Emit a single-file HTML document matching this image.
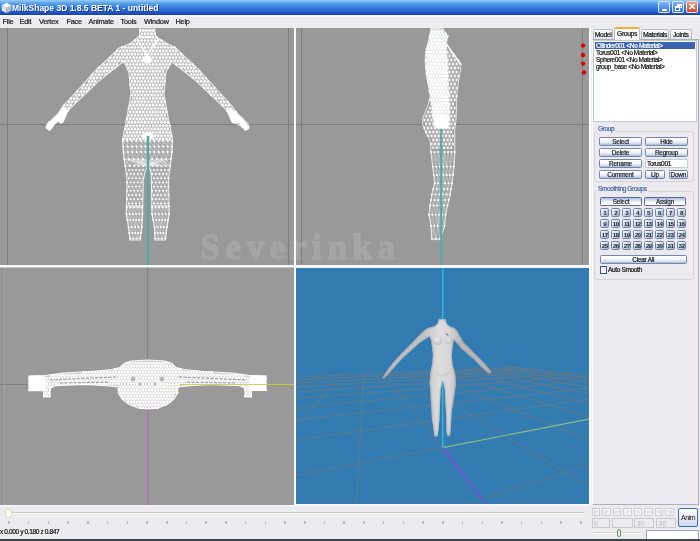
<!DOCTYPE html>
<html><head><meta charset="utf-8">
<style>
*{margin:0;padding:0;box-sizing:border-box}
html,body{width:700px;height:541px;overflow:hidden;background:#ecebf0;font-family:"Liberation Sans",sans-serif;}
.a{position:absolute}
#title{left:0;top:0;width:700px;height:16px;background:linear-gradient(#9ccdf8 0px,#7ab8f2 1.5px,#509ae8 4px,#3a82de 7px,#2c6cd4 10px,#2258c4 12.5px,#1a44a8 14.5px,#1a44a8 15px,#f4f6fa 15.01px);}
#title .t{left:12px;top:2.5px;color:#fff;font-weight:bold;font-size:8.5px;white-space:nowrap;text-shadow:1px 1px 0 #1a3c9c}
#menu{left:0;top:16px;width:700px;height:12px;background:#ecebf0;border-top:1px solid #f8f8fa;}
#menu span{position:absolute;top:0px;font-size:7.3px;letter-spacing:-0.2px;color:#1a1a1a;line-height:10px}
svg{position:absolute;left:0;top:0}
.btn{position:absolute;border:1px solid #7288ae;border-radius:1.5px;background:linear-gradient(#ffffff,#f4f6fa 45%,#d8e0ee 75%,#a9bbd6);font-size:6.4px;color:#151a28;text-align:center;line-height:7px}
.tx{position:absolute;font-size:6.6px;letter-spacing:-0.4px;white-space:nowrap;color:#111;line-height:8px}
.lbl{color:#4a64a0;background:#eceaf0;padding:0 1px}
.gb{border:1px solid #d6d4d0;border-radius:3px}
.tab{border:1px solid #b4bcc6;border-bottom:none;border-radius:2.5px 2.5px 0 0;background:linear-gradient(#ffffff,#f2f4f8 50%,#d8dee8);font-size:6.8px;letter-spacing:-0.4px;text-align:center;line-height:9px;color:#111;white-space:nowrap}
.tab.act{background:#fbfbfc;border-top:2px solid #f0b030;line-height:10px}
.btn{letter-spacing:-0.2px;white-space:nowrap;line-height:7px}
.dflt{border-color:#5a6e98;border-width:1.2px;background:linear-gradient(#aabcd8,#dfe6f2 40%,#ffffff 60%,#fff)}
.nb{position:absolute;width:9px;height:8.6px;border:1px solid #6f84aa;border-radius:1.5px;background:linear-gradient(135deg,#ffffff,#dde4ee 35%,#9aabc6);font-size:6.2px;font-weight:bold;letter-spacing:-0.5px;color:#1a2234;text-align:center;line-height:7px}
.ab{position:absolute;width:8.5px;height:7.5px;border:1px solid #d0d0d8;background:#f4f4f6;font-size:6px;letter-spacing:-0.6px;color:#b8b8c0;text-align:center;line-height:6px}
.fld{border:1px solid #c8c8d0;background:#ecebf0;font-size:7px;color:#b8b8c0;line-height:9px;padding-left:1.5px}
.btn,.tx,.tab,#menu span{-webkit-text-stroke:0.2px currentColor}
</style></head><body><div style="position:absolute;left:0;top:0;width:700px;height:541px;overflow:hidden;will-change:transform">
<div id="title" class="a">
  <div class="a" style="left:1px;top:2px;width:11px;height:12px"><svg width="11" height="12" viewBox="0 0 11 12"><path d="M5.5,0.8 L10.3,3.4 L5.5,6 L0.7,3.4Z" fill="#fbfbfb"/><path d="M0.7,3.4 L5.5,6 L5.5,11.2 L0.7,8.6Z" fill="#dfe3ea"/><path d="M10.3,3.4 L5.5,6 L5.5,11.2 L10.3,8.6Z" fill="#b9c1cc"/></svg></div>
  <div class="a t">MilkShape 3D 1.8.5 BETA 1 - untitled</div>
  <div class="a" style="left:658px;top:1px;width:12px;height:12px;border:1px solid rgba(255,255,255,0.8);border-radius:2px;background:linear-gradient(#7ab2f8,#3a76e4)"><div class="a" style="left:3px;top:7px;width:5px;height:2px;background:#fff"></div></div>
  <div class="a" style="left:672px;top:1px;width:12px;height:12px;border:1px solid rgba(255,255,255,0.8);border-radius:2px;background:linear-gradient(#7ab2f8,#3a76e4)"><div class="a" style="left:4px;top:2px;width:5px;height:4px;border:1px solid #fff;border-top-width:2px"></div><div class="a" style="left:2px;top:4px;width:5px;height:5px;border:1px solid #fff;border-top-width:2px;background:#3a74e0"></div></div>
  <div class="a" style="left:686px;top:1px;width:12px;height:12px;border:1px solid rgba(255,255,255,0.8);border-radius:2px;background:linear-gradient(#ec9878,#d04828);color:#fff;font-size:10px;font-weight:bold;line-height:10px;text-align:center">&#x2715;</div>
</div>
<div id="menu" class="a">
  <span style="left:2.5px">File</span><span style="left:19.5px">Edit</span><span style="left:39px">Vertex</span><span style="left:66.5px">Face</span><span style="left:88.5px">Animate</span><span style="left:120.5px">Tools</span><span style="left:144px">Window</span><span style="left:175.5px">Help</span>
</div>

<svg width="700" height="541" viewBox="0 0 700 541">
<defs>
  <pattern id="dots" width="3" height="3" patternUnits="userSpaceOnUse"><rect width="3" height="3" fill="#bdbdbd"/><circle cx="1.5" cy="1.5" r="1.25" fill="#fff"/></pattern>
  <pattern id="sparse" width="4" height="5" patternUnits="userSpaceOnUse"><rect width="4" height="5" fill="#fff" opacity="0.22"/><path d="M0,0 L4,5 M4,0 L0,5 M0,0 V5" stroke="#fff" stroke-width="0.6" opacity="0.75"/><circle cx="0" cy="0" r="1" fill="#fff"/><circle cx="4" cy="0" r="1" fill="#fff"/></pattern>
  <clipPath id="cfup"><rect x="0" y="0" width="300" height="141"/></clipPath>
  <clipPath id="cflo"><rect x="0" y="141" width="300" height="200"/></clipPath>
  <clipPath id="csup"><rect x="300" y="0" width="300" height="130"/></clipPath>
  <clipPath id="cslo"><rect x="300" y="130" width="300" height="200"/></clipPath>
  <clipPath id="cfront"><path d="M140,27 L154.5,27 L155.5,36 L158,38 L166,43 L176,48 L185,57 L198,69 L220,93 L232,106 L238,114 L248,124 L249,128 L246,130 L238,124 L234,123 L231,112 L226.5,110 L212,96 L196.8,81.6 L185,72 L171.4,61.6 L166,72 L164,94 L167.7,115 L172.5,139 L172,152 L168.5,180 L169.2,214 L167,227 L165.5,240 L155,240 L154.4,227 L152,214 L151.4,180 L150.8,171 L148,165.5 L145.2,171 L143.3,180 L142.5,214 L141.8,227 L140.3,240 L130,240 L128.5,227 L126.3,214 L127,180 L123.3,152 L122.6,139 L127.3,115 L131,94 L128.8,72 L123.6,61.6 L110,72 L98.2,81.6 L83,96 L68.5,110 L64,112 L61,123 L57,121 L49,130 L46,128 L47,124 L57,115 L63,106 L75,93 L97,69 L110,57 L119,48 L129.5,44 L137,38 L139.5,36 Z"/></clipPath>
  <clipPath id="cside"><path d="M431,28 L442.5,28 L447.7,36 L446.4,44 L458,62 L461,68 L458.7,80 L456.7,96 L456.7,103 L456,120 L454.8,129 L454.9,152 L454,166.6 L452.1,183.3 L450.3,194.4 L447.5,205.5 L445.7,214.7 L444.7,225.8 L440.1,239.6 L431.8,239.6 L430.9,225.8 L429,214.7 L430,205.5 L431.8,194.4 L434.6,183.3 L432.7,166.6 L430.9,152 L430.2,140.5 L425.7,132.7 L422.5,123.6 L423.1,117.2 L428.3,104.2 L430.2,96 L426.3,75 L425,59.6 L426.3,49.3 L429.6,36.3 Z"/></clipPath>
  <clipPath id="ctl"><rect x="0" y="28" width="294" height="237"/></clipPath>
  <clipPath id="ctr"><rect x="296" y="28" width="293" height="237"/></clipPath>
  <clipPath id="cbl"><rect x="0" y="267" width="294" height="238"/></clipPath>
  <clipPath id="cbr"><rect x="296" y="268" width="293" height="236"/></clipPath>
  <linearGradient id="skin" gradientUnits="userSpaceOnUse" x1="425" y1="0" x2="460" y2="0"><stop offset="0" stop-color="#c4c4c8"/><stop offset="0.4" stop-color="#dededf"/><stop offset="0.7" stop-color="#d6d6d8"/><stop offset="1" stop-color="#b8b8bc"/></linearGradient>
  <radialGradient id="breast" cx="0.45" cy="0.35" r="0.65"><stop offset="0" stop-color="#e6e6e8"/><stop offset="0.6" stop-color="#d4d4d8"/><stop offset="1" stop-color="#a8a8b0" stop-opacity="0.6"/></radialGradient>
  <filter id="ish" x="-10%" y="-10%" width="120%" height="120%"><feGaussianBlur in="SourceAlpha" stdDeviation="1.0" result="blur"/><feComposite in="SourceAlpha" in2="blur" operator="arithmetic" k2="1" k3="-1" result="edge"/><feFlood flood-color="#6a6a72" result="col"/><feComposite in="col" in2="edge" operator="in" result="sh"/><feMerge><feMergeNode in="SourceGraphic"/><feMergeNode in="sh"/></feMerge></filter>
</defs>
<rect x="0" y="28" width="589" height="477" fill="#f6f6f6"/>
<!-- TL -->
<g clip-path="url(#ctl)">
  <rect x="0" y="28" width="294" height="237" fill="#999"/>
  <g stroke="#7e7e7e" stroke-width="1"><line x1="7.5" y1="28" x2="7.5" y2="265"/><line x1="288.5" y1="28" x2="288.5" y2="265"/><line x1="0" y1="124.5" x2="294" y2="124.5"/></g>
  <path d="M140,27 L154.5,27 L155.5,36 L158,38 L166,43 L176,48 L185,57 L198,69 L220,93 L232,106 L238,114 L248,124 L249,128 L246,130 L238,124 L234,123 L231,112 L226.5,110 L212,96 L196.8,81.6 L185,72 L171.4,61.6 L166,72 L164,94 L167.7,115 L172.5,139 L172,152 L168.5,180 L169.2,214 L167,227 L165.5,240 L155,240 L154.4,227 L152,214 L151.4,180 L150.8,171 L148,165.5 L145.2,171 L143.3,180 L142.5,214 L141.8,227 L140.3,240 L130,240 L128.5,227 L126.3,214 L127,180 L123.3,152 L122.6,139 L127.3,115 L131,94 L128.8,72 L123.6,61.6 L110,72 L98.2,81.6 L83,96 L68.5,110 L64,112 L61,123 L57,121 L49,130 L46,128 L47,124 L57,115 L63,106 L75,93 L97,69 L110,57 L119,48 L129.5,44 L137,38 L139.5,36 Z" fill="#fff" fill-opacity="0.12" stroke="#fff" stroke-width="1.1" stroke-opacity="0.8"/>
  <path d="M140,27 L154.5,27 L155.5,36 L158,38 L166,43 L176,48 L185,57 L198,69 L220,93 L232,106 L238,114 L248,124 L249,128 L246,130 L238,124 L234,123 L231,112 L226.5,110 L212,96 L196.8,81.6 L185,72 L171.4,61.6 L166,72 L164,94 L167.7,115 L172.5,139 L172,152 L168.5,180 L169.2,214 L167,227 L165.5,240 L155,240 L154.4,227 L152,214 L151.4,180 L150.8,171 L148,165.5 L145.2,171 L143.3,180 L142.5,214 L141.8,227 L140.3,240 L130,240 L128.5,227 L126.3,214 L127,180 L123.3,152 L122.6,139 L127.3,115 L131,94 L128.8,72 L123.6,61.6 L110,72 L98.2,81.6 L83,96 L68.5,110 L64,112 L61,123 L57,121 L49,130 L46,128 L47,124 L57,115 L63,106 L75,93 L97,69 L110,57 L119,48 L129.5,44 L137,38 L139.5,36 Z" fill="#fff" fill-opacity="0.12" clip-path="url(#cfup)"/>
  <path d="M140.0 30.4L143.3 30.4M140.0 30.4L141.7 33.8M143.3 30.4L146.7 30.4M143.3 30.4L141.7 33.8M143.3 30.4L145.0 33.8M146.7 30.4L150.0 30.4M146.7 30.4L145.0 33.8M146.7 30.4L148.3 33.8M150.0 30.4L153.2 30.4M150.0 30.4L148.3 33.8M150.0 30.4L151.6 33.8M153.2 30.4L151.6 33.8M153.2 30.4L154.9 33.8M141.7 33.8L145.0 33.8M141.7 33.8L140.0 37.2M141.7 33.8L143.3 37.2M145.0 33.8L148.3 33.8M145.0 33.8L143.3 37.2M145.0 33.8L146.7 37.2M148.3 33.8L151.6 33.8M148.3 33.8L146.7 37.2M148.3 33.8L150.0 37.2M151.6 33.8L154.9 33.8M151.6 33.8L150.0 37.2M151.6 33.8L153.2 37.2M154.9 33.8L153.2 37.2M154.9 33.8L156.5 37.2M140.0 37.2L143.3 37.2M140.0 37.2L138.4 40.6M140.0 37.2L141.7 40.6M143.3 37.2L146.7 37.2M143.3 37.2L141.7 40.6M143.3 37.2L145.0 40.6M146.7 37.2L150.0 37.2M146.7 37.2L145.0 40.6M146.7 37.2L148.3 40.6M150.0 37.2L153.2 37.2M150.0 37.2L148.3 40.6M150.0 37.2L151.6 40.6M153.2 37.2L156.5 37.2M153.2 37.2L151.6 40.6M153.2 37.2L154.9 40.6M156.5 37.2L154.9 40.6M156.5 37.2L158.2 40.6M135.1 40.6L138.4 40.6M135.1 40.6L133.5 44.0M135.1 40.6L136.8 44.0M138.4 40.6L141.7 40.6M138.4 40.6L136.8 44.0M138.4 40.6L140.0 44.0M141.7 40.6L145.0 40.6M141.7 40.6L140.0 44.0M141.7 40.6L143.3 44.0M145.0 40.6L148.3 40.6M145.0 40.6L143.3 44.0M145.0 40.6L146.7 44.0M148.3 40.6L151.6 40.6M148.3 40.6L146.7 44.0M148.3 40.6L150.0 44.0M151.6 40.6L154.9 40.6M151.6 40.6L150.0 44.0M151.6 40.6L153.2 44.0M154.9 40.6L158.2 40.6M154.9 40.6L153.2 44.0M154.9 40.6L156.5 44.0M158.2 40.6L161.5 40.6M158.2 40.6L156.5 44.0M158.2 40.6L159.8 44.0M161.5 40.6L159.8 44.0M161.5 40.6L163.2 44.0M130.2 44.0L133.5 44.0M130.2 44.0L128.5 47.4M130.2 44.0L131.8 47.4M133.5 44.0L136.8 44.0M133.5 44.0L131.8 47.4M133.5 44.0L135.1 47.4M136.8 44.0L140.0 44.0M136.8 44.0L135.1 47.4M136.8 44.0L138.4 47.4M140.0 44.0L143.3 44.0M140.0 44.0L138.4 47.4M140.0 44.0L141.7 47.4M143.3 44.0L146.7 44.0M143.3 44.0L141.7 47.4M143.3 44.0L145.0 47.4M146.7 44.0L150.0 44.0M146.7 44.0L145.0 47.4M146.7 44.0L148.3 47.4M150.0 44.0L153.2 44.0M150.0 44.0L148.3 47.4M150.0 44.0L151.6 47.4M153.2 44.0L156.5 44.0M153.2 44.0L151.6 47.4M153.2 44.0L154.9 47.4M156.5 44.0L159.8 44.0M156.5 44.0L154.9 47.4M156.5 44.0L158.2 47.4M159.8 44.0L163.2 44.0M159.8 44.0L158.2 47.4M159.8 44.0L161.5 47.4M163.2 44.0L166.5 44.0M163.2 44.0L161.5 47.4M163.2 44.0L164.8 47.4M166.5 44.0L164.8 47.4M166.5 44.0L168.1 47.4M121.9 47.4L125.2 47.4M121.9 47.4L120.2 50.8M121.9 47.4L123.5 50.8M125.2 47.4L128.5 47.4M125.2 47.4L123.5 50.8M125.2 47.4L126.8 50.8M128.5 47.4L131.8 47.4M128.5 47.4L126.8 50.8M128.5 47.4L130.2 50.8M131.8 47.4L135.1 47.4M131.8 47.4L130.2 50.8M131.8 47.4L133.5 50.8M135.1 47.4L138.4 47.4M135.1 47.4L133.5 50.8M135.1 47.4L136.8 50.8M138.4 47.4L141.7 47.4M138.4 47.4L136.8 50.8M138.4 47.4L140.0 50.8M141.7 47.4L145.0 47.4M141.7 47.4L140.0 50.8M141.7 47.4L143.3 50.8M145.0 47.4L148.3 47.4M145.0 47.4L143.3 50.8M145.0 47.4L146.7 50.8M148.3 47.4L151.6 47.4M148.3 47.4L146.7 50.8M148.3 47.4L150.0 50.8M151.6 47.4L154.9 47.4M151.6 47.4L150.0 50.8M151.6 47.4L153.2 50.8M154.9 47.4L158.2 47.4M154.9 47.4L153.2 50.8M154.9 47.4L156.5 50.8M158.2 47.4L161.5 47.4M158.2 47.4L156.5 50.8M158.2 47.4L159.8 50.8M161.5 47.4L164.8 47.4M161.5 47.4L159.8 50.8M161.5 47.4L163.2 50.8M164.8 47.4L168.1 47.4M164.8 47.4L163.2 50.8M164.8 47.4L166.5 50.8M168.1 47.4L171.4 47.4M168.1 47.4L166.5 50.8M168.1 47.4L169.8 50.8M171.4 47.4L174.7 47.4M171.4 47.4L169.8 50.8M171.4 47.4L173.0 50.8M174.7 47.4L173.0 50.8M174.7 47.4L176.3 50.8M117.0 50.8L120.2 50.8M117.0 50.8L115.3 54.2M117.0 50.8L118.6 54.2M120.2 50.8L123.5 50.8M120.2 50.8L118.6 54.2M120.2 50.8L121.9 54.2M123.5 50.8L126.8 50.8M123.5 50.8L121.9 54.2M123.5 50.8L125.2 54.2M126.8 50.8L130.2 50.8M126.8 50.8L125.2 54.2M126.8 50.8L128.5 54.2M130.2 50.8L133.5 50.8M130.2 50.8L128.5 54.2M130.2 50.8L131.8 54.2M133.5 50.8L136.8 50.8M133.5 50.8L131.8 54.2M133.5 50.8L135.1 54.2M136.8 50.8L140.0 50.8M136.8 50.8L135.1 54.2M136.8 50.8L138.4 54.2M140.0 50.8L143.3 50.8M140.0 50.8L138.4 54.2M140.0 50.8L141.7 54.2M143.3 50.8L146.7 50.8M143.3 50.8L141.7 54.2M143.3 50.8L145.0 54.2M146.7 50.8L150.0 50.8M146.7 50.8L145.0 54.2M146.7 50.8L148.3 54.2M150.0 50.8L153.2 50.8M150.0 50.8L148.3 54.2M150.0 50.8L151.6 54.2M153.2 50.8L156.5 50.8M153.2 50.8L151.6 54.2M153.2 50.8L154.9 54.2M156.5 50.8L159.8 50.8M156.5 50.8L154.9 54.2M156.5 50.8L158.2 54.2M159.8 50.8L163.2 50.8M159.8 50.8L158.2 54.2M159.8 50.8L161.5 54.2M163.2 50.8L166.5 50.8M163.2 50.8L161.5 54.2M163.2 50.8L164.8 54.2M166.5 50.8L169.8 50.8M166.5 50.8L164.8 54.2M166.5 50.8L168.1 54.2M169.8 50.8L173.0 50.8M169.8 50.8L168.1 54.2M169.8 50.8L171.4 54.2M173.0 50.8L176.3 50.8M173.0 50.8L171.4 54.2M173.0 50.8L174.7 54.2M176.3 50.8L174.7 54.2M176.3 50.8L178.0 54.2M115.3 54.2L118.6 54.2M115.3 54.2L113.7 57.6M115.3 54.2L117.0 57.6M118.6 54.2L121.9 54.2M118.6 54.2L117.0 57.6M118.6 54.2L120.2 57.6M121.9 54.2L125.2 54.2M121.9 54.2L120.2 57.6M121.9 54.2L123.5 57.6M125.2 54.2L128.5 54.2M125.2 54.2L123.5 57.6M125.2 54.2L126.8 57.6M128.5 54.2L131.8 54.2M128.5 54.2L126.8 57.6M128.5 54.2L130.2 57.6M131.8 54.2L135.1 54.2M131.8 54.2L130.2 57.6M131.8 54.2L133.5 57.6M135.1 54.2L138.4 54.2M135.1 54.2L133.5 57.6M135.1 54.2L136.8 57.6M138.4 54.2L141.7 54.2M138.4 54.2L136.8 57.6M138.4 54.2L140.0 57.6M141.7 54.2L145.0 54.2M141.7 54.2L140.0 57.6M141.7 54.2L143.3 57.6M145.0 54.2L148.3 54.2M145.0 54.2L143.3 57.6M145.0 54.2L146.7 57.6M148.3 54.2L151.6 54.2M148.3 54.2L146.7 57.6M148.3 54.2L150.0 57.6M151.6 54.2L154.9 54.2M151.6 54.2L150.0 57.6M151.6 54.2L153.2 57.6M154.9 54.2L158.2 54.2M154.9 54.2L153.2 57.6M154.9 54.2L156.5 57.6M158.2 54.2L161.5 54.2M158.2 54.2L156.5 57.6M158.2 54.2L159.8 57.6M161.5 54.2L164.8 54.2M161.5 54.2L159.8 57.6M161.5 54.2L163.2 57.6M164.8 54.2L168.1 54.2M164.8 54.2L163.2 57.6M164.8 54.2L166.5 57.6M168.1 54.2L171.4 54.2M168.1 54.2L166.5 57.6M168.1 54.2L169.8 57.6M171.4 54.2L174.7 54.2M171.4 54.2L169.8 57.6M171.4 54.2L173.0 57.6M174.7 54.2L178.0 54.2M174.7 54.2L173.0 57.6M174.7 54.2L176.3 57.6M178.0 54.2L181.3 54.2M178.0 54.2L176.3 57.6M178.0 54.2L179.7 57.6M181.3 54.2L179.7 57.6M181.3 54.2L182.9 57.6M110.3 57.6L113.7 57.6M110.3 57.6L108.7 61.0M110.3 57.6L112.0 61.0M113.7 57.6L117.0 57.6M113.7 57.6L112.0 61.0M113.7 57.6L115.3 61.0M117.0 57.6L120.2 57.6M117.0 57.6L115.3 61.0M117.0 57.6L118.6 61.0M120.2 57.6L123.5 57.6M120.2 57.6L118.6 61.0M120.2 57.6L121.9 61.0M123.5 57.6L126.8 57.6M123.5 57.6L121.9 61.0M123.5 57.6L125.2 61.0M126.8 57.6L130.2 57.6M126.8 57.6L125.2 61.0M126.8 57.6L128.5 61.0M130.2 57.6L133.5 57.6M130.2 57.6L128.5 61.0M130.2 57.6L131.8 61.0M133.5 57.6L136.8 57.6M133.5 57.6L131.8 61.0M133.5 57.6L135.1 61.0M136.8 57.6L140.0 57.6M136.8 57.6L135.1 61.0M136.8 57.6L138.4 61.0M140.0 57.6L143.3 57.6M140.0 57.6L138.4 61.0M140.0 57.6L141.7 61.0M143.3 57.6L146.7 57.6M143.3 57.6L141.7 61.0M143.3 57.6L145.0 61.0M146.7 57.6L150.0 57.6M146.7 57.6L145.0 61.0M146.7 57.6L148.3 61.0M150.0 57.6L153.2 57.6M150.0 57.6L148.3 61.0M150.0 57.6L151.6 61.0M153.2 57.6L156.5 57.6M153.2 57.6L151.6 61.0M153.2 57.6L154.9 61.0M156.5 57.6L159.8 57.6M156.5 57.6L154.9 61.0M156.5 57.6L158.2 61.0M159.8 57.6L163.2 57.6M159.8 57.6L158.2 61.0M159.8 57.6L161.5 61.0M163.2 57.6L166.5 57.6M163.2 57.6L161.5 61.0M163.2 57.6L164.8 61.0M166.5 57.6L169.8 57.6M166.5 57.6L164.8 61.0M166.5 57.6L168.1 61.0M169.8 57.6L173.0 57.6M169.8 57.6L168.1 61.0M169.8 57.6L171.4 61.0M173.0 57.6L176.3 57.6M173.0 57.6L171.4 61.0M173.0 57.6L174.7 61.0M176.3 57.6L179.7 57.6M176.3 57.6L174.7 61.0M176.3 57.6L178.0 61.0M179.7 57.6L182.9 57.6M179.7 57.6L178.0 61.0M179.7 57.6L181.3 61.0M182.9 57.6L181.3 61.0M182.9 57.6L184.6 61.0M108.7 61.0L112.0 61.0M108.7 61.0L107.1 64.4M108.7 61.0L110.3 64.4M112.0 61.0L115.3 61.0M112.0 61.0L110.3 64.4M112.0 61.0L113.7 64.4M115.3 61.0L118.6 61.0M115.3 61.0L113.7 64.4M115.3 61.0L117.0 64.4M118.6 61.0L121.9 61.0M118.6 61.0L117.0 64.4M121.9 61.0L125.2 61.0M125.2 61.0L128.5 61.0M125.2 61.0L126.8 64.4M128.5 61.0L131.8 61.0M128.5 61.0L126.8 64.4M128.5 61.0L130.2 64.4M131.8 61.0L135.1 61.0M131.8 61.0L130.2 64.4M131.8 61.0L133.5 64.4M135.1 61.0L138.4 61.0M135.1 61.0L133.5 64.4M135.1 61.0L136.8 64.4M138.4 61.0L141.7 61.0M138.4 61.0L136.8 64.4M138.4 61.0L140.0 64.4M141.7 61.0L145.0 61.0M141.7 61.0L140.0 64.4M141.7 61.0L143.3 64.4M145.0 61.0L148.3 61.0M145.0 61.0L143.3 64.4M145.0 61.0L146.7 64.4M148.3 61.0L151.6 61.0M148.3 61.0L146.7 64.4M148.3 61.0L150.0 64.4M151.6 61.0L154.9 61.0M151.6 61.0L150.0 64.4M151.6 61.0L153.2 64.4M154.9 61.0L158.2 61.0M154.9 61.0L153.2 64.4M154.9 61.0L156.5 64.4M158.2 61.0L161.5 61.0M158.2 61.0L156.5 64.4M158.2 61.0L159.8 64.4M161.5 61.0L164.8 61.0M161.5 61.0L159.8 64.4M161.5 61.0L163.2 64.4M164.8 61.0L168.1 61.0M164.8 61.0L163.2 64.4M164.8 61.0L166.5 64.4M168.1 61.0L171.4 61.0M168.1 61.0L166.5 64.4M168.1 61.0L169.8 64.4M171.4 61.0L174.7 61.0M171.4 61.0L169.8 64.4M174.7 61.0L178.0 61.0M174.7 61.0L176.3 64.4M178.0 61.0L181.3 61.0M178.0 61.0L176.3 64.4M178.0 61.0L179.7 64.4M181.3 61.0L184.6 61.0M181.3 61.0L179.7 64.4M181.3 61.0L182.9 64.4M184.6 61.0L187.9 61.0M184.6 61.0L182.9 64.4M184.6 61.0L186.2 64.4M187.9 61.0L186.2 64.4M187.9 61.0L189.6 64.4M103.8 64.4L107.1 64.4M103.8 64.4L102.1 67.8M103.8 64.4L105.4 67.8M107.1 64.4L110.3 64.4M107.1 64.4L105.4 67.8M107.1 64.4L108.7 67.8M110.3 64.4L113.7 64.4M110.3 64.4L108.7 67.8M110.3 64.4L112.0 67.8M113.7 64.4L117.0 64.4M113.7 64.4L112.0 67.8M113.7 64.4L115.3 67.8M117.0 64.4L115.3 67.8M126.8 64.4L130.2 64.4M126.8 64.4L128.5 67.8M130.2 64.4L133.5 64.4M130.2 64.4L128.5 67.8M130.2 64.4L131.8 67.8M133.5 64.4L136.8 64.4M133.5 64.4L131.8 67.8M133.5 64.4L135.1 67.8M136.8 64.4L140.0 64.4M136.8 64.4L135.1 67.8M136.8 64.4L138.4 67.8M140.0 64.4L143.3 64.4M140.0 64.4L138.4 67.8M140.0 64.4L141.7 67.8M143.3 64.4L146.7 64.4M143.3 64.4L141.7 67.8M143.3 64.4L145.0 67.8M146.7 64.4L150.0 64.4M146.7 64.4L145.0 67.8M146.7 64.4L148.3 67.8M150.0 64.4L153.2 64.4M150.0 64.4L148.3 67.8M150.0 64.4L151.6 67.8M153.2 64.4L156.5 64.4M153.2 64.4L151.6 67.8M153.2 64.4L154.9 67.8M156.5 64.4L159.8 64.4M156.5 64.4L154.9 67.8M156.5 64.4L158.2 67.8M159.8 64.4L163.2 64.4M159.8 64.4L158.2 67.8M159.8 64.4L161.5 67.8M163.2 64.4L166.5 64.4M163.2 64.4L161.5 67.8M163.2 64.4L164.8 67.8M166.5 64.4L169.8 64.4M166.5 64.4L164.8 67.8M166.5 64.4L168.1 67.8M169.8 64.4L168.1 67.8M176.3 64.4L179.7 64.4M179.7 64.4L182.9 64.4M179.7 64.4L181.3 67.8M182.9 64.4L186.2 64.4M182.9 64.4L181.3 67.8M182.9 64.4L184.6 67.8M186.2 64.4L189.6 64.4M186.2 64.4L184.6 67.8M186.2 64.4L187.9 67.8M189.6 64.4L192.8 64.4M189.6 64.4L187.9 67.8M189.6 64.4L191.2 67.8M192.8 64.4L191.2 67.8M192.8 64.4L194.5 67.8M98.8 67.8L102.1 67.8M98.8 67.8L97.2 71.2M98.8 67.8L100.5 71.2M102.1 67.8L105.4 67.8M102.1 67.8L100.5 71.2M102.1 67.8L103.8 71.2M105.4 67.8L108.7 67.8M105.4 67.8L103.8 71.2M105.4 67.8L107.1 71.2M108.7 67.8L112.0 67.8M108.7 67.8L107.1 71.2M108.7 67.8L110.3 71.2M112.0 67.8L115.3 67.8M112.0 67.8L110.3 71.2M128.5 67.8L131.8 67.8M128.5 67.8L130.2 71.2M131.8 67.8L135.1 67.8M131.8 67.8L130.2 71.2M131.8 67.8L133.5 71.2M135.1 67.8L138.4 67.8M135.1 67.8L133.5 71.2M135.1 67.8L136.8 71.2M138.4 67.8L141.7 67.8M138.4 67.8L136.8 71.2M138.4 67.8L140.0 71.2M141.7 67.8L145.0 67.8M141.7 67.8L140.0 71.2M141.7 67.8L143.3 71.2M145.0 67.8L148.3 67.8M145.0 67.8L143.3 71.2M145.0 67.8L146.7 71.2M148.3 67.8L151.6 67.8M148.3 67.8L146.7 71.2M148.3 67.8L150.0 71.2M151.6 67.8L154.9 67.8M151.6 67.8L150.0 71.2M151.6 67.8L153.2 71.2M154.9 67.8L158.2 67.8M154.9 67.8L153.2 71.2M154.9 67.8L156.5 71.2M158.2 67.8L161.5 67.8M158.2 67.8L156.5 71.2M158.2 67.8L159.8 71.2M161.5 67.8L164.8 67.8M161.5 67.8L159.8 71.2M161.5 67.8L163.2 71.2M164.8 67.8L168.1 67.8M164.8 67.8L163.2 71.2M181.3 67.8L184.6 67.8M184.6 67.8L187.9 67.8M184.6 67.8L186.2 71.2M187.9 67.8L191.2 67.8M187.9 67.8L186.2 71.2M187.9 67.8L189.6 71.2M191.2 67.8L194.5 67.8M191.2 67.8L189.6 71.2M191.2 67.8L192.8 71.2M194.5 67.8L192.8 71.2M194.5 67.8L196.2 71.2M97.2 71.2L100.5 71.2M97.2 71.2L95.5 74.6M97.2 71.2L98.8 74.6M100.5 71.2L103.8 71.2M100.5 71.2L98.8 74.6M100.5 71.2L102.1 74.6M103.8 71.2L107.1 71.2M103.8 71.2L102.1 74.6M103.8 71.2L105.4 74.6M107.1 71.2L110.3 71.2M107.1 71.2L105.4 74.6M130.2 71.2L133.5 71.2M130.2 71.2L131.8 74.6M133.5 71.2L136.8 71.2M133.5 71.2L131.8 74.6M133.5 71.2L135.1 74.6M136.8 71.2L140.0 71.2M136.8 71.2L135.1 74.6M136.8 71.2L138.4 74.6M140.0 71.2L143.3 71.2M140.0 71.2L138.4 74.6M140.0 71.2L141.7 74.6M143.3 71.2L146.7 71.2M143.3 71.2L141.7 74.6M143.3 71.2L145.0 74.6M146.7 71.2L150.0 71.2M146.7 71.2L145.0 74.6M146.7 71.2L148.3 74.6M150.0 71.2L153.2 71.2M150.0 71.2L148.3 74.6M150.0 71.2L151.6 74.6M153.2 71.2L156.5 71.2M153.2 71.2L151.6 74.6M153.2 71.2L154.9 74.6M156.5 71.2L159.8 71.2M156.5 71.2L154.9 74.6M156.5 71.2L158.2 74.6M159.8 71.2L163.2 71.2M159.8 71.2L158.2 74.6M159.8 71.2L161.5 74.6M163.2 71.2L161.5 74.6M163.2 71.2L164.8 74.6M186.2 71.2L189.6 71.2M189.6 71.2L192.8 71.2M189.6 71.2L191.2 74.6M192.8 71.2L196.2 71.2M192.8 71.2L191.2 74.6M192.8 71.2L194.5 74.6M196.2 71.2L199.4 71.2M196.2 71.2L194.5 74.6M196.2 71.2L197.8 74.6M199.4 71.2L197.8 74.6M199.4 71.2L201.1 74.6M92.2 74.6L95.5 74.6M92.2 74.6L90.6 78.0M92.2 74.6L93.8 78.0M95.5 74.6L98.8 74.6M95.5 74.6L93.8 78.0M95.5 74.6L97.2 78.0M98.8 74.6L102.1 74.6M98.8 74.6L97.2 78.0M98.8 74.6L100.5 78.0M102.1 74.6L105.4 74.6M102.1 74.6L100.5 78.0M131.8 74.6L135.1 74.6M131.8 74.6L130.2 78.0M131.8 74.6L133.5 78.0M135.1 74.6L138.4 74.6M135.1 74.6L133.5 78.0M135.1 74.6L136.8 78.0M138.4 74.6L141.7 74.6M138.4 74.6L136.8 78.0M138.4 74.6L140.0 78.0M141.7 74.6L145.0 74.6M141.7 74.6L140.0 78.0M141.7 74.6L143.3 78.0M145.0 74.6L148.3 74.6M145.0 74.6L143.3 78.0M145.0 74.6L146.7 78.0M148.3 74.6L151.6 74.6M148.3 74.6L146.7 78.0M148.3 74.6L150.0 78.0M151.6 74.6L154.9 74.6M151.6 74.6L150.0 78.0M151.6 74.6L153.2 78.0M154.9 74.6L158.2 74.6M154.9 74.6L153.2 78.0M154.9 74.6L156.5 78.0M158.2 74.6L161.5 74.6M158.2 74.6L156.5 78.0M158.2 74.6L159.8 78.0M161.5 74.6L164.8 74.6M161.5 74.6L159.8 78.0M161.5 74.6L163.2 78.0M164.8 74.6L163.2 78.0M191.2 74.6L194.5 74.6M191.2 74.6L192.8 78.0M194.5 74.6L197.8 74.6M194.5 74.6L192.8 78.0M194.5 74.6L196.2 78.0M197.8 74.6L201.1 74.6M197.8 74.6L196.2 78.0M197.8 74.6L199.4 78.0M201.1 74.6L199.4 78.0M201.1 74.6L202.8 78.0M90.6 78.0L93.8 78.0M90.6 78.0L88.9 81.4M90.6 78.0L92.2 81.4M93.8 78.0L97.2 78.0M93.8 78.0L92.2 81.4M93.8 78.0L95.5 81.4M97.2 78.0L100.5 78.0M97.2 78.0L95.5 81.4M130.2 78.0L133.5 78.0M130.2 78.0L131.8 81.4M133.5 78.0L136.8 78.0M133.5 78.0L131.8 81.4M133.5 78.0L135.1 81.4M136.8 78.0L140.0 78.0M136.8 78.0L135.1 81.4M136.8 78.0L138.4 81.4M140.0 78.0L143.3 78.0M140.0 78.0L138.4 81.4M140.0 78.0L141.7 81.4M143.3 78.0L146.7 78.0M143.3 78.0L141.7 81.4M143.3 78.0L145.0 81.4M146.7 78.0L150.0 78.0M146.7 78.0L145.0 81.4M146.7 78.0L148.3 81.4M150.0 78.0L153.2 78.0M150.0 78.0L148.3 81.4M150.0 78.0L151.6 81.4M153.2 78.0L156.5 78.0M153.2 78.0L151.6 81.4M153.2 78.0L154.9 81.4M156.5 78.0L159.8 78.0M156.5 78.0L154.9 81.4M156.5 78.0L158.2 81.4M159.8 78.0L163.2 78.0M159.8 78.0L158.2 81.4M159.8 78.0L161.5 81.4M163.2 78.0L161.5 81.4M163.2 78.0L164.8 81.4M192.8 78.0L196.2 78.0M196.2 78.0L199.4 78.0M196.2 78.0L197.8 81.4M199.4 78.0L202.8 78.0M199.4 78.0L197.8 81.4M199.4 78.0L201.1 81.4M202.8 78.0L206.0 78.0M202.8 78.0L201.1 81.4M202.8 78.0L204.4 81.4M206.0 78.0L204.4 81.4M206.0 78.0L207.7 81.4M88.9 81.4L92.2 81.4M88.9 81.4L87.2 84.8M88.9 81.4L90.6 84.8M92.2 81.4L95.5 81.4M92.2 81.4L90.6 84.8M92.2 81.4L93.8 84.8M95.5 81.4L93.8 84.8M131.8 81.4L135.1 81.4M131.8 81.4L130.2 84.8M131.8 81.4L133.5 84.8M135.1 81.4L138.4 81.4M135.1 81.4L133.5 84.8M135.1 81.4L136.8 84.8M138.4 81.4L141.7 81.4M138.4 81.4L136.8 84.8M138.4 81.4L140.0 84.8M141.7 81.4L145.0 81.4M141.7 81.4L140.0 84.8M141.7 81.4L143.3 84.8M145.0 81.4L148.3 81.4M145.0 81.4L143.3 84.8M145.0 81.4L146.7 84.8M148.3 81.4L151.6 81.4M148.3 81.4L146.7 84.8M148.3 81.4L150.0 84.8M151.6 81.4L154.9 81.4M151.6 81.4L150.0 84.8M151.6 81.4L153.2 84.8M154.9 81.4L158.2 81.4M154.9 81.4L153.2 84.8M154.9 81.4L156.5 84.8M158.2 81.4L161.5 81.4M158.2 81.4L156.5 84.8M158.2 81.4L159.8 84.8M161.5 81.4L164.8 81.4M161.5 81.4L159.8 84.8M161.5 81.4L163.2 84.8M164.8 81.4L163.2 84.8M197.8 81.4L201.1 81.4M201.1 81.4L204.4 81.4M201.1 81.4L202.8 84.8M204.4 81.4L207.7 81.4M204.4 81.4L202.8 84.8M204.4 81.4L206.0 84.8M207.7 81.4L206.0 84.8M207.7 81.4L209.3 84.8M84.0 84.8L87.2 84.8M84.0 84.8L82.3 88.2M84.0 84.8L85.6 88.2M87.2 84.8L90.6 84.8M87.2 84.8L85.6 88.2M87.2 84.8L88.9 88.2M90.6 84.8L93.8 84.8M90.6 84.8L88.9 88.2M130.2 84.8L133.5 84.8M130.2 84.8L131.8 88.2M133.5 84.8L136.8 84.8M133.5 84.8L131.8 88.2M133.5 84.8L135.1 88.2M136.8 84.8L140.0 84.8M136.8 84.8L135.1 88.2M136.8 84.8L138.4 88.2M140.0 84.8L143.3 84.8M140.0 84.8L138.4 88.2M140.0 84.8L141.7 88.2M143.3 84.8L146.7 84.8M143.3 84.8L141.7 88.2M143.3 84.8L145.0 88.2M146.7 84.8L150.0 84.8M146.7 84.8L145.0 88.2M146.7 84.8L148.3 88.2M150.0 84.8L153.2 84.8M150.0 84.8L148.3 88.2M150.0 84.8L151.6 88.2M153.2 84.8L156.5 84.8M153.2 84.8L151.6 88.2M153.2 84.8L154.9 88.2M156.5 84.8L159.8 84.8M156.5 84.8L154.9 88.2M156.5 84.8L158.2 88.2M159.8 84.8L163.2 84.8M159.8 84.8L158.2 88.2M159.8 84.8L161.5 88.2M163.2 84.8L161.5 88.2M202.8 84.8L206.0 84.8M202.8 84.8L204.4 88.2M206.0 84.8L209.3 84.8M206.0 84.8L204.4 88.2M206.0 84.8L207.7 88.2M209.3 84.8L207.7 88.2M209.3 84.8L211.0 88.2M82.3 88.2L85.6 88.2M82.3 88.2L80.7 91.6M82.3 88.2L84.0 91.6M85.6 88.2L88.9 88.2M85.6 88.2L84.0 91.6M85.6 88.2L87.2 91.6M88.9 88.2L87.2 91.6M131.8 88.2L135.1 88.2M131.8 88.2L133.5 91.6M135.1 88.2L138.4 88.2M135.1 88.2L133.5 91.6M135.1 88.2L136.8 91.6M138.4 88.2L141.7 88.2M138.4 88.2L136.8 91.6M138.4 88.2L140.0 91.6M141.7 88.2L145.0 88.2M141.7 88.2L140.0 91.6M141.7 88.2L143.3 91.6M145.0 88.2L148.3 88.2M145.0 88.2L143.3 91.6M145.0 88.2L146.7 91.6M148.3 88.2L151.6 88.2M148.3 88.2L146.7 91.6M148.3 88.2L150.0 91.6M151.6 88.2L154.9 88.2M151.6 88.2L150.0 91.6M151.6 88.2L153.2 91.6M154.9 88.2L158.2 88.2M154.9 88.2L153.2 91.6M154.9 88.2L156.5 91.6M158.2 88.2L161.5 88.2M158.2 88.2L156.5 91.6M158.2 88.2L159.8 91.6M161.5 88.2L159.8 91.6M161.5 88.2L163.2 91.6M204.4 88.2L207.7 88.2M207.7 88.2L211.0 88.2M207.7 88.2L209.3 91.6M211.0 88.2L214.3 88.2M211.0 88.2L209.3 91.6M211.0 88.2L212.7 91.6M214.3 88.2L212.7 91.6M214.3 88.2L215.9 91.6M77.4 91.6L80.7 91.6M77.4 91.6L75.7 95.0M77.4 91.6L79.0 95.0M80.7 91.6L84.0 91.6M80.7 91.6L79.0 95.0M80.7 91.6L82.3 95.0M84.0 91.6L87.2 91.6M84.0 91.6L82.3 95.0M133.5 91.6L136.8 91.6M133.5 91.6L131.8 95.0M133.5 91.6L135.1 95.0M136.8 91.6L140.0 91.6M136.8 91.6L135.1 95.0M136.8 91.6L138.4 95.0M140.0 91.6L143.3 91.6M140.0 91.6L138.4 95.0M140.0 91.6L141.7 95.0M143.3 91.6L146.7 91.6M143.3 91.6L141.7 95.0M143.3 91.6L145.0 95.0M146.7 91.6L150.0 91.6M146.7 91.6L145.0 95.0M146.7 91.6L148.3 95.0M150.0 91.6L153.2 91.6M150.0 91.6L148.3 95.0M150.0 91.6L151.6 95.0M153.2 91.6L156.5 91.6M153.2 91.6L151.6 95.0M153.2 91.6L154.9 95.0M156.5 91.6L159.8 91.6M156.5 91.6L154.9 95.0M156.5 91.6L158.2 95.0M159.8 91.6L163.2 91.6M159.8 91.6L158.2 95.0M159.8 91.6L161.5 95.0M163.2 91.6L161.5 95.0M209.3 91.6L212.7 91.6M209.3 91.6L211.0 95.0M212.7 91.6L215.9 91.6M212.7 91.6L211.0 95.0M212.7 91.6L214.3 95.0M215.9 91.6L214.3 95.0M215.9 91.6L217.6 95.0M75.7 95.0L79.0 95.0M75.7 95.0L74.1 98.4M75.7 95.0L77.4 98.4M79.0 95.0L82.3 95.0M79.0 95.0L77.4 98.4M131.8 95.0L135.1 95.0M131.8 95.0L133.5 98.4M135.1 95.0L138.4 95.0M135.1 95.0L133.5 98.4M135.1 95.0L136.8 98.4M138.4 95.0L141.7 95.0M138.4 95.0L136.8 98.4M138.4 95.0L140.0 98.4M141.7 95.0L145.0 95.0M141.7 95.0L140.0 98.4M141.7 95.0L143.3 98.4M145.0 95.0L148.3 95.0M145.0 95.0L143.3 98.4M145.0 95.0L146.7 98.4M148.3 95.0L151.6 95.0M148.3 95.0L146.7 98.4M148.3 95.0L150.0 98.4M151.6 95.0L154.9 95.0M151.6 95.0L150.0 98.4M151.6 95.0L153.2 98.4M154.9 95.0L158.2 95.0M154.9 95.0L153.2 98.4M154.9 95.0L156.5 98.4M158.2 95.0L161.5 95.0M158.2 95.0L156.5 98.4M158.2 95.0L159.8 98.4M161.5 95.0L159.8 98.4M161.5 95.0L163.2 98.4M211.0 95.0L214.3 95.0M214.3 95.0L217.6 95.0M214.3 95.0L215.9 98.4M217.6 95.0L220.9 95.0M217.6 95.0L215.9 98.4M217.6 95.0L219.2 98.4M220.9 95.0L219.2 98.4M220.9 95.0L222.5 98.4M70.8 98.4L74.1 98.4M70.8 98.4L69.1 101.8M70.8 98.4L72.4 101.8M74.1 98.4L77.4 98.4M74.1 98.4L72.4 101.8M74.1 98.4L75.7 101.8M77.4 98.4L75.7 101.8M133.5 98.4L136.8 98.4M133.5 98.4L131.8 101.8M133.5 98.4L135.1 101.8M136.8 98.4L140.0 98.4M136.8 98.4L135.1 101.8M136.8 98.4L138.4 101.8M140.0 98.4L143.3 98.4M140.0 98.4L138.4 101.8M140.0 98.4L141.7 101.8M143.3 98.4L146.7 98.4M143.3 98.4L141.7 101.8M143.3 98.4L145.0 101.8M146.7 98.4L150.0 98.4M146.7 98.4L145.0 101.8M146.7 98.4L148.3 101.8M150.0 98.4L153.2 98.4M150.0 98.4L148.3 101.8M150.0 98.4L151.6 101.8M153.2 98.4L156.5 98.4M153.2 98.4L151.6 101.8M153.2 98.4L154.9 101.8M156.5 98.4L159.8 98.4M156.5 98.4L154.9 101.8M156.5 98.4L158.2 101.8M159.8 98.4L163.2 98.4M159.8 98.4L158.2 101.8M159.8 98.4L161.5 101.8M163.2 98.4L161.5 101.8M163.2 98.4L164.8 101.8M215.9 98.4L219.2 98.4M219.2 98.4L222.5 98.4M219.2 98.4L220.9 101.8M222.5 98.4L220.9 101.8M222.5 98.4L224.2 101.8M69.1 101.8L72.4 101.8M69.1 101.8L67.5 105.2M69.1 101.8L70.8 105.2M72.4 101.8L75.7 101.8M72.4 101.8L70.8 105.2M131.8 101.8L135.1 101.8M131.8 101.8L130.2 105.2M131.8 101.8L133.5 105.2M135.1 101.8L138.4 101.8M135.1 101.8L133.5 105.2M135.1 101.8L136.8 105.2M138.4 101.8L141.7 101.8M138.4 101.8L136.8 105.2M138.4 101.8L140.0 105.2M141.7 101.8L145.0 101.8M141.7 101.8L140.0 105.2M141.7 101.8L143.3 105.2M145.0 101.8L148.3 101.8M145.0 101.8L143.3 105.2M145.0 101.8L146.7 105.2M148.3 101.8L151.6 101.8M148.3 101.8L146.7 105.2M148.3 101.8L150.0 105.2M151.6 101.8L154.9 101.8M151.6 101.8L150.0 105.2M151.6 101.8L153.2 105.2M154.9 101.8L158.2 101.8M154.9 101.8L153.2 105.2M154.9 101.8L156.5 105.2M158.2 101.8L161.5 101.8M158.2 101.8L156.5 105.2M158.2 101.8L159.8 105.2M161.5 101.8L164.8 101.8M161.5 101.8L159.8 105.2M161.5 101.8L163.2 105.2M164.8 101.8L163.2 105.2M220.9 101.8L224.2 101.8M220.9 101.8L222.5 105.2M224.2 101.8L227.5 101.8M224.2 101.8L222.5 105.2M224.2 101.8L225.8 105.2M227.5 101.8L225.8 105.2M227.5 101.8L229.2 105.2M64.2 105.2L67.5 105.2M64.2 105.2L62.5 108.6M64.2 105.2L65.8 108.6M67.5 105.2L70.8 105.2M67.5 105.2L65.8 108.6M67.5 105.2L69.1 108.6M70.8 105.2L69.1 108.6M130.2 105.2L133.5 105.2M130.2 105.2L128.5 108.6M130.2 105.2L131.8 108.6M133.5 105.2L136.8 105.2M133.5 105.2L131.8 108.6M133.5 105.2L135.1 108.6M136.8 105.2L140.0 105.2M136.8 105.2L135.1 108.6M136.8 105.2L138.4 108.6M140.0 105.2L143.3 105.2M140.0 105.2L138.4 108.6M140.0 105.2L141.7 108.6M143.3 105.2L146.7 105.2M143.3 105.2L141.7 108.6M143.3 105.2L145.0 108.6M146.7 105.2L150.0 105.2M146.7 105.2L145.0 108.6M146.7 105.2L148.3 108.6M150.0 105.2L153.2 105.2M150.0 105.2L148.3 108.6M150.0 105.2L151.6 108.6M153.2 105.2L156.5 105.2M153.2 105.2L151.6 108.6M153.2 105.2L154.9 108.6M156.5 105.2L159.8 105.2M156.5 105.2L154.9 108.6M156.5 105.2L158.2 108.6M159.8 105.2L163.2 105.2M159.8 105.2L158.2 108.6M159.8 105.2L161.5 108.6M163.2 105.2L161.5 108.6M163.2 105.2L164.8 108.6M222.5 105.2L225.8 105.2M225.8 105.2L229.2 105.2M225.8 105.2L227.5 108.6M229.2 105.2L227.5 108.6M229.2 105.2L230.8 108.6M62.5 108.6L65.8 108.6M62.5 108.6L60.9 112.0M65.8 108.6L69.1 108.6M128.5 108.6L131.8 108.6M128.5 108.6L130.2 112.0M131.8 108.6L135.1 108.6M131.8 108.6L130.2 112.0M131.8 108.6L133.5 112.0M135.1 108.6L138.4 108.6M135.1 108.6L133.5 112.0M135.1 108.6L136.8 112.0M138.4 108.6L141.7 108.6M138.4 108.6L136.8 112.0M138.4 108.6L140.0 112.0M141.7 108.6L145.0 108.6M141.7 108.6L140.0 112.0M141.7 108.6L143.3 112.0M145.0 108.6L148.3 108.6M145.0 108.6L143.3 112.0M145.0 108.6L146.7 112.0M148.3 108.6L151.6 108.6M148.3 108.6L146.7 112.0M148.3 108.6L150.0 112.0M151.6 108.6L154.9 108.6M151.6 108.6L150.0 112.0M151.6 108.6L153.2 112.0M154.9 108.6L158.2 108.6M154.9 108.6L153.2 112.0M154.9 108.6L156.5 112.0M158.2 108.6L161.5 108.6M158.2 108.6L156.5 112.0M158.2 108.6L159.8 112.0M161.5 108.6L164.8 108.6M161.5 108.6L159.8 112.0M161.5 108.6L163.2 112.0M164.8 108.6L163.2 112.0M164.8 108.6L166.5 112.0M227.5 108.6L230.8 108.6M230.8 108.6L232.4 112.0M60.9 112.0L59.2 115.4M60.9 112.0L62.5 115.4M130.2 112.0L133.5 112.0M130.2 112.0L128.5 115.4M130.2 112.0L131.8 115.4M133.5 112.0L136.8 112.0M133.5 112.0L131.8 115.4M133.5 112.0L135.1 115.4M136.8 112.0L140.0 112.0M136.8 112.0L135.1 115.4M136.8 112.0L138.4 115.4M140.0 112.0L143.3 112.0M140.0 112.0L138.4 115.4M140.0 112.0L141.7 115.4M143.3 112.0L146.7 112.0M143.3 112.0L141.7 115.4M143.3 112.0L145.0 115.4M146.7 112.0L150.0 112.0M146.7 112.0L145.0 115.4M146.7 112.0L148.3 115.4M150.0 112.0L153.2 112.0M150.0 112.0L148.3 115.4M150.0 112.0L151.6 115.4M153.2 112.0L156.5 112.0M153.2 112.0L151.6 115.4M153.2 112.0L154.9 115.4M156.5 112.0L159.8 112.0M156.5 112.0L154.9 115.4M156.5 112.0L158.2 115.4M159.8 112.0L163.2 112.0M159.8 112.0L158.2 115.4M159.8 112.0L161.5 115.4M163.2 112.0L166.5 112.0M163.2 112.0L161.5 115.4M163.2 112.0L164.8 115.4M166.5 112.0L164.8 115.4M232.4 112.0L235.8 112.0M232.4 112.0L234.1 115.4M235.8 112.0L234.1 115.4M235.8 112.0L237.4 115.4M59.2 115.4L62.5 115.4M59.2 115.4L57.5 118.8M59.2 115.4L60.9 118.8M62.5 115.4L60.9 118.8M128.5 115.4L131.8 115.4M128.5 115.4L126.8 118.8M128.5 115.4L130.2 118.8M131.8 115.4L135.1 115.4M131.8 115.4L130.2 118.8M131.8 115.4L133.5 118.8M135.1 115.4L138.4 115.4M135.1 115.4L133.5 118.8M135.1 115.4L136.8 118.8M138.4 115.4L141.7 115.4M138.4 115.4L136.8 118.8M138.4 115.4L140.0 118.8M141.7 115.4L145.0 115.4M141.7 115.4L140.0 118.8M141.7 115.4L143.3 118.8M145.0 115.4L148.3 115.4M145.0 115.4L143.3 118.8M145.0 115.4L146.7 118.8M148.3 115.4L151.6 115.4M148.3 115.4L146.7 118.8M148.3 115.4L150.0 118.8M151.6 115.4L154.9 115.4M151.6 115.4L150.0 118.8M151.6 115.4L153.2 118.8M154.9 115.4L158.2 115.4M154.9 115.4L153.2 118.8M154.9 115.4L156.5 118.8M158.2 115.4L161.5 115.4M158.2 115.4L156.5 118.8M158.2 115.4L159.8 118.8M161.5 115.4L164.8 115.4M161.5 115.4L159.8 118.8M161.5 115.4L163.2 118.8M164.8 115.4L163.2 118.8M164.8 115.4L166.5 118.8M234.1 115.4L237.4 115.4M234.1 115.4L235.8 118.8M237.4 115.4L235.8 118.8M237.4 115.4L239.0 118.8M54.2 118.8L57.5 118.8M54.2 118.8L52.6 122.2M54.2 118.8L55.9 122.2M57.5 118.8L60.9 118.8M57.5 118.8L55.9 122.2M126.8 118.8L130.2 118.8M126.8 118.8L128.5 122.2M130.2 118.8L133.5 118.8M130.2 118.8L128.5 122.2M130.2 118.8L131.8 122.2M133.5 118.8L136.8 118.8M133.5 118.8L131.8 122.2M133.5 118.8L135.1 122.2M136.8 118.8L140.0 118.8M136.8 118.8L135.1 122.2M136.8 118.8L138.4 122.2M140.0 118.8L143.3 118.8M140.0 118.8L138.4 122.2M140.0 118.8L141.7 122.2M143.3 118.8L146.7 118.8M143.3 118.8L141.7 122.2M143.3 118.8L145.0 122.2M146.7 118.8L150.0 118.8M146.7 118.8L145.0 122.2M146.7 118.8L148.3 122.2M150.0 118.8L153.2 118.8M150.0 118.8L148.3 122.2M150.0 118.8L151.6 122.2M153.2 118.8L156.5 118.8M153.2 118.8L151.6 122.2M153.2 118.8L154.9 122.2M156.5 118.8L159.8 118.8M156.5 118.8L154.9 122.2M156.5 118.8L158.2 122.2M159.8 118.8L163.2 118.8M159.8 118.8L158.2 122.2M159.8 118.8L161.5 122.2M163.2 118.8L166.5 118.8M163.2 118.8L161.5 122.2M163.2 118.8L164.8 122.2M166.5 118.8L164.8 122.2M166.5 118.8L168.1 122.2M235.8 118.8L239.0 118.8M235.8 118.8L234.1 122.2M235.8 118.8L237.4 122.2M239.0 118.8L242.3 118.8M239.0 118.8L237.4 122.2M239.0 118.8L240.7 122.2M242.3 118.8L240.7 122.2M242.3 118.8L244.0 122.2M49.3 122.2L52.6 122.2M49.3 122.2L47.6 125.6M49.3 122.2L50.9 125.6M52.6 122.2L55.9 122.2M52.6 122.2L50.9 125.6M128.5 122.2L131.8 122.2M128.5 122.2L126.8 125.6M128.5 122.2L130.2 125.6M131.8 122.2L135.1 122.2M131.8 122.2L130.2 125.6M131.8 122.2L133.5 125.6M135.1 122.2L138.4 122.2M135.1 122.2L133.5 125.6M135.1 122.2L136.8 125.6M138.4 122.2L141.7 122.2M138.4 122.2L136.8 125.6M138.4 122.2L140.0 125.6M141.7 122.2L145.0 122.2M141.7 122.2L140.0 125.6M141.7 122.2L143.3 125.6M145.0 122.2L148.3 122.2M145.0 122.2L143.3 125.6M145.0 122.2L146.7 125.6M148.3 122.2L151.6 122.2M148.3 122.2L146.7 125.6M148.3 122.2L150.0 125.6M151.6 122.2L154.9 122.2M151.6 122.2L150.0 125.6M151.6 122.2L153.2 125.6M154.9 122.2L158.2 122.2M154.9 122.2L153.2 125.6M154.9 122.2L156.5 125.6M158.2 122.2L161.5 122.2M158.2 122.2L156.5 125.6M158.2 122.2L159.8 125.6M161.5 122.2L164.8 122.2M161.5 122.2L159.8 125.6M161.5 122.2L163.2 125.6M164.8 122.2L168.1 122.2M164.8 122.2L163.2 125.6M164.8 122.2L166.5 125.6M168.1 122.2L166.5 125.6M168.1 122.2L169.8 125.6M234.1 122.2L237.4 122.2M237.4 122.2L240.7 122.2M240.7 122.2L244.0 122.2M240.7 122.2L242.3 125.6M244.0 122.2L242.3 125.6M244.0 122.2L245.7 125.6M47.6 125.6L50.9 125.6M47.6 125.6L49.3 129.0M50.9 125.6L49.3 129.0M126.8 125.6L130.2 125.6M126.8 125.6L125.2 129.0M126.8 125.6L128.5 129.0M130.2 125.6L133.5 125.6M130.2 125.6L128.5 129.0M130.2 125.6L131.8 129.0M133.5 125.6L136.8 125.6M133.5 125.6L131.8 129.0M133.5 125.6L135.1 129.0M136.8 125.6L140.0 125.6M136.8 125.6L135.1 129.0M136.8 125.6L138.4 129.0M140.0 125.6L143.3 125.6M140.0 125.6L138.4 129.0M140.0 125.6L141.7 129.0M143.3 125.6L146.7 125.6M143.3 125.6L141.7 129.0M143.3 125.6L145.0 129.0M146.7 125.6L150.0 125.6M146.7 125.6L145.0 129.0M146.7 125.6L148.3 129.0M150.0 125.6L153.2 125.6M150.0 125.6L148.3 129.0M150.0 125.6L151.6 129.0M153.2 125.6L156.5 125.6M153.2 125.6L151.6 129.0M153.2 125.6L154.9 129.0M156.5 125.6L159.8 125.6M156.5 125.6L154.9 129.0M156.5 125.6L158.2 129.0M159.8 125.6L163.2 125.6M159.8 125.6L158.2 129.0M159.8 125.6L161.5 129.0M163.2 125.6L166.5 125.6M163.2 125.6L161.5 129.0M163.2 125.6L164.8 129.0M166.5 125.6L169.8 125.6M166.5 125.6L164.8 129.0M166.5 125.6L168.1 129.0M169.8 125.6L168.1 129.0M242.3 125.6L245.7 125.6M245.7 125.6L247.3 129.0M125.2 129.0L128.5 129.0M125.2 129.0L126.8 132.4M128.5 129.0L131.8 129.0M128.5 129.0L126.8 132.4M128.5 129.0L130.2 132.4M131.8 129.0L135.1 129.0M131.8 129.0L130.2 132.4M131.8 129.0L133.5 132.4M135.1 129.0L138.4 129.0M135.1 129.0L133.5 132.4M135.1 129.0L136.8 132.4M138.4 129.0L141.7 129.0M138.4 129.0L136.8 132.4M138.4 129.0L140.0 132.4M141.7 129.0L145.0 129.0M141.7 129.0L140.0 132.4M141.7 129.0L143.3 132.4M145.0 129.0L148.3 129.0M145.0 129.0L143.3 132.4M145.0 129.0L146.7 132.4M148.3 129.0L151.6 129.0M148.3 129.0L146.7 132.4M148.3 129.0L150.0 132.4M151.6 129.0L154.9 129.0M151.6 129.0L150.0 132.4M151.6 129.0L153.2 132.4M154.9 129.0L158.2 129.0M154.9 129.0L153.2 132.4M154.9 129.0L156.5 132.4M158.2 129.0L161.5 129.0M158.2 129.0L156.5 132.4M158.2 129.0L159.8 132.4M161.5 129.0L164.8 129.0M161.5 129.0L159.8 132.4M161.5 129.0L163.2 132.4M164.8 129.0L168.1 129.0M164.8 129.0L163.2 132.4M164.8 129.0L166.5 132.4M168.1 129.0L166.5 132.4M168.1 129.0L169.8 132.4M126.8 132.4L130.2 132.4M126.8 132.4L125.2 135.8M126.8 132.4L128.5 135.8M130.2 132.4L133.5 132.4M130.2 132.4L128.5 135.8M130.2 132.4L131.8 135.8M133.5 132.4L136.8 132.4M133.5 132.4L131.8 135.8M133.5 132.4L135.1 135.8M136.8 132.4L140.0 132.4M136.8 132.4L135.1 135.8M136.8 132.4L138.4 135.8M140.0 132.4L143.3 132.4M140.0 132.4L138.4 135.8M140.0 132.4L141.7 135.8M143.3 132.4L146.7 132.4M143.3 132.4L141.7 135.8M143.3 132.4L145.0 135.8M146.7 132.4L150.0 132.4M146.7 132.4L145.0 135.8M146.7 132.4L148.3 135.8M150.0 132.4L153.2 132.4M150.0 132.4L148.3 135.8M150.0 132.4L151.6 135.8M153.2 132.4L156.5 132.4M153.2 132.4L151.6 135.8M153.2 132.4L154.9 135.8M156.5 132.4L159.8 132.4M156.5 132.4L154.9 135.8M156.5 132.4L158.2 135.8M159.8 132.4L163.2 132.4M159.8 132.4L158.2 135.8M159.8 132.4L161.5 135.8M163.2 132.4L166.5 132.4M163.2 132.4L161.5 135.8M163.2 132.4L164.8 135.8M166.5 132.4L169.8 132.4M166.5 132.4L164.8 135.8M166.5 132.4L168.1 135.8M169.8 132.4L168.1 135.8M169.8 132.4L171.4 135.8M125.2 135.8L128.5 135.8M125.2 135.8L123.5 139.2M125.2 135.8L126.8 139.2M128.5 135.8L131.8 135.8M128.5 135.8L126.8 139.2M128.5 135.8L130.2 139.2M131.8 135.8L135.1 135.8M131.8 135.8L130.2 139.2M131.8 135.8L133.5 139.2M135.1 135.8L138.4 135.8M135.1 135.8L133.5 139.2M135.1 135.8L136.8 139.2M138.4 135.8L141.7 135.8M138.4 135.8L136.8 139.2M138.4 135.8L140.0 139.2M141.7 135.8L145.0 135.8M141.7 135.8L140.0 139.2M141.7 135.8L143.3 139.2M145.0 135.8L148.3 135.8M145.0 135.8L143.3 139.2M145.0 135.8L146.7 139.2M148.3 135.8L151.6 135.8M148.3 135.8L146.7 139.2M148.3 135.8L150.0 139.2M151.6 135.8L154.9 135.8M151.6 135.8L150.0 139.2M151.6 135.8L153.2 139.2M154.9 135.8L158.2 135.8M154.9 135.8L153.2 139.2M154.9 135.8L156.5 139.2M158.2 135.8L161.5 135.8M158.2 135.8L156.5 139.2M158.2 135.8L159.8 139.2M161.5 135.8L164.8 135.8M161.5 135.8L159.8 139.2M161.5 135.8L163.2 139.2M164.8 135.8L168.1 135.8M164.8 135.8L163.2 139.2M164.8 135.8L166.5 139.2M168.1 135.8L171.4 135.8M168.1 135.8L166.5 139.2M168.1 135.8L169.8 139.2M171.4 135.8L169.8 139.2M123.5 139.2L126.8 139.2M126.8 139.2L130.2 139.2M130.2 139.2L133.5 139.2M133.5 139.2L136.8 139.2M136.8 139.2L140.0 139.2M140.0 139.2L143.3 139.2M143.3 139.2L146.7 139.2M146.7 139.2L150.0 139.2M150.0 139.2L153.2 139.2M153.2 139.2L156.5 139.2M156.5 139.2L159.8 139.2M159.8 139.2L163.2 139.2M163.2 139.2L166.5 139.2M166.5 139.2L169.8 139.2" stroke="#fff" stroke-width="0.80" stroke-opacity="0.80" fill="none"/><path d="M140.0 30.4h0M143.3 30.4h0M146.7 30.4h0M150.0 30.4h0M153.2 30.4h0M141.7 33.8h0M145.0 33.8h0M148.3 33.8h0M151.6 33.8h0M154.9 33.8h0M140.0 37.2h0M143.3 37.2h0M146.7 37.2h0M150.0 37.2h0M153.2 37.2h0M156.5 37.2h0M135.1 40.6h0M138.4 40.6h0M141.7 40.6h0M145.0 40.6h0M148.3 40.6h0M151.6 40.6h0M154.9 40.6h0M158.2 40.6h0M161.5 40.6h0M130.2 44.0h0M133.5 44.0h0M136.8 44.0h0M140.0 44.0h0M143.3 44.0h0M146.7 44.0h0M150.0 44.0h0M153.2 44.0h0M156.5 44.0h0M159.8 44.0h0M163.2 44.0h0M166.5 44.0h0M121.9 47.4h0M125.2 47.4h0M128.5 47.4h0M131.8 47.4h0M135.1 47.4h0M138.4 47.4h0M141.7 47.4h0M145.0 47.4h0M148.3 47.4h0M151.6 47.4h0M154.9 47.4h0M158.2 47.4h0M161.5 47.4h0M164.8 47.4h0M168.1 47.4h0M171.4 47.4h0M174.7 47.4h0M117.0 50.8h0M120.2 50.8h0M123.5 50.8h0M126.8 50.8h0M130.2 50.8h0M133.5 50.8h0M136.8 50.8h0M140.0 50.8h0M143.3 50.8h0M146.7 50.8h0M150.0 50.8h0M153.2 50.8h0M156.5 50.8h0M159.8 50.8h0M163.2 50.8h0M166.5 50.8h0M169.8 50.8h0M173.0 50.8h0M176.3 50.8h0M115.3 54.2h0M118.6 54.2h0M121.9 54.2h0M125.2 54.2h0M128.5 54.2h0M131.8 54.2h0M135.1 54.2h0M138.4 54.2h0M141.7 54.2h0M145.0 54.2h0M148.3 54.2h0M151.6 54.2h0M154.9 54.2h0M158.2 54.2h0M161.5 54.2h0M164.8 54.2h0M168.1 54.2h0M171.4 54.2h0M174.7 54.2h0M178.0 54.2h0M181.3 54.2h0M110.3 57.6h0M113.7 57.6h0M117.0 57.6h0M120.2 57.6h0M123.5 57.6h0M126.8 57.6h0M130.2 57.6h0M133.5 57.6h0M136.8 57.6h0M140.0 57.6h0M143.3 57.6h0M146.7 57.6h0M150.0 57.6h0M153.2 57.6h0M156.5 57.6h0M159.8 57.6h0M163.2 57.6h0M166.5 57.6h0M169.8 57.6h0M173.0 57.6h0M176.3 57.6h0M179.7 57.6h0M182.9 57.6h0M108.7 61.0h0M112.0 61.0h0M115.3 61.0h0M118.6 61.0h0M121.9 61.0h0M125.2 61.0h0M128.5 61.0h0M131.8 61.0h0M135.1 61.0h0M138.4 61.0h0M141.7 61.0h0M145.0 61.0h0M148.3 61.0h0M151.6 61.0h0M154.9 61.0h0M158.2 61.0h0M161.5 61.0h0M164.8 61.0h0M168.1 61.0h0M171.4 61.0h0M174.7 61.0h0M178.0 61.0h0M181.3 61.0h0M184.6 61.0h0M187.9 61.0h0M103.8 64.4h0M107.1 64.4h0M110.3 64.4h0M113.7 64.4h0M117.0 64.4h0M126.8 64.4h0M130.2 64.4h0M133.5 64.4h0M136.8 64.4h0M140.0 64.4h0M143.3 64.4h0M146.7 64.4h0M150.0 64.4h0M153.2 64.4h0M156.5 64.4h0M159.8 64.4h0M163.2 64.4h0M166.5 64.4h0M169.8 64.4h0M176.3 64.4h0M179.7 64.4h0M182.9 64.4h0M186.2 64.4h0M189.6 64.4h0M192.8 64.4h0M98.8 67.8h0M102.1 67.8h0M105.4 67.8h0M108.7 67.8h0M112.0 67.8h0M115.3 67.8h0M128.5 67.8h0M131.8 67.8h0M135.1 67.8h0M138.4 67.8h0M141.7 67.8h0M145.0 67.8h0M148.3 67.8h0M151.6 67.8h0M154.9 67.8h0M158.2 67.8h0M161.5 67.8h0M164.8 67.8h0M168.1 67.8h0M181.3 67.8h0M184.6 67.8h0M187.9 67.8h0M191.2 67.8h0M194.5 67.8h0M97.2 71.2h0M100.5 71.2h0M103.8 71.2h0M107.1 71.2h0M110.3 71.2h0M130.2 71.2h0M133.5 71.2h0M136.8 71.2h0M140.0 71.2h0M143.3 71.2h0M146.7 71.2h0M150.0 71.2h0M153.2 71.2h0M156.5 71.2h0M159.8 71.2h0M163.2 71.2h0M186.2 71.2h0M189.6 71.2h0M192.8 71.2h0M196.2 71.2h0M199.4 71.2h0M92.2 74.6h0M95.5 74.6h0M98.8 74.6h0M102.1 74.6h0M105.4 74.6h0M131.8 74.6h0M135.1 74.6h0M138.4 74.6h0M141.7 74.6h0M145.0 74.6h0M148.3 74.6h0M151.6 74.6h0M154.9 74.6h0M158.2 74.6h0M161.5 74.6h0M164.8 74.6h0M191.2 74.6h0M194.5 74.6h0M197.8 74.6h0M201.1 74.6h0M90.6 78.0h0M93.8 78.0h0M97.2 78.0h0M100.5 78.0h0M130.2 78.0h0M133.5 78.0h0M136.8 78.0h0M140.0 78.0h0M143.3 78.0h0M146.7 78.0h0M150.0 78.0h0M153.2 78.0h0M156.5 78.0h0M159.8 78.0h0M163.2 78.0h0M192.8 78.0h0M196.2 78.0h0M199.4 78.0h0M202.8 78.0h0M206.0 78.0h0M88.9 81.4h0M92.2 81.4h0M95.5 81.4h0M131.8 81.4h0M135.1 81.4h0M138.4 81.4h0M141.7 81.4h0M145.0 81.4h0M148.3 81.4h0M151.6 81.4h0M154.9 81.4h0M158.2 81.4h0M161.5 81.4h0M164.8 81.4h0M197.8 81.4h0M201.1 81.4h0M204.4 81.4h0M207.7 81.4h0M84.0 84.8h0M87.2 84.8h0M90.6 84.8h0M93.8 84.8h0M130.2 84.8h0M133.5 84.8h0M136.8 84.8h0M140.0 84.8h0M143.3 84.8h0M146.7 84.8h0M150.0 84.8h0M153.2 84.8h0M156.5 84.8h0M159.8 84.8h0M163.2 84.8h0M202.8 84.8h0M206.0 84.8h0M209.3 84.8h0M82.3 88.2h0M85.6 88.2h0M88.9 88.2h0M131.8 88.2h0M135.1 88.2h0M138.4 88.2h0M141.7 88.2h0M145.0 88.2h0M148.3 88.2h0M151.6 88.2h0M154.9 88.2h0M158.2 88.2h0M161.5 88.2h0M204.4 88.2h0M207.7 88.2h0M211.0 88.2h0M214.3 88.2h0M77.4 91.6h0M80.7 91.6h0M84.0 91.6h0M87.2 91.6h0M133.5 91.6h0M136.8 91.6h0M140.0 91.6h0M143.3 91.6h0M146.7 91.6h0M150.0 91.6h0M153.2 91.6h0M156.5 91.6h0M159.8 91.6h0M163.2 91.6h0M209.3 91.6h0M212.7 91.6h0M215.9 91.6h0M75.7 95.0h0M79.0 95.0h0M82.3 95.0h0M131.8 95.0h0M135.1 95.0h0M138.4 95.0h0M141.7 95.0h0M145.0 95.0h0M148.3 95.0h0M151.6 95.0h0M154.9 95.0h0M158.2 95.0h0M161.5 95.0h0M211.0 95.0h0M214.3 95.0h0M217.6 95.0h0M220.9 95.0h0M70.8 98.4h0M74.1 98.4h0M77.4 98.4h0M133.5 98.4h0M136.8 98.4h0M140.0 98.4h0M143.3 98.4h0M146.7 98.4h0M150.0 98.4h0M153.2 98.4h0M156.5 98.4h0M159.8 98.4h0M163.2 98.4h0M215.9 98.4h0M219.2 98.4h0M222.5 98.4h0M69.1 101.8h0M72.4 101.8h0M75.7 101.8h0M131.8 101.8h0M135.1 101.8h0M138.4 101.8h0M141.7 101.8h0M145.0 101.8h0M148.3 101.8h0M151.6 101.8h0M154.9 101.8h0M158.2 101.8h0M161.5 101.8h0M164.8 101.8h0M220.9 101.8h0M224.2 101.8h0M227.5 101.8h0M64.2 105.2h0M67.5 105.2h0M70.8 105.2h0M130.2 105.2h0M133.5 105.2h0M136.8 105.2h0M140.0 105.2h0M143.3 105.2h0M146.7 105.2h0M150.0 105.2h0M153.2 105.2h0M156.5 105.2h0M159.8 105.2h0M163.2 105.2h0M222.5 105.2h0M225.8 105.2h0M229.2 105.2h0M62.5 108.6h0M65.8 108.6h0M69.1 108.6h0M128.5 108.6h0M131.8 108.6h0M135.1 108.6h0M138.4 108.6h0M141.7 108.6h0M145.0 108.6h0M148.3 108.6h0M151.6 108.6h0M154.9 108.6h0M158.2 108.6h0M161.5 108.6h0M164.8 108.6h0M227.5 108.6h0M230.8 108.6h0M60.9 112.0h0M130.2 112.0h0M133.5 112.0h0M136.8 112.0h0M140.0 112.0h0M143.3 112.0h0M146.7 112.0h0M150.0 112.0h0M153.2 112.0h0M156.5 112.0h0M159.8 112.0h0M163.2 112.0h0M166.5 112.0h0M232.4 112.0h0M235.8 112.0h0M59.2 115.4h0M62.5 115.4h0M128.5 115.4h0M131.8 115.4h0M135.1 115.4h0M138.4 115.4h0M141.7 115.4h0M145.0 115.4h0M148.3 115.4h0M151.6 115.4h0M154.9 115.4h0M158.2 115.4h0M161.5 115.4h0M164.8 115.4h0M234.1 115.4h0M237.4 115.4h0M54.2 118.8h0M57.5 118.8h0M60.9 118.8h0M126.8 118.8h0M130.2 118.8h0M133.5 118.8h0M136.8 118.8h0M140.0 118.8h0M143.3 118.8h0M146.7 118.8h0M150.0 118.8h0M153.2 118.8h0M156.5 118.8h0M159.8 118.8h0M163.2 118.8h0M166.5 118.8h0M235.8 118.8h0M239.0 118.8h0M242.3 118.8h0M49.3 122.2h0M52.6 122.2h0M55.9 122.2h0M128.5 122.2h0M131.8 122.2h0M135.1 122.2h0M138.4 122.2h0M141.7 122.2h0M145.0 122.2h0M148.3 122.2h0M151.6 122.2h0M154.9 122.2h0M158.2 122.2h0M161.5 122.2h0M164.8 122.2h0M168.1 122.2h0M234.1 122.2h0M237.4 122.2h0M240.7 122.2h0M244.0 122.2h0M47.6 125.6h0M50.9 125.6h0M126.8 125.6h0M130.2 125.6h0M133.5 125.6h0M136.8 125.6h0M140.0 125.6h0M143.3 125.6h0M146.7 125.6h0M150.0 125.6h0M153.2 125.6h0M156.5 125.6h0M159.8 125.6h0M163.2 125.6h0M166.5 125.6h0M169.8 125.6h0M242.3 125.6h0M245.7 125.6h0M49.3 129.0h0M125.2 129.0h0M128.5 129.0h0M131.8 129.0h0M135.1 129.0h0M138.4 129.0h0M141.7 129.0h0M145.0 129.0h0M148.3 129.0h0M151.6 129.0h0M154.9 129.0h0M158.2 129.0h0M161.5 129.0h0M164.8 129.0h0M168.1 129.0h0M247.3 129.0h0M126.8 132.4h0M130.2 132.4h0M133.5 132.4h0M136.8 132.4h0M140.0 132.4h0M143.3 132.4h0M146.7 132.4h0M150.0 132.4h0M153.2 132.4h0M156.5 132.4h0M159.8 132.4h0M163.2 132.4h0M166.5 132.4h0M169.8 132.4h0M125.2 135.8h0M128.5 135.8h0M131.8 135.8h0M135.1 135.8h0M138.4 135.8h0M141.7 135.8h0M145.0 135.8h0M148.3 135.8h0M151.6 135.8h0M154.9 135.8h0M158.2 135.8h0M161.5 135.8h0M164.8 135.8h0M168.1 135.8h0M171.4 135.8h0M123.5 139.2h0M126.8 139.2h0M130.2 139.2h0M133.5 139.2h0M136.8 139.2h0M140.0 139.2h0M143.3 139.2h0M146.7 139.2h0M150.0 139.2h0M153.2 139.2h0M156.5 139.2h0M159.8 139.2h0M163.2 139.2h0M166.5 139.2h0M169.8 139.2h0" stroke="#fff" stroke-width="2.20" stroke-linecap="round" fill="none"/><path d="M122.8 141.0L127.2 141.0M127.2 141.0L131.8 141.0M131.8 141.0L136.2 141.0M136.2 141.0L140.8 141.0M140.8 141.0L145.2 141.0M145.2 141.0L149.8 141.0M149.8 141.0L154.2 141.0M154.2 141.0L158.8 141.0M158.8 141.0L163.2 141.0M163.2 141.0L167.8 141.0M167.8 141.0L172.2 141.0M122.8 141.0L123.2 146.5M122.8 141.0L127.7 146.5M127.2 141.0L127.7 146.5M127.2 141.0L132.1 146.5M131.8 141.0L132.1 146.5M131.8 141.0L136.5 146.5M136.2 141.0L136.5 146.5M136.2 141.0L141.0 146.5M140.8 141.0L141.0 146.5M140.8 141.0L145.4 146.5M145.2 141.0L145.4 146.5M145.2 141.0L149.8 146.5M149.8 141.0L149.8 146.5M149.8 141.0L154.3 146.5M154.2 141.0L154.3 146.5M154.2 141.0L158.7 146.5M158.8 141.0L158.7 146.5M158.8 141.0L163.1 146.5M163.2 141.0L163.1 146.5M163.2 141.0L167.6 146.5M167.8 141.0L167.6 146.5M167.8 141.0L172.0 146.5M172.2 141.0L172.0 146.5M123.2 146.5L127.7 146.5M127.7 146.5L132.1 146.5M132.1 146.5L136.5 146.5M136.5 146.5L141.0 146.5M141.0 146.5L145.4 146.5M145.4 146.5L149.8 146.5M149.8 146.5L154.3 146.5M154.3 146.5L158.7 146.5M158.7 146.5L163.1 146.5M163.1 146.5L167.6 146.5M167.6 146.5L172.0 146.5M123.2 146.5L123.5 152.0M123.2 146.5L127.9 152.0M127.7 146.5L127.9 152.0M127.7 146.5L132.3 152.0M132.1 146.5L132.3 152.0M132.1 146.5L136.7 152.0M136.5 146.5L136.7 152.0M136.5 146.5L141.1 152.0M141.0 146.5L141.1 152.0M141.0 146.5L145.5 152.0M145.4 146.5L145.5 152.0M145.4 146.5L150.0 152.0M149.8 146.5L150.0 152.0M149.8 146.5L154.4 152.0M154.3 146.5L154.4 152.0M154.3 146.5L158.8 152.0M158.7 146.5L158.8 152.0M158.7 146.5L163.2 152.0M163.1 146.5L163.2 152.0M163.1 146.5L167.6 152.0M167.6 146.5L167.6 152.0M167.6 146.5L172.0 152.0M172.0 146.5L172.0 152.0M123.5 152.0L127.9 152.0M127.9 152.0L132.3 152.0M132.3 152.0L136.7 152.0M136.7 152.0L141.1 152.0M141.1 152.0L145.5 152.0M145.5 152.0L150.0 152.0M150.0 152.0L154.4 152.0M154.4 152.0L158.8 152.0M158.8 152.0L163.2 152.0M163.2 152.0L167.6 152.0M167.6 152.0L172.0 152.0M123.5 152.0L124.2 159.0M123.5 152.0L128.9 159.0M127.9 152.0L128.9 159.0M127.9 152.0L133.6 159.0M132.3 152.0L133.6 159.0M132.3 152.0L138.3 159.0M136.7 152.0L138.3 159.0M136.7 152.0L142.9 159.0M141.1 152.0L142.9 159.0M141.1 152.0L147.6 159.0M145.5 152.0L147.6 159.0M145.5 152.0L152.3 159.0M150.0 152.0L147.6 159.0M150.0 152.0L152.3 159.0M154.4 152.0L152.3 159.0M154.4 152.0L157.0 159.0M158.8 152.0L157.0 159.0M158.8 152.0L161.7 159.0M163.2 152.0L161.7 159.0M163.2 152.0L166.3 159.0M167.6 152.0L166.3 159.0M167.6 152.0L171.0 159.0M172.0 152.0L171.0 159.0M124.2 159.0L128.9 159.0M128.9 159.0L133.6 159.0M133.6 159.0L138.3 159.0M138.3 159.0L142.9 159.0M142.9 159.0L147.6 159.0M147.6 159.0L152.3 159.0M152.3 159.0L157.0 159.0M157.0 159.0L161.7 159.0M161.7 159.0L166.3 159.0M166.3 159.0L171.0 159.0M124.2 159.0L125.2 166.0M124.2 159.0L129.7 166.0M128.9 159.0L125.2 166.0M128.9 159.0L129.7 166.0M133.6 159.0L129.7 166.0M133.6 159.0L134.2 166.0M138.3 159.0L134.2 166.0M138.3 159.0L138.6 166.0M142.9 159.0L134.2 166.0M142.9 159.0L138.6 166.0M147.6 159.0L134.2 166.0M147.6 159.0L138.6 166.0M152.3 159.0L138.6 166.0M152.3 159.0L143.1 166.0M157.0 159.0L143.1 166.0M157.0 159.0L147.5 166.0M161.7 159.0L143.1 166.0M161.7 159.0L147.5 166.0M166.3 159.0L143.1 166.0M166.3 159.0L147.5 166.0M171.0 159.0L147.5 166.0M124.2 159.0L148.5 166.0M124.2 159.0L152.8 166.0M128.9 159.0L148.5 166.0M128.9 159.0L152.8 166.0M133.6 159.0L152.8 166.0M133.6 159.0L157.2 166.0M138.3 159.0L157.2 166.0M138.3 159.0L161.6 166.0M142.9 159.0L157.2 166.0M142.9 159.0L161.6 166.0M147.6 159.0L157.2 166.0M147.6 159.0L161.6 166.0M152.3 159.0L161.6 166.0M152.3 159.0L165.9 166.0M157.0 159.0L165.9 166.0M157.0 159.0L170.2 166.0M161.7 159.0L165.9 166.0M161.7 159.0L170.2 166.0M166.3 159.0L165.9 166.0M166.3 159.0L170.2 166.0M171.0 159.0L170.2 166.0M125.2 166.0L129.7 166.0M129.7 166.0L134.2 166.0M134.2 166.0L138.6 166.0M138.6 166.0L143.1 166.0M143.1 166.0L147.5 166.0M148.5 166.0L152.8 166.0M152.8 166.0L157.2 166.0M157.2 166.0L161.6 166.0M161.6 166.0L165.9 166.0M165.9 166.0L170.2 166.0" stroke="#fff" stroke-width="0.55" stroke-opacity="0.65" fill="none"/><path d="M122.8 141.0h0M127.2 141.0h0M131.8 141.0h0M136.2 141.0h0M140.8 141.0h0M145.2 141.0h0M149.8 141.0h0M154.2 141.0h0M158.8 141.0h0M163.2 141.0h0M167.8 141.0h0M172.2 141.0h0M123.2 146.5h0M127.7 146.5h0M132.1 146.5h0M136.5 146.5h0M141.0 146.5h0M145.4 146.5h0M149.8 146.5h0M154.3 146.5h0M158.7 146.5h0M163.1 146.5h0M167.6 146.5h0M172.0 146.5h0M123.5 152.0h0M127.9 152.0h0M132.3 152.0h0M136.7 152.0h0M141.1 152.0h0M145.5 152.0h0M150.0 152.0h0M154.4 152.0h0M158.8 152.0h0M163.2 152.0h0M167.6 152.0h0M172.0 152.0h0M124.2 159.0h0M128.9 159.0h0M133.6 159.0h0M138.3 159.0h0M142.9 159.0h0M147.6 159.0h0M152.3 159.0h0M157.0 159.0h0M161.7 159.0h0M166.3 159.0h0M171.0 159.0h0M125.2 166.0h0M129.7 166.0h0M134.2 166.0h0M138.6 166.0h0M143.1 166.0h0M147.5 166.0h0M148.5 166.0h0M152.8 166.0h0M157.2 166.0h0M161.6 166.0h0M165.9 166.0h0M170.2 166.0h0" stroke="#fff" stroke-width="1.90" stroke-linecap="round" fill="none"/><path d="M128.8 169.8L132.4 169.8M128.8 169.8L127.0 174.0M128.8 169.8L130.6 174.0M132.4 169.8L136.0 169.8M132.4 169.8L130.6 174.0M132.4 169.8L134.2 174.0M136.0 169.8L139.6 169.8M136.0 169.8L134.2 174.0M136.0 169.8L137.8 174.0M139.6 169.8L143.2 169.8M139.6 169.8L137.8 174.0M139.6 169.8L141.4 174.0M143.2 169.8L141.4 174.0M150.4 169.8L154.0 169.8M150.4 169.8L152.2 174.0M154.0 169.8L157.6 169.8M154.0 169.8L152.2 174.0M154.0 169.8L155.8 174.0M157.6 169.8L161.2 169.8M157.6 169.8L155.8 174.0M157.6 169.8L159.4 174.0M161.2 169.8L164.8 169.8M161.2 169.8L159.4 174.0M161.2 169.8L163.0 174.0M164.8 169.8L168.4 169.8M164.8 169.8L163.0 174.0M164.8 169.8L166.6 174.0M168.4 169.8L166.6 174.0M127.0 174.0L130.6 174.0M127.0 174.0L128.8 178.2M130.6 174.0L134.2 174.0M130.6 174.0L128.8 178.2M130.6 174.0L132.4 178.2M134.2 174.0L137.8 174.0M134.2 174.0L132.4 178.2M134.2 174.0L136.0 178.2M137.8 174.0L141.4 174.0M137.8 174.0L136.0 178.2M137.8 174.0L139.6 178.2M141.4 174.0L139.6 178.2M141.4 174.0L143.2 178.2M152.2 174.0L155.8 174.0M152.2 174.0L154.0 178.2M155.8 174.0L159.4 174.0M155.8 174.0L154.0 178.2M155.8 174.0L157.6 178.2M159.4 174.0L163.0 174.0M159.4 174.0L157.6 178.2M159.4 174.0L161.2 178.2M163.0 174.0L166.6 174.0M163.0 174.0L161.2 178.2M163.0 174.0L164.8 178.2M166.6 174.0L164.8 178.2M166.6 174.0L168.4 178.2M128.8 178.2L132.4 178.2M128.8 178.2L127.0 182.4M128.8 178.2L130.6 182.4M132.4 178.2L136.0 178.2M132.4 178.2L130.6 182.4M132.4 178.2L134.2 182.4M136.0 178.2L139.6 178.2M136.0 178.2L134.2 182.4M136.0 178.2L137.8 182.4M139.6 178.2L143.2 178.2M139.6 178.2L137.8 182.4M139.6 178.2L141.4 182.4M143.2 178.2L141.4 182.4M154.0 178.2L157.6 178.2M154.0 178.2L152.2 182.4M154.0 178.2L155.8 182.4M157.6 178.2L161.2 178.2M157.6 178.2L155.8 182.4M157.6 178.2L159.4 182.4M161.2 178.2L164.8 178.2M161.2 178.2L159.4 182.4M161.2 178.2L163.0 182.4M164.8 178.2L168.4 178.2M164.8 178.2L163.0 182.4M164.8 178.2L166.6 182.4M168.4 178.2L166.6 182.4M127.0 182.4L130.6 182.4M127.0 182.4L128.8 186.6M130.6 182.4L134.2 182.4M130.6 182.4L128.8 186.6M130.6 182.4L132.4 186.6M134.2 182.4L137.8 182.4M134.2 182.4L132.4 186.6M134.2 182.4L136.0 186.6M137.8 182.4L141.4 182.4M137.8 182.4L136.0 186.6M137.8 182.4L139.6 186.6M141.4 182.4L139.6 186.6M152.2 182.4L155.8 182.4M152.2 182.4L154.0 186.6M155.8 182.4L159.4 182.4M155.8 182.4L154.0 186.6M155.8 182.4L157.6 186.6M159.4 182.4L163.0 182.4M159.4 182.4L157.6 186.6M159.4 182.4L161.2 186.6M163.0 182.4L166.6 182.4M163.0 182.4L161.2 186.6M163.0 182.4L164.8 186.6M166.6 182.4L164.8 186.6M166.6 182.4L168.4 186.6M128.8 186.6L132.4 186.6M128.8 186.6L127.0 190.8M128.8 186.6L130.6 190.8M132.4 186.6L136.0 186.6M132.4 186.6L130.6 190.8M132.4 186.6L134.2 190.8M136.0 186.6L139.6 186.6M136.0 186.6L134.2 190.8M136.0 186.6L137.8 190.8M139.6 186.6L137.8 190.8M139.6 186.6L141.4 190.8M154.0 186.6L157.6 186.6M154.0 186.6L152.2 190.8M154.0 186.6L155.8 190.8M157.6 186.6L161.2 186.6M157.6 186.6L155.8 190.8M157.6 186.6L159.4 190.8M161.2 186.6L164.8 186.6M161.2 186.6L159.4 190.8M161.2 186.6L163.0 190.8M164.8 186.6L168.4 186.6M164.8 186.6L163.0 190.8M164.8 186.6L166.6 190.8M168.4 186.6L166.6 190.8M127.0 190.8L130.6 190.8M127.0 190.8L128.8 195.0M130.6 190.8L134.2 190.8M130.6 190.8L128.8 195.0M130.6 190.8L132.4 195.0M134.2 190.8L137.8 190.8M134.2 190.8L132.4 195.0M134.2 190.8L136.0 195.0M137.8 190.8L141.4 190.8M137.8 190.8L136.0 195.0M137.8 190.8L139.6 195.0M141.4 190.8L139.6 195.0M152.2 190.8L155.8 190.8M152.2 190.8L154.0 195.0M155.8 190.8L159.4 190.8M155.8 190.8L154.0 195.0M155.8 190.8L157.6 195.0M159.4 190.8L163.0 190.8M159.4 190.8L157.6 195.0M159.4 190.8L161.2 195.0M163.0 190.8L166.6 190.8M163.0 190.8L161.2 195.0M163.0 190.8L164.8 195.0M166.6 190.8L164.8 195.0M166.6 190.8L168.4 195.0M128.8 195.0L132.4 195.0M128.8 195.0L127.0 199.2M128.8 195.0L130.6 199.2M132.4 195.0L136.0 195.0M132.4 195.0L130.6 199.2M132.4 195.0L134.2 199.2M136.0 195.0L139.6 195.0M136.0 195.0L134.2 199.2M136.0 195.0L137.8 199.2M139.6 195.0L137.8 199.2M139.6 195.0L141.4 199.2M154.0 195.0L157.6 195.0M154.0 195.0L152.2 199.2M154.0 195.0L155.8 199.2M157.6 195.0L161.2 195.0M157.6 195.0L155.8 199.2M157.6 195.0L159.4 199.2M161.2 195.0L164.8 195.0M161.2 195.0L159.4 199.2M161.2 195.0L163.0 199.2M164.8 195.0L168.4 195.0M164.8 195.0L163.0 199.2M164.8 195.0L166.6 199.2M168.4 195.0L166.6 199.2M127.0 199.2L130.6 199.2M127.0 199.2L128.8 203.4M130.6 199.2L134.2 199.2M130.6 199.2L128.8 203.4M130.6 199.2L132.4 203.4M134.2 199.2L137.8 199.2M134.2 199.2L132.4 203.4M134.2 199.2L136.0 203.4M137.8 199.2L141.4 199.2M137.8 199.2L136.0 203.4M137.8 199.2L139.6 203.4M141.4 199.2L139.6 203.4M152.2 199.2L155.8 199.2M152.2 199.2L154.0 203.4M155.8 199.2L159.4 199.2M155.8 199.2L154.0 203.4M155.8 199.2L157.6 203.4M159.4 199.2L163.0 199.2M159.4 199.2L157.6 203.4M159.4 199.2L161.2 203.4M163.0 199.2L166.6 199.2M163.0 199.2L161.2 203.4M163.0 199.2L164.8 203.4M166.6 199.2L164.8 203.4M166.6 199.2L168.4 203.4M128.8 203.4L132.4 203.4M128.8 203.4L127.0 207.6M128.8 203.4L130.6 207.6M132.4 203.4L136.0 203.4M132.4 203.4L130.6 207.6M132.4 203.4L134.2 207.6M136.0 203.4L139.6 203.4M136.0 203.4L134.2 207.6M136.0 203.4L137.8 207.6M139.6 203.4L137.8 207.6M139.6 203.4L141.4 207.6M154.0 203.4L157.6 203.4M154.0 203.4L152.2 207.6M154.0 203.4L155.8 207.6M157.6 203.4L161.2 203.4M157.6 203.4L155.8 207.6M157.6 203.4L159.4 207.6M161.2 203.4L164.8 203.4M161.2 203.4L159.4 207.6M161.2 203.4L163.0 207.6M164.8 203.4L168.4 203.4M164.8 203.4L163.0 207.6M164.8 203.4L166.6 207.6M168.4 203.4L166.6 207.6M127.0 207.6L130.6 207.6M130.6 207.6L134.2 207.6M134.2 207.6L137.8 207.6M137.8 207.6L141.4 207.6M152.2 207.6L155.8 207.6M155.8 207.6L159.4 207.6M159.4 207.6L163.0 207.6M163.0 207.6L166.6 207.6" stroke="#fff" stroke-width="0.50" stroke-opacity="0.60" fill="none"/><path d="M128.8 169.8h0M132.4 169.8h0M136.0 169.8h0M139.6 169.8h0M143.2 169.8h0M150.4 169.8h0M154.0 169.8h0M157.6 169.8h0M161.2 169.8h0M164.8 169.8h0M168.4 169.8h0M127.0 174.0h0M130.6 174.0h0M134.2 174.0h0M137.8 174.0h0M141.4 174.0h0M152.2 174.0h0M155.8 174.0h0M159.4 174.0h0M163.0 174.0h0M166.6 174.0h0M128.8 178.2h0M132.4 178.2h0M136.0 178.2h0M139.6 178.2h0M143.2 178.2h0M154.0 178.2h0M157.6 178.2h0M161.2 178.2h0M164.8 178.2h0M168.4 178.2h0M127.0 182.4h0M130.6 182.4h0M134.2 182.4h0M137.8 182.4h0M141.4 182.4h0M152.2 182.4h0M155.8 182.4h0M159.4 182.4h0M163.0 182.4h0M166.6 182.4h0M128.8 186.6h0M132.4 186.6h0M136.0 186.6h0M139.6 186.6h0M154.0 186.6h0M157.6 186.6h0M161.2 186.6h0M164.8 186.6h0M168.4 186.6h0M127.0 190.8h0M130.6 190.8h0M134.2 190.8h0M137.8 190.8h0M141.4 190.8h0M152.2 190.8h0M155.8 190.8h0M159.4 190.8h0M163.0 190.8h0M166.6 190.8h0M128.8 195.0h0M132.4 195.0h0M136.0 195.0h0M139.6 195.0h0M154.0 195.0h0M157.6 195.0h0M161.2 195.0h0M164.8 195.0h0M168.4 195.0h0M127.0 199.2h0M130.6 199.2h0M134.2 199.2h0M137.8 199.2h0M141.4 199.2h0M152.2 199.2h0M155.8 199.2h0M159.4 199.2h0M163.0 199.2h0M166.6 199.2h0M128.8 203.4h0M132.4 203.4h0M136.0 203.4h0M139.6 203.4h0M154.0 203.4h0M157.6 203.4h0M161.2 203.4h0M164.8 203.4h0M168.4 203.4h0M127.0 207.6h0M130.6 207.6h0M134.2 207.6h0M137.8 207.6h0M141.4 207.6h0M152.2 207.6h0M155.8 207.6h0M159.4 207.6h0M163.0 207.6h0M166.6 207.6h0" stroke="#fff" stroke-width="1.80" stroke-linecap="round" fill="none"/><path d="M126.5 206.0L129.7 206.0M129.7 206.0L132.9 206.0M132.9 206.0L136.1 206.0M136.1 206.0L139.3 206.0M139.3 206.0L142.5 206.0M126.5 206.0L126.5 214.0M126.5 206.0L129.7 214.0M129.7 206.0L129.7 214.0M129.7 206.0L132.9 214.0M132.9 206.0L132.9 214.0M132.9 206.0L136.1 214.0M136.1 206.0L136.1 214.0M136.1 206.0L139.3 214.0M139.3 206.0L139.3 214.0M139.3 206.0L142.5 214.0M142.5 206.0L142.5 214.0M152.0 206.0L155.4 206.0M155.4 206.0L158.8 206.0M158.8 206.0L162.2 206.0M162.2 206.0L165.6 206.0M165.6 206.0L169.0 206.0M152.0 206.0L152.0 214.0M152.0 206.0L155.4 214.0M155.4 206.0L155.4 214.0M155.4 206.0L158.8 214.0M158.8 206.0L158.8 214.0M158.8 206.0L162.2 214.0M162.2 206.0L162.2 214.0M162.2 206.0L165.6 214.0M165.6 206.0L165.6 214.0M165.6 206.0L169.0 214.0M169.0 206.0L169.0 214.0M126.5 214.0L129.7 214.0M129.7 214.0L132.9 214.0M132.9 214.0L136.1 214.0M136.1 214.0L139.3 214.0M139.3 214.0L142.5 214.0M126.5 214.0L127.5 220.0M126.5 214.0L130.4 220.0M129.7 214.0L130.4 220.0M129.7 214.0L133.3 220.0M132.9 214.0L133.3 220.0M132.9 214.0L136.2 220.0M136.1 214.0L136.2 220.0M136.1 214.0L139.1 220.0M139.3 214.0L139.1 220.0M139.3 214.0L142.0 220.0M142.5 214.0L142.0 220.0M152.0 214.0L155.4 214.0M155.4 214.0L158.8 214.0M158.8 214.0L162.2 214.0M162.2 214.0L165.6 214.0M165.6 214.0L169.0 214.0M152.0 214.0L153.2 220.0M152.0 214.0L156.2 220.0M155.4 214.0L156.2 220.0M155.4 214.0L159.2 220.0M158.8 214.0L159.2 220.0M158.8 214.0L162.1 220.0M162.2 214.0L162.1 220.0M162.2 214.0L165.1 220.0M165.6 214.0L165.1 220.0M165.6 214.0L168.0 220.0M169.0 214.0L168.0 220.0M127.5 220.0L130.4 220.0M130.4 220.0L133.3 220.0M133.3 220.0L136.2 220.0M136.2 220.0L139.1 220.0M139.1 220.0L142.0 220.0M127.5 220.0L128.5 227.0M127.5 220.0L131.8 227.0M130.4 220.0L131.8 227.0M130.4 220.0L135.1 227.0M133.3 220.0L135.1 227.0M133.3 220.0L138.4 227.0M136.2 220.0L135.1 227.0M136.2 220.0L138.4 227.0M139.1 220.0L138.4 227.0M139.1 220.0L141.8 227.0M142.0 220.0L141.8 227.0M153.2 220.0L156.2 220.0M156.2 220.0L159.2 220.0M159.2 220.0L162.1 220.0M162.1 220.0L165.1 220.0M165.1 220.0L168.0 220.0M153.2 220.0L154.5 227.0M153.2 220.0L157.6 227.0M156.2 220.0L157.6 227.0M156.2 220.0L160.8 227.0M159.2 220.0L160.8 227.0M159.2 220.0L163.9 227.0M162.1 220.0L160.8 227.0M162.1 220.0L163.9 227.0M165.1 220.0L163.9 227.0M165.1 220.0L167.0 227.0M168.0 220.0L167.0 227.0M128.5 227.0L131.8 227.0M131.8 227.0L135.1 227.0M135.1 227.0L138.4 227.0M138.4 227.0L141.8 227.0M128.5 227.0L129.2 233.0M128.5 227.0L132.2 233.0M131.8 227.0L132.2 233.0M131.8 227.0L135.1 233.0M135.1 227.0L135.1 233.0M135.1 227.0L138.1 233.0M138.4 227.0L138.1 233.0M138.4 227.0L141.0 233.0M141.8 227.0L141.0 233.0M154.5 227.0L157.6 227.0M157.6 227.0L160.8 227.0M160.8 227.0L163.9 227.0M163.9 227.0L167.0 227.0M154.5 227.0L154.8 233.0M154.5 227.0L157.6 233.0M157.6 227.0L157.6 233.0M157.6 227.0L160.5 233.0M160.8 227.0L160.5 233.0M160.8 227.0L163.4 233.0M163.9 227.0L163.4 233.0M163.9 227.0L166.2 233.0M167.0 227.0L166.2 233.0M129.2 233.0L132.2 233.0M132.2 233.0L135.1 233.0M135.1 233.0L138.1 233.0M138.1 233.0L141.0 233.0M129.2 233.0L130.0 238.5M129.2 233.0L133.4 238.5M132.2 233.0L133.4 238.5M132.2 233.0L136.8 238.5M135.1 233.0L136.8 238.5M135.1 233.0L140.2 238.5M138.1 233.0L136.8 238.5M138.1 233.0L140.2 238.5M141.0 233.0L140.2 238.5M154.8 233.0L157.6 233.0M157.6 233.0L160.5 233.0M160.5 233.0L163.4 233.0M163.4 233.0L166.2 233.0M154.8 233.0L155.0 238.5M154.8 233.0L158.5 238.5M157.6 233.0L158.5 238.5M157.6 233.0L162.0 238.5M160.5 233.0L162.0 238.5M160.5 233.0L165.5 238.5M163.4 233.0L162.0 238.5M163.4 233.0L165.5 238.5M166.2 233.0L165.5 238.5M130.0 238.5L133.4 238.5M133.4 238.5L136.8 238.5M136.8 238.5L140.2 238.5M155.0 238.5L158.5 238.5M158.5 238.5L162.0 238.5M162.0 238.5L165.5 238.5" stroke="#fff" stroke-width="0.50" stroke-opacity="0.60" fill="none"/><path d="M126.5 206.0h0M129.7 206.0h0M132.9 206.0h0M136.1 206.0h0M139.3 206.0h0M142.5 206.0h0M152.0 206.0h0M155.4 206.0h0M158.8 206.0h0M162.2 206.0h0M165.6 206.0h0M169.0 206.0h0M126.5 214.0h0M129.7 214.0h0M132.9 214.0h0M136.1 214.0h0M139.3 214.0h0M142.5 214.0h0M152.0 214.0h0M155.4 214.0h0M158.8 214.0h0M162.2 214.0h0M165.6 214.0h0M169.0 214.0h0M127.5 220.0h0M130.4 220.0h0M133.3 220.0h0M136.2 220.0h0M139.1 220.0h0M142.0 220.0h0M153.2 220.0h0M156.2 220.0h0M159.2 220.0h0M162.1 220.0h0M165.1 220.0h0M168.0 220.0h0M128.5 227.0h0M131.8 227.0h0M135.1 227.0h0M138.4 227.0h0M141.8 227.0h0M154.5 227.0h0M157.6 227.0h0M160.8 227.0h0M163.9 227.0h0M167.0 227.0h0M129.2 233.0h0M132.2 233.0h0M135.1 233.0h0M138.1 233.0h0M141.0 233.0h0M154.8 233.0h0M157.6 233.0h0M160.5 233.0h0M163.4 233.0h0M166.2 233.0h0M130.0 238.5h0M133.4 238.5h0M136.8 238.5h0M140.2 238.5h0M155.0 238.5h0M158.5 238.5h0M162.0 238.5h0M165.5 238.5h0" stroke="#fff" stroke-width="1.90" stroke-linecap="round" fill="none"/>
  <path d="M46,127 L57,115 L64,107.5 L69,111 L67.5,112 L63,122.5 L60.5,123 L58,120 L50,130.5 Z M249,127 L238,115 L231,107.5 L226,111 L227.5,112 L232,122.5 L234.5,123 L237,120 L245,130.5 Z" fill="#fff" stroke="#fff" stroke-width="0.8"/>
  <ellipse cx="148" cy="136" rx="6" ry="3.5" fill="#fff"/>
  <ellipse cx="147.3" cy="59.5" rx="4.5" ry="4" fill="#fff"/>
  <path d="M137,38.6 L147.2,55.6 L158.3,38.6 M141,37 L154,37 M139.5,30.5 L154.5,30.5" stroke="#fff" stroke-width="1.3" fill="none"/>
  <line x1="148" y1="136" x2="148" y2="265" stroke="#5aa6a6" stroke-width="2.5"/>
  <g opacity="0.12"><text x="200.5" y="258.5" font-family="Liberation Serif" font-weight="bold" font-size="35" letter-spacing="5.6" fill="#fff" stroke="#fff" stroke-width="1.3">Severinka</text></g>
</g>
<!-- TR -->
<g clip-path="url(#ctr)">
  <rect x="296" y="28" width="293" height="237" fill="#999"/>
  <g stroke="#7e7e7e" stroke-width="1"><line x1="301.5" y1="28" x2="301.5" y2="265"/><line x1="582.5" y1="28" x2="582.5" y2="265"/><line x1="296" y1="124.5" x2="589" y2="124.5"/></g>
  <path d="M431,28 L442.5,28 L447.7,36 L446.4,44 L458,62 L461,68 L458.7,80 L456.7,96 L456.7,103 L456,120 L454.8,129 L454.9,152 L454,166.6 L452.1,183.3 L450.3,194.4 L447.5,205.5 L445.7,214.7 L444.7,225.8 L440.1,239.6 L431.8,239.6 L430.9,225.8 L429,214.7 L430,205.5 L431.8,194.4 L434.6,183.3 L432.7,166.6 L430.9,152 L430.2,140.5 L425.7,132.7 L422.5,123.6 L423.1,117.2 L428.3,104.2 L430.2,96 L426.3,75 L425,59.6 L426.3,49.3 L429.6,36.3 Z" fill="#fff" fill-opacity="0.1" stroke="#fff" stroke-width="1" stroke-opacity="0.7"/>
  <path d="M431.5 32.0L435.1 32.0M431.5 32.0L429.7 36.0M431.5 32.0L433.3 36.0M435.1 32.0L438.7 32.0M435.1 32.0L433.3 36.0M435.1 32.0L436.9 36.0M438.7 32.0L442.3 32.0M438.7 32.0L436.9 36.0M438.7 32.0L440.5 36.0M442.3 32.0L440.5 36.0M442.3 32.0L444.1 36.0M429.7 36.0L433.3 36.0M429.7 36.0L431.5 40.0M433.3 36.0L436.9 36.0M433.3 36.0L431.5 40.0M433.3 36.0L435.1 40.0M436.9 36.0L440.5 36.0M436.9 36.0L435.1 40.0M436.9 36.0L438.7 40.0M440.5 36.0L444.1 36.0M440.5 36.0L438.7 40.0M440.5 36.0L442.3 40.0M444.1 36.0L447.7 36.0M444.1 36.0L442.3 40.0M444.1 36.0L445.9 40.0M447.7 36.0L445.9 40.0M431.5 40.0L435.1 40.0M431.5 40.0L429.7 44.0M431.5 40.0L433.3 44.0M435.1 40.0L438.7 40.0M435.1 40.0L433.3 44.0M435.1 40.0L436.9 44.0M438.7 40.0L442.3 40.0M438.7 40.0L436.9 44.0M438.7 40.0L440.5 44.0M442.3 40.0L445.9 40.0M442.3 40.0L440.5 44.0M442.3 40.0L444.1 44.0M445.9 40.0L444.1 44.0M429.7 44.0L433.3 44.0M429.7 44.0L427.9 48.0M429.7 44.0L431.5 48.0M433.3 44.0L436.9 44.0M433.3 44.0L431.5 48.0M433.3 44.0L435.1 48.0M436.9 44.0L440.5 44.0M436.9 44.0L435.1 48.0M436.9 44.0L438.7 48.0M440.5 44.0L444.1 44.0M440.5 44.0L438.7 48.0M440.5 44.0L442.3 48.0M444.1 44.0L442.3 48.0M444.1 44.0L445.9 48.0M427.9 48.0L431.5 48.0M427.9 48.0L426.1 52.0M427.9 48.0L429.7 52.0M431.5 48.0L435.1 48.0M431.5 48.0L429.7 52.0M431.5 48.0L433.3 52.0M435.1 48.0L438.7 48.0M435.1 48.0L433.3 52.0M435.1 48.0L436.9 52.0M438.7 48.0L442.3 48.0M438.7 48.0L436.9 52.0M438.7 48.0L440.5 52.0M442.3 48.0L445.9 48.0M442.3 48.0L440.5 52.0M442.3 48.0L444.1 52.0M445.9 48.0L444.1 52.0M445.9 48.0L447.7 52.0M426.1 52.0L429.7 52.0M426.1 52.0L427.9 56.0M429.7 52.0L433.3 52.0M429.7 52.0L427.9 56.0M429.7 52.0L431.5 56.0M433.3 52.0L436.9 52.0M433.3 52.0L431.5 56.0M433.3 52.0L435.1 56.0M436.9 52.0L440.5 52.0M436.9 52.0L435.1 56.0M436.9 52.0L438.7 56.0M440.5 52.0L444.1 52.0M440.5 52.0L438.7 56.0M440.5 52.0L442.3 56.0M444.1 52.0L447.7 52.0M444.1 52.0L442.3 56.0M444.1 52.0L445.9 56.0M447.7 52.0L451.3 52.0M447.7 52.0L445.9 56.0M447.7 52.0L449.5 56.0M451.3 52.0L449.5 56.0M451.3 52.0L453.1 56.0M427.9 56.0L431.5 56.0M427.9 56.0L426.1 60.0M427.9 56.0L429.7 60.0M431.5 56.0L435.1 56.0M431.5 56.0L429.7 60.0M431.5 56.0L433.3 60.0M435.1 56.0L438.7 56.0M435.1 56.0L433.3 60.0M435.1 56.0L436.9 60.0M438.7 56.0L442.3 56.0M438.7 56.0L436.9 60.0M438.7 56.0L440.5 60.0M442.3 56.0L445.9 56.0M442.3 56.0L440.5 60.0M442.3 56.0L444.1 60.0M445.9 56.0L449.5 56.0M445.9 56.0L444.1 60.0M445.9 56.0L447.7 60.0M449.5 56.0L453.1 56.0M449.5 56.0L447.7 60.0M449.5 56.0L451.3 60.0M453.1 56.0L451.3 60.0M453.1 56.0L454.9 60.0M426.1 60.0L429.7 60.0M426.1 60.0L427.9 64.0M429.7 60.0L433.3 60.0M429.7 60.0L427.9 64.0M429.7 60.0L431.5 64.0M433.3 60.0L436.9 60.0M433.3 60.0L431.5 64.0M433.3 60.0L435.1 64.0M436.9 60.0L440.5 60.0M436.9 60.0L435.1 64.0M436.9 60.0L438.7 64.0M440.5 60.0L444.1 60.0M440.5 60.0L438.7 64.0M440.5 60.0L442.3 64.0M444.1 60.0L447.7 60.0M444.1 60.0L442.3 64.0M444.1 60.0L445.9 64.0M447.7 60.0L451.3 60.0M447.7 60.0L445.9 64.0M447.7 60.0L449.5 64.0M451.3 60.0L454.9 60.0M451.3 60.0L449.5 64.0M451.3 60.0L453.1 64.0M454.9 60.0L453.1 64.0M454.9 60.0L456.7 64.0M427.9 64.0L431.5 64.0M427.9 64.0L426.1 68.0M427.9 64.0L429.7 68.0M431.5 64.0L435.1 64.0M431.5 64.0L429.7 68.0M431.5 64.0L433.3 68.0M435.1 64.0L438.7 64.0M435.1 64.0L433.3 68.0M435.1 64.0L436.9 68.0M438.7 64.0L442.3 64.0M438.7 64.0L436.9 68.0M438.7 64.0L440.5 68.0M442.3 64.0L445.9 64.0M442.3 64.0L440.5 68.0M442.3 64.0L444.1 68.0M445.9 64.0L449.5 64.0M445.9 64.0L444.1 68.0M445.9 64.0L447.7 68.0M449.5 64.0L453.1 64.0M449.5 64.0L447.7 68.0M449.5 64.0L451.3 68.0M453.1 64.0L456.7 64.0M453.1 64.0L451.3 68.0M453.1 64.0L454.9 68.0M456.7 64.0L454.9 68.0M456.7 64.0L458.5 68.0M426.1 68.0L429.7 68.0M426.1 68.0L427.9 72.0M429.7 68.0L433.3 68.0M429.7 68.0L427.9 72.0M429.7 68.0L431.5 72.0M433.3 68.0L436.9 68.0M433.3 68.0L431.5 72.0M433.3 68.0L435.1 72.0M436.9 68.0L440.5 68.0M436.9 68.0L435.1 72.0M436.9 68.0L438.7 72.0M440.5 68.0L444.1 68.0M440.5 68.0L438.7 72.0M440.5 68.0L442.3 72.0M444.1 68.0L447.7 68.0M444.1 68.0L442.3 72.0M444.1 68.0L445.9 72.0M447.7 68.0L451.3 68.0M447.7 68.0L445.9 72.0M447.7 68.0L449.5 72.0M451.3 68.0L454.9 68.0M451.3 68.0L449.5 72.0M451.3 68.0L453.1 72.0M454.9 68.0L458.5 68.0M454.9 68.0L453.1 72.0M454.9 68.0L456.7 72.0M458.5 68.0L456.7 72.0M427.9 72.0L431.5 72.0M427.9 72.0L429.7 76.0M431.5 72.0L435.1 72.0M431.5 72.0L429.7 76.0M431.5 72.0L433.3 76.0M435.1 72.0L438.7 72.0M435.1 72.0L433.3 76.0M435.1 72.0L436.9 76.0M438.7 72.0L442.3 72.0M438.7 72.0L436.9 76.0M438.7 72.0L440.5 76.0M442.3 72.0L445.9 72.0M442.3 72.0L440.5 76.0M442.3 72.0L444.1 76.0M445.9 72.0L449.5 72.0M445.9 72.0L444.1 76.0M445.9 72.0L447.7 76.0M449.5 72.0L453.1 72.0M449.5 72.0L447.7 76.0M449.5 72.0L451.3 76.0M453.1 72.0L456.7 72.0M453.1 72.0L451.3 76.0M453.1 72.0L454.9 76.0M456.7 72.0L454.9 76.0M456.7 72.0L458.5 76.0M429.7 76.0L433.3 76.0M429.7 76.0L427.9 80.0M429.7 76.0L431.5 80.0M433.3 76.0L436.9 76.0M433.3 76.0L431.5 80.0M433.3 76.0L435.1 80.0M436.9 76.0L440.5 76.0M436.9 76.0L435.1 80.0M436.9 76.0L438.7 80.0M440.5 76.0L444.1 76.0M440.5 76.0L438.7 80.0M440.5 76.0L442.3 80.0M444.1 76.0L447.7 76.0M444.1 76.0L442.3 80.0M444.1 76.0L445.9 80.0M447.7 76.0L451.3 76.0M447.7 76.0L445.9 80.0M447.7 76.0L449.5 80.0M451.3 76.0L454.9 76.0M451.3 76.0L449.5 80.0M451.3 76.0L453.1 80.0M454.9 76.0L458.5 76.0M454.9 76.0L453.1 80.0M454.9 76.0L456.7 80.0M458.5 76.0L456.7 80.0M427.9 80.0L431.5 80.0M427.9 80.0L429.7 84.0M431.5 80.0L435.1 80.0M431.5 80.0L429.7 84.0M431.5 80.0L433.3 84.0M435.1 80.0L438.7 80.0M435.1 80.0L433.3 84.0M435.1 80.0L436.9 84.0M438.7 80.0L442.3 80.0M438.7 80.0L436.9 84.0M438.7 80.0L440.5 84.0M442.3 80.0L445.9 80.0M442.3 80.0L440.5 84.0M442.3 80.0L444.1 84.0M445.9 80.0L449.5 80.0M445.9 80.0L444.1 84.0M445.9 80.0L447.7 84.0M449.5 80.0L453.1 80.0M449.5 80.0L447.7 84.0M449.5 80.0L451.3 84.0M453.1 80.0L456.7 80.0M453.1 80.0L451.3 84.0M453.1 80.0L454.9 84.0M456.7 80.0L454.9 84.0M429.7 84.0L433.3 84.0M429.7 84.0L431.5 88.0M433.3 84.0L436.9 84.0M433.3 84.0L431.5 88.0M433.3 84.0L435.1 88.0M436.9 84.0L440.5 84.0M436.9 84.0L435.1 88.0M436.9 84.0L438.7 88.0M440.5 84.0L444.1 84.0M440.5 84.0L438.7 88.0M440.5 84.0L442.3 88.0M444.1 84.0L447.7 84.0M444.1 84.0L442.3 88.0M444.1 84.0L445.9 88.0M447.7 84.0L451.3 84.0M447.7 84.0L445.9 88.0M447.7 84.0L449.5 88.0M451.3 84.0L454.9 84.0M451.3 84.0L449.5 88.0M451.3 84.0L453.1 88.0M454.9 84.0L453.1 88.0M454.9 84.0L456.7 88.0M431.5 88.0L435.1 88.0M431.5 88.0L429.7 92.0M431.5 88.0L433.3 92.0M435.1 88.0L438.7 88.0M435.1 88.0L433.3 92.0M435.1 88.0L436.9 92.0M438.7 88.0L442.3 88.0M438.7 88.0L436.9 92.0M438.7 88.0L440.5 92.0M442.3 88.0L445.9 88.0M442.3 88.0L440.5 92.0M442.3 88.0L444.1 92.0M445.9 88.0L449.5 88.0M445.9 88.0L444.1 92.0M445.9 88.0L447.7 92.0M449.5 88.0L453.1 88.0M449.5 88.0L447.7 92.0M449.5 88.0L451.3 92.0M453.1 88.0L456.7 88.0M453.1 88.0L451.3 92.0M453.1 88.0L454.9 92.0M456.7 88.0L454.9 92.0M429.7 92.0L433.3 92.0M429.7 92.0L431.5 96.0M433.3 92.0L436.9 92.0M433.3 92.0L431.5 96.0M433.3 92.0L435.1 96.0M436.9 92.0L440.5 92.0M436.9 92.0L435.1 96.0M436.9 92.0L438.7 96.0M440.5 92.0L444.1 92.0M440.5 92.0L438.7 96.0M440.5 92.0L442.3 96.0M444.1 92.0L447.7 92.0M444.1 92.0L442.3 96.0M444.1 92.0L445.9 96.0M447.7 92.0L451.3 92.0M447.7 92.0L445.9 96.0M447.7 92.0L449.5 96.0M451.3 92.0L454.9 92.0M451.3 92.0L449.5 96.0M451.3 92.0L453.1 96.0M454.9 92.0L453.1 96.0M454.9 92.0L456.7 96.0M431.5 96.0L435.1 96.0M431.5 96.0L429.7 100.0M431.5 96.0L433.3 100.0M435.1 96.0L438.7 96.0M435.1 96.0L433.3 100.0M435.1 96.0L436.9 100.0M438.7 96.0L442.3 96.0M438.7 96.0L436.9 100.0M438.7 96.0L440.5 100.0M442.3 96.0L445.9 96.0M442.3 96.0L440.5 100.0M442.3 96.0L444.1 100.0M445.9 96.0L449.5 96.0M445.9 96.0L444.1 100.0M445.9 96.0L447.7 100.0M449.5 96.0L453.1 96.0M449.5 96.0L447.7 100.0M449.5 96.0L451.3 100.0M453.1 96.0L456.7 96.0M453.1 96.0L451.3 100.0M453.1 96.0L454.9 100.0M456.7 96.0L454.9 100.0M429.7 100.0L433.3 100.0M429.7 100.0L431.5 104.0M433.3 100.0L436.9 100.0M433.3 100.0L431.5 104.0M433.3 100.0L435.1 104.0M436.9 100.0L440.5 100.0M436.9 100.0L435.1 104.0M436.9 100.0L438.7 104.0M440.5 100.0L444.1 100.0M440.5 100.0L438.7 104.0M440.5 100.0L442.3 104.0M444.1 100.0L447.7 100.0M444.1 100.0L442.3 104.0M444.1 100.0L445.9 104.0M447.7 100.0L451.3 100.0M447.7 100.0L445.9 104.0M447.7 100.0L449.5 104.0M451.3 100.0L454.9 100.0M451.3 100.0L449.5 104.0M451.3 100.0L453.1 104.0M454.9 100.0L453.1 104.0M431.5 104.0L435.1 104.0M431.5 104.0L429.7 108.0M431.5 104.0L433.3 108.0M435.1 104.0L438.7 104.0M435.1 104.0L433.3 108.0M435.1 104.0L436.9 108.0M438.7 104.0L442.3 104.0M438.7 104.0L436.9 108.0M438.7 104.0L440.5 108.0M442.3 104.0L445.9 104.0M442.3 104.0L440.5 108.0M442.3 104.0L444.1 108.0M445.9 104.0L449.5 104.0M445.9 104.0L444.1 108.0M445.9 104.0L447.7 108.0M449.5 104.0L453.1 104.0M449.5 104.0L447.7 108.0M449.5 104.0L451.3 108.0M453.1 104.0L451.3 108.0M453.1 104.0L454.9 108.0M429.7 108.0L433.3 108.0M429.7 108.0L427.9 112.0M429.7 108.0L431.5 112.0M433.3 108.0L436.9 108.0M433.3 108.0L431.5 112.0M433.3 108.0L435.1 112.0M436.9 108.0L440.5 108.0M436.9 108.0L435.1 112.0M436.9 108.0L438.7 112.0M440.5 108.0L444.1 108.0M440.5 108.0L438.7 112.0M440.5 108.0L442.3 112.0M444.1 108.0L447.7 108.0M444.1 108.0L442.3 112.0M444.1 108.0L445.9 112.0M447.7 108.0L451.3 108.0M447.7 108.0L445.9 112.0M447.7 108.0L449.5 112.0M451.3 108.0L454.9 108.0M451.3 108.0L449.5 112.0M451.3 108.0L453.1 112.0M454.9 108.0L453.1 112.0M427.9 112.0L431.5 112.0M427.9 112.0L426.1 116.0M427.9 112.0L429.7 116.0M431.5 112.0L435.1 112.0M431.5 112.0L429.7 116.0M431.5 112.0L433.3 116.0M435.1 112.0L438.7 112.0M435.1 112.0L433.3 116.0M435.1 112.0L436.9 116.0M438.7 112.0L442.3 112.0M438.7 112.0L436.9 116.0M438.7 112.0L440.5 116.0M442.3 112.0L445.9 112.0M442.3 112.0L440.5 116.0M442.3 112.0L444.1 116.0M445.9 112.0L449.5 112.0M445.9 112.0L444.1 116.0M445.9 112.0L447.7 116.0M449.5 112.0L453.1 112.0M449.5 112.0L447.7 116.0M449.5 112.0L451.3 116.0M453.1 112.0L451.3 116.0M453.1 112.0L454.9 116.0M426.1 116.0L429.7 116.0M426.1 116.0L424.3 120.0M426.1 116.0L427.9 120.0M429.7 116.0L433.3 116.0M429.7 116.0L427.9 120.0M429.7 116.0L431.5 120.0M433.3 116.0L436.9 116.0M433.3 116.0L431.5 120.0M433.3 116.0L435.1 120.0M436.9 116.0L440.5 116.0M436.9 116.0L435.1 120.0M436.9 116.0L438.7 120.0M440.5 116.0L444.1 116.0M440.5 116.0L438.7 120.0M440.5 116.0L442.3 120.0M444.1 116.0L447.7 116.0M444.1 116.0L442.3 120.0M444.1 116.0L445.9 120.0M447.7 116.0L451.3 116.0M447.7 116.0L445.9 120.0M447.7 116.0L449.5 120.0M451.3 116.0L454.9 116.0M451.3 116.0L449.5 120.0M451.3 116.0L453.1 120.0M454.9 116.0L453.1 120.0M424.3 120.0L427.9 120.0M424.3 120.0L426.1 124.0M427.9 120.0L431.5 120.0M427.9 120.0L426.1 124.0M427.9 120.0L429.7 124.0M431.5 120.0L435.1 120.0M431.5 120.0L429.7 124.0M431.5 120.0L433.3 124.0M435.1 120.0L438.7 120.0M435.1 120.0L433.3 124.0M435.1 120.0L436.9 124.0M438.7 120.0L442.3 120.0M438.7 120.0L436.9 124.0M438.7 120.0L440.5 124.0M442.3 120.0L445.9 120.0M442.3 120.0L440.5 124.0M442.3 120.0L444.1 124.0M445.9 120.0L449.5 120.0M445.9 120.0L444.1 124.0M445.9 120.0L447.7 124.0M449.5 120.0L453.1 120.0M449.5 120.0L447.7 124.0M449.5 120.0L451.3 124.0M453.1 120.0L451.3 124.0M453.1 120.0L454.9 124.0M426.1 124.0L429.7 124.0M426.1 124.0L424.3 128.0M426.1 124.0L427.9 128.0M429.7 124.0L433.3 124.0M429.7 124.0L427.9 128.0M429.7 124.0L431.5 128.0M433.3 124.0L436.9 124.0M433.3 124.0L431.5 128.0M433.3 124.0L435.1 128.0M436.9 124.0L440.5 124.0M436.9 124.0L435.1 128.0M436.9 124.0L438.7 128.0M440.5 124.0L444.1 124.0M440.5 124.0L438.7 128.0M440.5 124.0L442.3 128.0M444.1 124.0L447.7 124.0M444.1 124.0L442.3 128.0M444.1 124.0L445.9 128.0M447.7 124.0L451.3 124.0M447.7 124.0L445.9 128.0M447.7 124.0L449.5 128.0M451.3 124.0L454.9 124.0M451.3 124.0L449.5 128.0M451.3 124.0L453.1 128.0M454.9 124.0L453.1 128.0M424.3 128.0L427.9 128.0M424.3 128.0L426.1 132.0M427.9 128.0L431.5 128.0M427.9 128.0L426.1 132.0M427.9 128.0L429.7 132.0M431.5 128.0L435.1 128.0M431.5 128.0L429.7 132.0M431.5 128.0L433.3 132.0M435.1 128.0L438.7 128.0M435.1 128.0L433.3 132.0M435.1 128.0L436.9 132.0M438.7 128.0L442.3 128.0M438.7 128.0L436.9 132.0M438.7 128.0L440.5 132.0M442.3 128.0L445.9 128.0M442.3 128.0L440.5 132.0M442.3 128.0L444.1 132.0M445.9 128.0L449.5 128.0M445.9 128.0L444.1 132.0M445.9 128.0L447.7 132.0M449.5 128.0L453.1 128.0M449.5 128.0L447.7 132.0M449.5 128.0L451.3 132.0M453.1 128.0L451.3 132.0M426.1 132.0L429.7 132.0M426.1 132.0L427.9 136.0M429.7 132.0L433.3 132.0M429.7 132.0L427.9 136.0M429.7 132.0L431.5 136.0M433.3 132.0L436.9 132.0M433.3 132.0L431.5 136.0M433.3 132.0L435.1 136.0M436.9 132.0L440.5 132.0M436.9 132.0L435.1 136.0M436.9 132.0L438.7 136.0M440.5 132.0L444.1 132.0M440.5 132.0L438.7 136.0M440.5 132.0L442.3 136.0M444.1 132.0L447.7 132.0M444.1 132.0L442.3 136.0M444.1 132.0L445.9 136.0M447.7 132.0L451.3 132.0M447.7 132.0L445.9 136.0M447.7 132.0L449.5 136.0M451.3 132.0L449.5 136.0M451.3 132.0L453.1 136.0M427.9 136.0L431.5 136.0M431.5 136.0L435.1 136.0M431.5 136.0L433.3 140.0M435.1 136.0L438.7 136.0M435.1 136.0L433.3 140.0M435.1 136.0L436.9 140.0M438.7 136.0L442.3 136.0M438.7 136.0L436.9 140.0M438.7 136.0L440.5 140.0M442.3 136.0L445.9 136.0M442.3 136.0L440.5 140.0M442.3 136.0L444.1 140.0M445.9 136.0L449.5 136.0M445.9 136.0L444.1 140.0M445.9 136.0L447.7 140.0M449.5 136.0L453.1 136.0M449.5 136.0L447.7 140.0M449.5 136.0L451.3 140.0M453.1 136.0L451.3 140.0M433.3 140.0L436.9 140.0M433.3 140.0L431.5 144.0M433.3 140.0L435.1 144.0M436.9 140.0L440.5 140.0M436.9 140.0L435.1 144.0M436.9 140.0L438.7 144.0M440.5 140.0L444.1 140.0M440.5 140.0L438.7 144.0M440.5 140.0L442.3 144.0M444.1 140.0L447.7 140.0M444.1 140.0L442.3 144.0M444.1 140.0L445.9 144.0M447.7 140.0L451.3 140.0M447.7 140.0L445.9 144.0M447.7 140.0L449.5 144.0M451.3 140.0L449.5 144.0M451.3 140.0L453.1 144.0M431.5 144.0L435.1 144.0M431.5 144.0L433.3 148.0M435.1 144.0L438.7 144.0M435.1 144.0L433.3 148.0M435.1 144.0L436.9 148.0M438.7 144.0L442.3 144.0M438.7 144.0L436.9 148.0M438.7 144.0L440.5 148.0M442.3 144.0L445.9 144.0M442.3 144.0L440.5 148.0M442.3 144.0L444.1 148.0M445.9 144.0L449.5 144.0M445.9 144.0L444.1 148.0M445.9 144.0L447.7 148.0M449.5 144.0L453.1 144.0M449.5 144.0L447.7 148.0M449.5 144.0L451.3 148.0M453.1 144.0L451.3 148.0M433.3 148.0L436.9 148.0M436.9 148.0L440.5 148.0M440.5 148.0L444.1 148.0M444.1 148.0L447.7 148.0M447.7 148.0L451.3 148.0" stroke="#fff" stroke-width="0.60" stroke-opacity="0.70" fill="none"/><path d="M431.5 32.0h0M435.1 32.0h0M438.7 32.0h0M442.3 32.0h0M429.7 36.0h0M433.3 36.0h0M436.9 36.0h0M440.5 36.0h0M444.1 36.0h0M447.7 36.0h0M431.5 40.0h0M435.1 40.0h0M438.7 40.0h0M442.3 40.0h0M445.9 40.0h0M429.7 44.0h0M433.3 44.0h0M436.9 44.0h0M440.5 44.0h0M444.1 44.0h0M427.9 48.0h0M431.5 48.0h0M435.1 48.0h0M438.7 48.0h0M442.3 48.0h0M445.9 48.0h0M426.1 52.0h0M429.7 52.0h0M433.3 52.0h0M436.9 52.0h0M440.5 52.0h0M444.1 52.0h0M447.7 52.0h0M451.3 52.0h0M427.9 56.0h0M431.5 56.0h0M435.1 56.0h0M438.7 56.0h0M442.3 56.0h0M445.9 56.0h0M449.5 56.0h0M453.1 56.0h0M426.1 60.0h0M429.7 60.0h0M433.3 60.0h0M436.9 60.0h0M440.5 60.0h0M444.1 60.0h0M447.7 60.0h0M451.3 60.0h0M454.9 60.0h0M427.9 64.0h0M431.5 64.0h0M435.1 64.0h0M438.7 64.0h0M442.3 64.0h0M445.9 64.0h0M449.5 64.0h0M453.1 64.0h0M456.7 64.0h0M426.1 68.0h0M429.7 68.0h0M433.3 68.0h0M436.9 68.0h0M440.5 68.0h0M444.1 68.0h0M447.7 68.0h0M451.3 68.0h0M454.9 68.0h0M458.5 68.0h0M427.9 72.0h0M431.5 72.0h0M435.1 72.0h0M438.7 72.0h0M442.3 72.0h0M445.9 72.0h0M449.5 72.0h0M453.1 72.0h0M456.7 72.0h0M429.7 76.0h0M433.3 76.0h0M436.9 76.0h0M440.5 76.0h0M444.1 76.0h0M447.7 76.0h0M451.3 76.0h0M454.9 76.0h0M458.5 76.0h0M427.9 80.0h0M431.5 80.0h0M435.1 80.0h0M438.7 80.0h0M442.3 80.0h0M445.9 80.0h0M449.5 80.0h0M453.1 80.0h0M456.7 80.0h0M429.7 84.0h0M433.3 84.0h0M436.9 84.0h0M440.5 84.0h0M444.1 84.0h0M447.7 84.0h0M451.3 84.0h0M454.9 84.0h0M431.5 88.0h0M435.1 88.0h0M438.7 88.0h0M442.3 88.0h0M445.9 88.0h0M449.5 88.0h0M453.1 88.0h0M456.7 88.0h0M429.7 92.0h0M433.3 92.0h0M436.9 92.0h0M440.5 92.0h0M444.1 92.0h0M447.7 92.0h0M451.3 92.0h0M454.9 92.0h0M431.5 96.0h0M435.1 96.0h0M438.7 96.0h0M442.3 96.0h0M445.9 96.0h0M449.5 96.0h0M453.1 96.0h0M456.7 96.0h0M429.7 100.0h0M433.3 100.0h0M436.9 100.0h0M440.5 100.0h0M444.1 100.0h0M447.7 100.0h0M451.3 100.0h0M454.9 100.0h0M431.5 104.0h0M435.1 104.0h0M438.7 104.0h0M442.3 104.0h0M445.9 104.0h0M449.5 104.0h0M453.1 104.0h0M429.7 108.0h0M433.3 108.0h0M436.9 108.0h0M440.5 108.0h0M444.1 108.0h0M447.7 108.0h0M451.3 108.0h0M454.9 108.0h0M427.9 112.0h0M431.5 112.0h0M435.1 112.0h0M438.7 112.0h0M442.3 112.0h0M445.9 112.0h0M449.5 112.0h0M453.1 112.0h0M426.1 116.0h0M429.7 116.0h0M433.3 116.0h0M436.9 116.0h0M440.5 116.0h0M444.1 116.0h0M447.7 116.0h0M451.3 116.0h0M454.9 116.0h0M424.3 120.0h0M427.9 120.0h0M431.5 120.0h0M435.1 120.0h0M438.7 120.0h0M442.3 120.0h0M445.9 120.0h0M449.5 120.0h0M453.1 120.0h0M426.1 124.0h0M429.7 124.0h0M433.3 124.0h0M436.9 124.0h0M440.5 124.0h0M444.1 124.0h0M447.7 124.0h0M451.3 124.0h0M454.9 124.0h0M424.3 128.0h0M427.9 128.0h0M431.5 128.0h0M435.1 128.0h0M438.7 128.0h0M442.3 128.0h0M445.9 128.0h0M449.5 128.0h0M453.1 128.0h0M426.1 132.0h0M429.7 132.0h0M433.3 132.0h0M436.9 132.0h0M440.5 132.0h0M444.1 132.0h0M447.7 132.0h0M451.3 132.0h0M427.9 136.0h0M431.5 136.0h0M435.1 136.0h0M438.7 136.0h0M442.3 136.0h0M445.9 136.0h0M449.5 136.0h0M453.1 136.0h0M433.3 140.0h0M436.9 140.0h0M440.5 140.0h0M444.1 140.0h0M447.7 140.0h0M451.3 140.0h0M431.5 144.0h0M435.1 144.0h0M438.7 144.0h0M442.3 144.0h0M445.9 144.0h0M449.5 144.0h0M453.1 144.0h0M433.3 148.0h0M436.9 148.0h0M440.5 148.0h0M444.1 148.0h0M447.7 148.0h0M451.3 148.0h0" stroke="#fff" stroke-width="1.90" stroke-linecap="round" fill="none"/><path d="M431.0 152.0L434.4 152.0M434.4 152.0L437.8 152.0M437.8 152.0L441.2 152.0M441.2 152.0L444.6 152.0M444.6 152.0L448.0 152.0M448.0 152.0L451.4 152.0M451.4 152.0L454.8 152.0M431.0 152.0L432.8 166.6M431.0 152.0L436.3 166.6M434.4 152.0L436.3 166.6M434.4 152.0L439.8 166.6M437.8 152.0L439.8 166.6M437.8 152.0L443.4 166.6M441.2 152.0L443.4 166.6M441.2 152.0L446.9 166.6M444.6 152.0L443.4 166.6M444.6 152.0L446.9 166.6M448.0 152.0L446.9 166.6M448.0 152.0L450.5 166.6M451.4 152.0L450.5 166.6M451.4 152.0L454.0 166.6M454.8 152.0L454.0 166.6M432.8 166.6L436.3 166.6M436.3 166.6L439.8 166.6M439.8 166.6L443.4 166.6M443.4 166.6L446.9 166.6M446.9 166.6L450.5 166.6M450.5 166.6L454.0 166.6M432.8 166.6L433.8 175.0M432.8 166.6L437.0 175.0M436.3 166.6L437.0 175.0M436.3 166.6L440.2 175.0M439.8 166.6L440.2 175.0M439.8 166.6L443.4 175.0M443.4 166.6L443.4 175.0M443.4 166.6L446.6 175.0M446.9 166.6L446.6 175.0M446.9 166.6L449.8 175.0M450.5 166.6L449.8 175.0M450.5 166.6L453.0 175.0M454.0 166.6L453.0 175.0M433.8 175.0L437.0 175.0M437.0 175.0L440.2 175.0M440.2 175.0L443.4 175.0M443.4 175.0L446.6 175.0M446.6 175.0L449.8 175.0M449.8 175.0L453.0 175.0M433.8 175.0L434.8 183.3M433.8 175.0L438.2 183.3M437.0 175.0L438.2 183.3M437.0 175.0L441.6 183.3M440.2 175.0L441.6 183.3M440.2 175.0L445.1 183.3M443.4 175.0L441.6 183.3M443.4 175.0L445.1 183.3M446.6 175.0L445.1 183.3M446.6 175.0L448.6 183.3M449.8 175.0L448.6 183.3M449.8 175.0L452.0 183.3M453.0 175.0L452.0 183.3M434.8 183.3L438.2 183.3M438.2 183.3L441.6 183.3M441.6 183.3L445.1 183.3M445.1 183.3L448.6 183.3M448.6 183.3L452.0 183.3M434.8 183.3L433.2 189.0M434.8 183.3L436.8 189.0M438.2 183.3L436.8 189.0M438.2 183.3L440.4 189.0M441.6 183.3L440.4 189.0M441.6 183.3L443.9 189.0M445.1 183.3L443.9 189.0M445.1 183.3L447.4 189.0M448.6 183.3L447.4 189.0M448.6 183.3L451.0 189.0M452.0 183.3L451.0 189.0M433.2 189.0L436.8 189.0M436.8 189.0L440.4 189.0M440.4 189.0L443.9 189.0M443.9 189.0L447.4 189.0M447.4 189.0L451.0 189.0M433.2 189.0L432.0 194.4M433.2 189.0L435.6 194.4M436.8 189.0L435.6 194.4M436.8 189.0L439.3 194.4M440.4 189.0L439.3 194.4M440.4 189.0L442.9 194.4M443.9 189.0L442.9 194.4M443.9 189.0L446.6 194.4M447.4 189.0L446.6 194.4M447.4 189.0L450.2 194.4M451.0 189.0L450.2 194.4M432.0 194.4L435.6 194.4M435.6 194.4L439.3 194.4M439.3 194.4L442.9 194.4M442.9 194.4L446.6 194.4M446.6 194.4L450.2 194.4M432.0 194.4L431.0 200.0M432.0 194.4L434.6 200.0M435.6 194.4L434.6 200.0M435.6 194.4L438.1 200.0M439.3 194.4L438.1 200.0M439.3 194.4L441.6 200.0M442.9 194.4L441.6 200.0M442.9 194.4L445.2 200.0M446.6 194.4L445.2 200.0M446.6 194.4L448.8 200.0M450.2 194.4L448.8 200.0M431.0 200.0L434.6 200.0M434.6 200.0L438.1 200.0M438.1 200.0L441.6 200.0M441.6 200.0L445.2 200.0M445.2 200.0L448.8 200.0M431.0 200.0L430.0 205.5M431.0 200.0L433.5 205.5M434.6 200.0L433.5 205.5M434.6 200.0L437.0 205.5M438.1 200.0L437.0 205.5M438.1 200.0L440.5 205.5M441.6 200.0L440.5 205.5M441.6 200.0L444.0 205.5M445.2 200.0L444.0 205.5M445.2 200.0L447.5 205.5M448.8 200.0L447.5 205.5M430.0 205.5L433.5 205.5M433.5 205.5L437.0 205.5M437.0 205.5L440.5 205.5M440.5 205.5L444.0 205.5M444.0 205.5L447.5 205.5M430.0 205.5L429.0 214.7M430.0 205.5L432.3 214.7M433.5 205.5L432.3 214.7M433.5 205.5L435.6 214.7M437.0 205.5L435.6 214.7M437.0 205.5L438.9 214.7M440.5 205.5L438.9 214.7M440.5 205.5L442.2 214.7M444.0 205.5L442.2 214.7M444.0 205.5L445.5 214.7M447.5 205.5L445.5 214.7M429.0 214.7L432.3 214.7M432.3 214.7L435.6 214.7M435.6 214.7L438.9 214.7M438.9 214.7L442.2 214.7M442.2 214.7L445.5 214.7M429.0 214.7L431.0 225.8M429.0 214.7L434.4 225.8M432.3 214.7L434.4 225.8M432.3 214.7L437.8 225.8M435.6 214.7L437.8 225.8M435.6 214.7L441.1 225.8M438.9 214.7L437.8 225.8M438.9 214.7L441.1 225.8M442.2 214.7L441.1 225.8M442.2 214.7L444.5 225.8M445.5 214.7L444.5 225.8M431.0 225.8L434.4 225.8M434.4 225.8L437.8 225.8M437.8 225.8L441.1 225.8M441.1 225.8L444.5 225.8M431.0 225.8L431.8 238.5M431.0 225.8L436.0 238.5M434.4 225.8L431.8 238.5M434.4 225.8L436.0 238.5M437.8 225.8L436.0 238.5M437.8 225.8L440.2 238.5M441.1 225.8L440.2 238.5M444.5 225.8L440.2 238.5M431.8 238.5L436.0 238.5M436.0 238.5L440.2 238.5" stroke="#fff" stroke-width="0.50" stroke-opacity="0.55" fill="none"/><path d="M431.0 152.0h0M434.4 152.0h0M437.8 152.0h0M441.2 152.0h0M444.6 152.0h0M448.0 152.0h0M451.4 152.0h0M454.8 152.0h0M432.8 166.6h0M436.3 166.6h0M439.8 166.6h0M443.4 166.6h0M446.9 166.6h0M450.5 166.6h0M454.0 166.6h0M433.8 175.0h0M437.0 175.0h0M440.2 175.0h0M443.4 175.0h0M446.6 175.0h0M449.8 175.0h0M453.0 175.0h0M434.8 183.3h0M438.2 183.3h0M441.6 183.3h0M445.1 183.3h0M448.6 183.3h0M452.0 183.3h0M433.2 189.0h0M436.8 189.0h0M440.4 189.0h0M443.9 189.0h0M447.4 189.0h0M451.0 189.0h0M432.0 194.4h0M435.6 194.4h0M439.3 194.4h0M442.9 194.4h0M446.6 194.4h0M450.2 194.4h0M431.0 200.0h0M434.6 200.0h0M438.1 200.0h0M441.6 200.0h0M445.2 200.0h0M448.8 200.0h0M430.0 205.5h0M433.5 205.5h0M437.0 205.5h0M440.5 205.5h0M444.0 205.5h0M447.5 205.5h0M429.0 214.7h0M432.3 214.7h0M435.6 214.7h0M438.9 214.7h0M442.2 214.7h0M445.5 214.7h0M431.0 225.8h0M434.4 225.8h0M437.8 225.8h0M441.1 225.8h0M444.5 225.8h0M431.8 238.5h0M436.0 238.5h0M440.2 238.5h0" stroke="#fff" stroke-width="1.90" stroke-linecap="round" fill="none"/>
  <path d="M441.2,28 V40 M441.2,127 V265" stroke="#5aa6a6" stroke-width="2"/>
  <path d="M431,28 L442.5,28 L447.7,36 L446.4,44 L448,60 L449,90 L450,114 L449,129 L434,129 L432,114 L430.2,96 L426.3,75 L425,59.6 L426.3,49.3 L429.6,36.3 Z" fill="#fff" fill-opacity="0.6"/>
  <path d="M432.5 31.0L435.5 31.0M432.5 31.0L431.0 34.0M432.5 31.0L434.0 34.0M435.5 31.0L438.5 31.0M435.5 31.0L434.0 34.0M435.5 31.0L437.0 34.0M438.5 31.0L441.5 31.0M438.5 31.0L437.0 34.0M438.5 31.0L440.0 34.0M441.5 31.0L440.0 34.0M441.5 31.0L443.0 34.0M431.0 34.0L434.0 34.0M431.0 34.0L429.5 37.0M431.0 34.0L432.5 37.0M434.0 34.0L437.0 34.0M434.0 34.0L432.5 37.0M434.0 34.0L435.5 37.0M437.0 34.0L440.0 34.0M437.0 34.0L435.5 37.0M437.0 34.0L438.5 37.0M440.0 34.0L443.0 34.0M440.0 34.0L438.5 37.0M440.0 34.0L441.5 37.0M443.0 34.0L446.0 34.0M443.0 34.0L441.5 37.0M443.0 34.0L444.5 37.0M446.0 34.0L444.5 37.0M446.0 34.0L447.5 37.0M429.5 37.0L432.5 37.0M429.5 37.0L431.0 40.0M432.5 37.0L435.5 37.0M432.5 37.0L431.0 40.0M432.5 37.0L434.0 40.0M435.5 37.0L438.5 37.0M435.5 37.0L434.0 40.0M435.5 37.0L437.0 40.0M438.5 37.0L441.5 37.0M438.5 37.0L437.0 40.0M438.5 37.0L440.0 40.0M441.5 37.0L444.5 37.0M441.5 37.0L440.0 40.0M441.5 37.0L443.0 40.0M444.5 37.0L447.5 37.0M444.5 37.0L443.0 40.0M444.5 37.0L446.0 40.0M447.5 37.0L446.0 40.0M431.0 40.0L434.0 40.0M431.0 40.0L429.5 43.0M431.0 40.0L432.5 43.0M434.0 40.0L437.0 40.0M434.0 40.0L432.5 43.0M434.0 40.0L435.5 43.0M437.0 40.0L440.0 40.0M437.0 40.0L435.5 43.0M437.0 40.0L438.5 43.0M440.0 40.0L443.0 40.0M440.0 40.0L438.5 43.0M440.0 40.0L441.5 43.0M443.0 40.0L446.0 40.0M443.0 40.0L441.5 43.0M443.0 40.0L444.5 43.0M446.0 40.0L444.5 43.0M429.5 43.0L432.5 43.0M429.5 43.0L428.0 46.0M429.5 43.0L431.0 46.0M432.5 43.0L435.5 43.0M432.5 43.0L431.0 46.0M432.5 43.0L434.0 46.0M435.5 43.0L438.5 43.0M435.5 43.0L434.0 46.0M435.5 43.0L437.0 46.0M438.5 43.0L441.5 43.0M438.5 43.0L437.0 46.0M438.5 43.0L440.0 46.0M441.5 43.0L444.5 43.0M441.5 43.0L440.0 46.0M441.5 43.0L443.0 46.0M444.5 43.0L443.0 46.0M444.5 43.0L446.0 46.0M428.0 46.0L431.0 46.0M428.0 46.0L426.5 49.0M428.0 46.0L429.5 49.0M431.0 46.0L434.0 46.0M431.0 46.0L429.5 49.0M431.0 46.0L432.5 49.0M434.0 46.0L437.0 46.0M434.0 46.0L432.5 49.0M434.0 46.0L435.5 49.0M437.0 46.0L440.0 46.0M437.0 46.0L435.5 49.0M437.0 46.0L438.5 49.0M440.0 46.0L443.0 46.0M440.0 46.0L438.5 49.0M440.0 46.0L441.5 49.0M443.0 46.0L446.0 46.0M443.0 46.0L441.5 49.0M443.0 46.0L444.5 49.0M446.0 46.0L444.5 49.0M426.5 49.0L429.5 49.0M426.5 49.0L428.0 52.0M429.5 49.0L432.5 49.0M429.5 49.0L428.0 52.0M429.5 49.0L431.0 52.0M432.5 49.0L435.5 49.0M432.5 49.0L431.0 52.0M432.5 49.0L434.0 52.0M435.5 49.0L438.5 49.0M435.5 49.0L434.0 52.0M435.5 49.0L437.0 52.0M438.5 49.0L441.5 49.0M438.5 49.0L437.0 52.0M438.5 49.0L440.0 52.0M441.5 49.0L444.5 49.0M441.5 49.0L440.0 52.0M441.5 49.0L443.0 52.0M444.5 49.0L443.0 52.0M444.5 49.0L446.0 52.0M428.0 52.0L431.0 52.0M428.0 52.0L426.5 55.0M428.0 52.0L429.5 55.0M431.0 52.0L434.0 52.0M431.0 52.0L429.5 55.0M431.0 52.0L432.5 55.0M434.0 52.0L437.0 52.0M434.0 52.0L432.5 55.0M434.0 52.0L435.5 55.0M437.0 52.0L440.0 52.0M437.0 52.0L435.5 55.0M437.0 52.0L438.5 55.0M440.0 52.0L443.0 52.0M440.0 52.0L438.5 55.0M440.0 52.0L441.5 55.0M443.0 52.0L446.0 52.0M443.0 52.0L441.5 55.0M443.0 52.0L444.5 55.0M446.0 52.0L444.5 55.0M426.5 55.0L429.5 55.0M426.5 55.0L428.0 58.0M429.5 55.0L432.5 55.0M429.5 55.0L428.0 58.0M429.5 55.0L431.0 58.0M432.5 55.0L435.5 55.0M432.5 55.0L431.0 58.0M432.5 55.0L434.0 58.0M435.5 55.0L438.5 55.0M435.5 55.0L434.0 58.0M435.5 55.0L437.0 58.0M438.5 55.0L441.5 55.0M438.5 55.0L437.0 58.0M438.5 55.0L440.0 58.0M441.5 55.0L444.5 55.0M441.5 55.0L440.0 58.0M441.5 55.0L443.0 58.0M444.5 55.0L443.0 58.0M444.5 55.0L446.0 58.0M428.0 58.0L431.0 58.0M428.0 58.0L426.5 61.0M428.0 58.0L429.5 61.0M431.0 58.0L434.0 58.0M431.0 58.0L429.5 61.0M431.0 58.0L432.5 61.0M434.0 58.0L437.0 58.0M434.0 58.0L432.5 61.0M434.0 58.0L435.5 61.0M437.0 58.0L440.0 58.0M437.0 58.0L435.5 61.0M437.0 58.0L438.5 61.0M440.0 58.0L443.0 58.0M440.0 58.0L438.5 61.0M440.0 58.0L441.5 61.0M443.0 58.0L446.0 58.0M443.0 58.0L441.5 61.0M443.0 58.0L444.5 61.0M446.0 58.0L444.5 61.0M446.0 58.0L447.5 61.0M426.5 61.0L429.5 61.0M426.5 61.0L428.0 64.0M429.5 61.0L432.5 61.0M429.5 61.0L428.0 64.0M429.5 61.0L431.0 64.0M432.5 61.0L435.5 61.0M432.5 61.0L431.0 64.0M432.5 61.0L434.0 64.0M435.5 61.0L438.5 61.0M435.5 61.0L434.0 64.0M435.5 61.0L437.0 64.0M438.5 61.0L441.5 61.0M438.5 61.0L437.0 64.0M438.5 61.0L440.0 64.0M441.5 61.0L444.5 61.0M441.5 61.0L440.0 64.0M441.5 61.0L443.0 64.0M444.5 61.0L447.5 61.0M444.5 61.0L443.0 64.0M444.5 61.0L446.0 64.0M447.5 61.0L446.0 64.0M428.0 64.0L431.0 64.0M428.0 64.0L426.5 67.0M428.0 64.0L429.5 67.0M431.0 64.0L434.0 64.0M431.0 64.0L429.5 67.0M431.0 64.0L432.5 67.0M434.0 64.0L437.0 64.0M434.0 64.0L432.5 67.0M434.0 64.0L435.5 67.0M437.0 64.0L440.0 64.0M437.0 64.0L435.5 67.0M437.0 64.0L438.5 67.0M440.0 64.0L443.0 64.0M440.0 64.0L438.5 67.0M440.0 64.0L441.5 67.0M443.0 64.0L446.0 64.0M443.0 64.0L441.5 67.0M443.0 64.0L444.5 67.0M446.0 64.0L444.5 67.0M446.0 64.0L447.5 67.0M426.5 67.0L429.5 67.0M426.5 67.0L428.0 70.0M429.5 67.0L432.5 67.0M429.5 67.0L428.0 70.0M429.5 67.0L431.0 70.0M432.5 67.0L435.5 67.0M432.5 67.0L431.0 70.0M432.5 67.0L434.0 70.0M435.5 67.0L438.5 67.0M435.5 67.0L434.0 70.0M435.5 67.0L437.0 70.0M438.5 67.0L441.5 67.0M438.5 67.0L437.0 70.0M438.5 67.0L440.0 70.0M441.5 67.0L444.5 67.0M441.5 67.0L440.0 70.0M441.5 67.0L443.0 70.0M444.5 67.0L447.5 67.0M444.5 67.0L443.0 70.0M444.5 67.0L446.0 70.0M447.5 67.0L446.0 70.0M428.0 70.0L431.0 70.0M428.0 70.0L426.5 73.0M428.0 70.0L429.5 73.0M431.0 70.0L434.0 70.0M431.0 70.0L429.5 73.0M431.0 70.0L432.5 73.0M434.0 70.0L437.0 70.0M434.0 70.0L432.5 73.0M434.0 70.0L435.5 73.0M437.0 70.0L440.0 70.0M437.0 70.0L435.5 73.0M437.0 70.0L438.5 73.0M440.0 70.0L443.0 70.0M440.0 70.0L438.5 73.0M440.0 70.0L441.5 73.0M443.0 70.0L446.0 70.0M443.0 70.0L441.5 73.0M443.0 70.0L444.5 73.0M446.0 70.0L444.5 73.0M446.0 70.0L447.5 73.0M426.5 73.0L429.5 73.0M426.5 73.0L428.0 76.0M429.5 73.0L432.5 73.0M429.5 73.0L428.0 76.0M429.5 73.0L431.0 76.0M432.5 73.0L435.5 73.0M432.5 73.0L431.0 76.0M432.5 73.0L434.0 76.0M435.5 73.0L438.5 73.0M435.5 73.0L434.0 76.0M435.5 73.0L437.0 76.0M438.5 73.0L441.5 73.0M438.5 73.0L437.0 76.0M438.5 73.0L440.0 76.0M441.5 73.0L444.5 73.0M441.5 73.0L440.0 76.0M441.5 73.0L443.0 76.0M444.5 73.0L447.5 73.0M444.5 73.0L443.0 76.0M444.5 73.0L446.0 76.0M447.5 73.0L446.0 76.0M428.0 76.0L431.0 76.0M428.0 76.0L429.5 79.0M431.0 76.0L434.0 76.0M431.0 76.0L429.5 79.0M431.0 76.0L432.5 79.0M434.0 76.0L437.0 76.0M434.0 76.0L432.5 79.0M434.0 76.0L435.5 79.0M437.0 76.0L440.0 76.0M437.0 76.0L435.5 79.0M437.0 76.0L438.5 79.0M440.0 76.0L443.0 76.0M440.0 76.0L438.5 79.0M440.0 76.0L441.5 79.0M443.0 76.0L446.0 76.0M443.0 76.0L441.5 79.0M443.0 76.0L444.5 79.0M446.0 76.0L444.5 79.0M446.0 76.0L447.5 79.0M429.5 79.0L432.5 79.0M429.5 79.0L428.0 82.0M429.5 79.0L431.0 82.0M432.5 79.0L435.5 79.0M432.5 79.0L431.0 82.0M432.5 79.0L434.0 82.0M435.5 79.0L438.5 79.0M435.5 79.0L434.0 82.0M435.5 79.0L437.0 82.0M438.5 79.0L441.5 79.0M438.5 79.0L437.0 82.0M438.5 79.0L440.0 82.0M441.5 79.0L444.5 79.0M441.5 79.0L440.0 82.0M441.5 79.0L443.0 82.0M444.5 79.0L447.5 79.0M444.5 79.0L443.0 82.0M444.5 79.0L446.0 82.0M447.5 79.0L446.0 82.0M428.0 82.0L431.0 82.0M428.0 82.0L429.5 85.0M431.0 82.0L434.0 82.0M431.0 82.0L429.5 85.0M431.0 82.0L432.5 85.0M434.0 82.0L437.0 82.0M434.0 82.0L432.5 85.0M434.0 82.0L435.5 85.0M437.0 82.0L440.0 82.0M437.0 82.0L435.5 85.0M437.0 82.0L438.5 85.0M440.0 82.0L443.0 82.0M440.0 82.0L438.5 85.0M440.0 82.0L441.5 85.0M443.0 82.0L446.0 82.0M443.0 82.0L441.5 85.0M443.0 82.0L444.5 85.0M446.0 82.0L444.5 85.0M446.0 82.0L447.5 85.0M429.5 85.0L432.5 85.0M429.5 85.0L431.0 88.0M432.5 85.0L435.5 85.0M432.5 85.0L431.0 88.0M432.5 85.0L434.0 88.0M435.5 85.0L438.5 85.0M435.5 85.0L434.0 88.0M435.5 85.0L437.0 88.0M438.5 85.0L441.5 85.0M438.5 85.0L437.0 88.0M438.5 85.0L440.0 88.0M441.5 85.0L444.5 85.0M441.5 85.0L440.0 88.0M441.5 85.0L443.0 88.0M444.5 85.0L447.5 85.0M444.5 85.0L443.0 88.0M444.5 85.0L446.0 88.0M447.5 85.0L446.0 88.0M431.0 88.0L434.0 88.0M431.0 88.0L429.5 91.0M431.0 88.0L432.5 91.0M434.0 88.0L437.0 88.0M434.0 88.0L432.5 91.0M434.0 88.0L435.5 91.0M437.0 88.0L440.0 88.0M437.0 88.0L435.5 91.0M437.0 88.0L438.5 91.0M440.0 88.0L443.0 88.0M440.0 88.0L438.5 91.0M440.0 88.0L441.5 91.0M443.0 88.0L446.0 88.0M443.0 88.0L441.5 91.0M443.0 88.0L444.5 91.0M446.0 88.0L444.5 91.0M446.0 88.0L447.5 91.0M429.5 91.0L432.5 91.0M429.5 91.0L431.0 94.0M432.5 91.0L435.5 91.0M432.5 91.0L431.0 94.0M432.5 91.0L434.0 94.0M435.5 91.0L438.5 91.0M435.5 91.0L434.0 94.0M435.5 91.0L437.0 94.0M438.5 91.0L441.5 91.0M438.5 91.0L437.0 94.0M438.5 91.0L440.0 94.0M441.5 91.0L444.5 91.0M441.5 91.0L440.0 94.0M441.5 91.0L443.0 94.0M444.5 91.0L447.5 91.0M444.5 91.0L443.0 94.0M444.5 91.0L446.0 94.0M447.5 91.0L446.0 94.0M447.5 91.0L449.0 94.0M431.0 94.0L434.0 94.0M431.0 94.0L432.5 97.0M434.0 94.0L437.0 94.0M434.0 94.0L432.5 97.0M434.0 94.0L435.5 97.0M437.0 94.0L440.0 94.0M437.0 94.0L435.5 97.0M437.0 94.0L438.5 97.0M440.0 94.0L443.0 94.0M440.0 94.0L438.5 97.0M440.0 94.0L441.5 97.0M443.0 94.0L446.0 94.0M443.0 94.0L441.5 97.0M443.0 94.0L444.5 97.0M446.0 94.0L449.0 94.0M446.0 94.0L444.5 97.0M446.0 94.0L447.5 97.0M449.0 94.0L447.5 97.0M432.5 97.0L435.5 97.0M432.5 97.0L431.0 100.0M432.5 97.0L434.0 100.0M435.5 97.0L438.5 97.0M435.5 97.0L434.0 100.0M435.5 97.0L437.0 100.0M438.5 97.0L441.5 97.0M438.5 97.0L437.0 100.0M438.5 97.0L440.0 100.0M441.5 97.0L444.5 97.0M441.5 97.0L440.0 100.0M441.5 97.0L443.0 100.0M444.5 97.0L447.5 97.0M444.5 97.0L443.0 100.0M444.5 97.0L446.0 100.0M447.5 97.0L446.0 100.0M447.5 97.0L449.0 100.0M431.0 100.0L434.0 100.0M431.0 100.0L432.5 103.0M434.0 100.0L437.0 100.0M434.0 100.0L432.5 103.0M434.0 100.0L435.5 103.0M437.0 100.0L440.0 100.0M437.0 100.0L435.5 103.0M437.0 100.0L438.5 103.0M440.0 100.0L443.0 100.0M440.0 100.0L438.5 103.0M440.0 100.0L441.5 103.0M443.0 100.0L446.0 100.0M443.0 100.0L441.5 103.0M443.0 100.0L444.5 103.0M446.0 100.0L449.0 100.0M446.0 100.0L444.5 103.0M446.0 100.0L447.5 103.0M449.0 100.0L447.5 103.0M432.5 103.0L435.5 103.0M432.5 103.0L434.0 106.0M435.5 103.0L438.5 103.0M435.5 103.0L434.0 106.0M435.5 103.0L437.0 106.0M438.5 103.0L441.5 103.0M438.5 103.0L437.0 106.0M438.5 103.0L440.0 106.0M441.5 103.0L444.5 103.0M441.5 103.0L440.0 106.0M441.5 103.0L443.0 106.0M444.5 103.0L447.5 103.0M444.5 103.0L443.0 106.0M444.5 103.0L446.0 106.0M447.5 103.0L446.0 106.0M447.5 103.0L449.0 106.0M434.0 106.0L437.0 106.0M434.0 106.0L432.5 109.0M434.0 106.0L435.5 109.0M437.0 106.0L440.0 106.0M437.0 106.0L435.5 109.0M437.0 106.0L438.5 109.0M440.0 106.0L443.0 106.0M440.0 106.0L438.5 109.0M440.0 106.0L441.5 109.0M443.0 106.0L446.0 106.0M443.0 106.0L441.5 109.0M443.0 106.0L444.5 109.0M446.0 106.0L449.0 106.0M446.0 106.0L444.5 109.0M446.0 106.0L447.5 109.0M449.0 106.0L447.5 109.0M432.5 109.0L435.5 109.0M432.5 109.0L434.0 112.0M435.5 109.0L438.5 109.0M435.5 109.0L434.0 112.0M435.5 109.0L437.0 112.0M438.5 109.0L441.5 109.0M438.5 109.0L437.0 112.0M438.5 109.0L440.0 112.0M441.5 109.0L444.5 109.0M441.5 109.0L440.0 112.0M441.5 109.0L443.0 112.0M444.5 109.0L447.5 109.0M444.5 109.0L443.0 112.0M444.5 109.0L446.0 112.0M447.5 109.0L446.0 112.0M447.5 109.0L449.0 112.0M434.0 112.0L437.0 112.0M434.0 112.0L432.5 115.0M434.0 112.0L435.5 115.0M437.0 112.0L440.0 112.0M437.0 112.0L435.5 115.0M437.0 112.0L438.5 115.0M440.0 112.0L443.0 112.0M440.0 112.0L438.5 115.0M440.0 112.0L441.5 115.0M443.0 112.0L446.0 112.0M443.0 112.0L441.5 115.0M443.0 112.0L444.5 115.0M446.0 112.0L449.0 112.0M446.0 112.0L444.5 115.0M446.0 112.0L447.5 115.0M449.0 112.0L447.5 115.0M432.5 115.0L435.5 115.0M432.5 115.0L434.0 118.0M435.5 115.0L438.5 115.0M435.5 115.0L434.0 118.0M435.5 115.0L437.0 118.0M438.5 115.0L441.5 115.0M438.5 115.0L437.0 118.0M438.5 115.0L440.0 118.0M441.5 115.0L444.5 115.0M441.5 115.0L440.0 118.0M441.5 115.0L443.0 118.0M444.5 115.0L447.5 115.0M444.5 115.0L443.0 118.0M444.5 115.0L446.0 118.0M447.5 115.0L446.0 118.0M447.5 115.0L449.0 118.0M434.0 118.0L437.0 118.0M434.0 118.0L435.5 121.0M437.0 118.0L440.0 118.0M437.0 118.0L435.5 121.0M437.0 118.0L438.5 121.0M440.0 118.0L443.0 118.0M440.0 118.0L438.5 121.0M440.0 118.0L441.5 121.0M443.0 118.0L446.0 118.0M443.0 118.0L441.5 121.0M443.0 118.0L444.5 121.0M446.0 118.0L449.0 118.0M446.0 118.0L444.5 121.0M446.0 118.0L447.5 121.0M449.0 118.0L447.5 121.0M435.5 121.0L438.5 121.0M435.5 121.0L434.0 124.0M435.5 121.0L437.0 124.0M438.5 121.0L441.5 121.0M438.5 121.0L437.0 124.0M438.5 121.0L440.0 124.0M441.5 121.0L444.5 121.0M441.5 121.0L440.0 124.0M441.5 121.0L443.0 124.0M444.5 121.0L447.5 121.0M444.5 121.0L443.0 124.0M444.5 121.0L446.0 124.0M447.5 121.0L446.0 124.0M447.5 121.0L449.0 124.0M434.0 124.0L437.0 124.0M434.0 124.0L435.5 127.0M437.0 124.0L440.0 124.0M437.0 124.0L435.5 127.0M437.0 124.0L438.5 127.0M440.0 124.0L443.0 124.0M440.0 124.0L438.5 127.0M440.0 124.0L441.5 127.0M443.0 124.0L446.0 124.0M443.0 124.0L441.5 127.0M443.0 124.0L444.5 127.0M446.0 124.0L449.0 124.0M446.0 124.0L444.5 127.0M446.0 124.0L447.5 127.0M449.0 124.0L447.5 127.0M435.5 127.0L438.5 127.0M438.5 127.0L441.5 127.0M441.5 127.0L444.5 127.0M444.5 127.0L447.5 127.0" stroke="#fff" stroke-width="0.70" stroke-opacity="0.85" fill="none"/><path d="M432.5 31.0h0M435.5 31.0h0M438.5 31.0h0M441.5 31.0h0M431.0 34.0h0M434.0 34.0h0M437.0 34.0h0M440.0 34.0h0M443.0 34.0h0M446.0 34.0h0M429.5 37.0h0M432.5 37.0h0M435.5 37.0h0M438.5 37.0h0M441.5 37.0h0M444.5 37.0h0M447.5 37.0h0M431.0 40.0h0M434.0 40.0h0M437.0 40.0h0M440.0 40.0h0M443.0 40.0h0M446.0 40.0h0M429.5 43.0h0M432.5 43.0h0M435.5 43.0h0M438.5 43.0h0M441.5 43.0h0M444.5 43.0h0M428.0 46.0h0M431.0 46.0h0M434.0 46.0h0M437.0 46.0h0M440.0 46.0h0M443.0 46.0h0M446.0 46.0h0M426.5 49.0h0M429.5 49.0h0M432.5 49.0h0M435.5 49.0h0M438.5 49.0h0M441.5 49.0h0M444.5 49.0h0M428.0 52.0h0M431.0 52.0h0M434.0 52.0h0M437.0 52.0h0M440.0 52.0h0M443.0 52.0h0M446.0 52.0h0M426.5 55.0h0M429.5 55.0h0M432.5 55.0h0M435.5 55.0h0M438.5 55.0h0M441.5 55.0h0M444.5 55.0h0M428.0 58.0h0M431.0 58.0h0M434.0 58.0h0M437.0 58.0h0M440.0 58.0h0M443.0 58.0h0M446.0 58.0h0M426.5 61.0h0M429.5 61.0h0M432.5 61.0h0M435.5 61.0h0M438.5 61.0h0M441.5 61.0h0M444.5 61.0h0M447.5 61.0h0M428.0 64.0h0M431.0 64.0h0M434.0 64.0h0M437.0 64.0h0M440.0 64.0h0M443.0 64.0h0M446.0 64.0h0M426.5 67.0h0M429.5 67.0h0M432.5 67.0h0M435.5 67.0h0M438.5 67.0h0M441.5 67.0h0M444.5 67.0h0M447.5 67.0h0M428.0 70.0h0M431.0 70.0h0M434.0 70.0h0M437.0 70.0h0M440.0 70.0h0M443.0 70.0h0M446.0 70.0h0M426.5 73.0h0M429.5 73.0h0M432.5 73.0h0M435.5 73.0h0M438.5 73.0h0M441.5 73.0h0M444.5 73.0h0M447.5 73.0h0M428.0 76.0h0M431.0 76.0h0M434.0 76.0h0M437.0 76.0h0M440.0 76.0h0M443.0 76.0h0M446.0 76.0h0M429.5 79.0h0M432.5 79.0h0M435.5 79.0h0M438.5 79.0h0M441.5 79.0h0M444.5 79.0h0M447.5 79.0h0M428.0 82.0h0M431.0 82.0h0M434.0 82.0h0M437.0 82.0h0M440.0 82.0h0M443.0 82.0h0M446.0 82.0h0M429.5 85.0h0M432.5 85.0h0M435.5 85.0h0M438.5 85.0h0M441.5 85.0h0M444.5 85.0h0M447.5 85.0h0M431.0 88.0h0M434.0 88.0h0M437.0 88.0h0M440.0 88.0h0M443.0 88.0h0M446.0 88.0h0M429.5 91.0h0M432.5 91.0h0M435.5 91.0h0M438.5 91.0h0M441.5 91.0h0M444.5 91.0h0M447.5 91.0h0M431.0 94.0h0M434.0 94.0h0M437.0 94.0h0M440.0 94.0h0M443.0 94.0h0M446.0 94.0h0M449.0 94.0h0M432.5 97.0h0M435.5 97.0h0M438.5 97.0h0M441.5 97.0h0M444.5 97.0h0M447.5 97.0h0M431.0 100.0h0M434.0 100.0h0M437.0 100.0h0M440.0 100.0h0M443.0 100.0h0M446.0 100.0h0M449.0 100.0h0M432.5 103.0h0M435.5 103.0h0M438.5 103.0h0M441.5 103.0h0M444.5 103.0h0M447.5 103.0h0M434.0 106.0h0M437.0 106.0h0M440.0 106.0h0M443.0 106.0h0M446.0 106.0h0M449.0 106.0h0M432.5 109.0h0M435.5 109.0h0M438.5 109.0h0M441.5 109.0h0M444.5 109.0h0M447.5 109.0h0M434.0 112.0h0M437.0 112.0h0M440.0 112.0h0M443.0 112.0h0M446.0 112.0h0M449.0 112.0h0M432.5 115.0h0M435.5 115.0h0M438.5 115.0h0M441.5 115.0h0M444.5 115.0h0M447.5 115.0h0M434.0 118.0h0M437.0 118.0h0M440.0 118.0h0M443.0 118.0h0M446.0 118.0h0M449.0 118.0h0M435.5 121.0h0M438.5 121.0h0M441.5 121.0h0M444.5 121.0h0M447.5 121.0h0M434.0 124.0h0M437.0 124.0h0M440.0 124.0h0M443.0 124.0h0M446.0 124.0h0M449.0 124.0h0M435.5 127.0h0M438.5 127.0h0M441.5 127.0h0M444.5 127.0h0M447.5 127.0h0" stroke="#fff" stroke-width="2.00" stroke-linecap="round" fill="none"/>
  <ellipse cx="441.5" cy="121.5" rx="7" ry="7" fill="#fff"/>
  <line x1="446.4" y1="44" x2="461.5" y2="65" stroke="#fff" stroke-width="1.3"/>
  <g opacity="0.12"><text x="200.5" y="258.5" font-family="Liberation Serif" font-weight="bold" font-size="35" letter-spacing="5.6" fill="#fff" stroke="#fff" stroke-width="1.3">Severinka</text></g>
  <g fill="#e00000"><circle cx="583" cy="45.6" r="2.2"/><circle cx="583" cy="55" r="2.2"/><circle cx="583" cy="63.6" r="2.2"/><circle cx="584" cy="72.5" r="2.2"/></g>
</g>
<!-- BL -->
<g clip-path="url(#cbl)">
  <rect x="0" y="267" width="294" height="238" fill="#999"/>
  <g stroke="#7e7e7e" stroke-width="1"><line x1="0" y1="384.5" x2="294" y2="384.5"/><line x1="147.6" y1="267" x2="147.6" y2="505"/></g>
  <line x1="1.5" y1="267" x2="1.5" y2="505" stroke="#8e8e8e"/><line x1="4.5" y1="267" x2="4.5" y2="505" stroke="#a0a0a0"/>
  <line x1="148" y1="384.5" x2="294" y2="384.5" stroke="#c8c832" stroke-width="1.2"/>
  <line x1="147.6" y1="400" x2="147.6" y2="505" stroke="#b070c0" stroke-width="1.5"/>
  <path d="M29,376 L45,375.5 L63,373 L91,371.5 L112,369.5 L120,367.5 L124,363.5 L131,361 L148,360 L165,361 L172,363.5 L176,367.5 L184,369.5 L204,371.5 L232,373 L250,375.5 L266,376 L266,390.5 L251.4,390.5 L251.4,397 L245,397 L245,388 L239.3,385.7 L210.7,384.3 L189.3,385.7 L178,387 L177.5,393 L174,399 L167,404.5 L158,408 L148,409 L138,408 L129,404.5 L122,399 L118.5,393 L118,387 L105.7,385.7 L84.3,384.3 L55.7,385.7 L50,388 L50,397 L43.6,397 L43.6,390.7 L29,390.7 Z" fill="#fff" fill-opacity="0.55" stroke="#fff" stroke-width="1.2" stroke-opacity="0.9"/>
  <path d="M126.5 363.0L129.5 363.0M126.5 363.0L125.0 366.0M126.5 363.0L128.0 366.0M129.5 363.0L132.5 363.0M129.5 363.0L128.0 366.0M129.5 363.0L131.0 366.0M132.5 363.0L135.5 363.0M132.5 363.0L131.0 366.0M132.5 363.0L134.0 366.0M135.5 363.0L138.5 363.0M135.5 363.0L134.0 366.0M135.5 363.0L137.0 366.0M138.5 363.0L141.5 363.0M138.5 363.0L137.0 366.0M138.5 363.0L140.0 366.0M141.5 363.0L144.5 363.0M141.5 363.0L140.0 366.0M141.5 363.0L143.0 366.0M144.5 363.0L147.5 363.0M144.5 363.0L143.0 366.0M144.5 363.0L146.0 366.0M147.5 363.0L150.5 363.0M147.5 363.0L146.0 366.0M147.5 363.0L149.0 366.0M150.5 363.0L153.5 363.0M150.5 363.0L149.0 366.0M150.5 363.0L152.0 366.0M153.5 363.0L156.5 363.0M153.5 363.0L152.0 366.0M153.5 363.0L155.0 366.0M156.5 363.0L159.5 363.0M156.5 363.0L155.0 366.0M156.5 363.0L158.0 366.0M159.5 363.0L162.5 363.0M159.5 363.0L158.0 366.0M159.5 363.0L161.0 366.0M162.5 363.0L165.5 363.0M162.5 363.0L161.0 366.0M162.5 363.0L164.0 366.0M165.5 363.0L168.5 363.0M165.5 363.0L164.0 366.0M165.5 363.0L167.0 366.0M168.5 363.0L167.0 366.0M168.5 363.0L170.0 366.0M122.0 366.0L125.0 366.0M122.0 366.0L120.5 369.0M122.0 366.0L123.5 369.0M125.0 366.0L128.0 366.0M125.0 366.0L123.5 369.0M125.0 366.0L126.5 369.0M128.0 366.0L131.0 366.0M128.0 366.0L126.5 369.0M128.0 366.0L129.5 369.0M131.0 366.0L134.0 366.0M131.0 366.0L129.5 369.0M131.0 366.0L132.5 369.0M134.0 366.0L137.0 366.0M134.0 366.0L132.5 369.0M134.0 366.0L135.5 369.0M137.0 366.0L140.0 366.0M137.0 366.0L135.5 369.0M137.0 366.0L138.5 369.0M140.0 366.0L143.0 366.0M140.0 366.0L138.5 369.0M140.0 366.0L141.5 369.0M143.0 366.0L146.0 366.0M143.0 366.0L141.5 369.0M143.0 366.0L144.5 369.0M146.0 366.0L149.0 366.0M146.0 366.0L144.5 369.0M146.0 366.0L147.5 369.0M149.0 366.0L152.0 366.0M149.0 366.0L147.5 369.0M149.0 366.0L150.5 369.0M152.0 366.0L155.0 366.0M152.0 366.0L150.5 369.0M152.0 366.0L153.5 369.0M155.0 366.0L158.0 366.0M155.0 366.0L153.5 369.0M155.0 366.0L156.5 369.0M158.0 366.0L161.0 366.0M158.0 366.0L156.5 369.0M158.0 366.0L159.5 369.0M161.0 366.0L164.0 366.0M161.0 366.0L159.5 369.0M161.0 366.0L162.5 369.0M164.0 366.0L167.0 366.0M164.0 366.0L162.5 369.0M164.0 366.0L165.5 369.0M167.0 366.0L170.0 366.0M167.0 366.0L165.5 369.0M167.0 366.0L168.5 369.0M170.0 366.0L173.0 366.0M170.0 366.0L168.5 369.0M170.0 366.0L171.5 369.0M173.0 366.0L171.5 369.0M173.0 366.0L174.5 369.0M114.5 369.0L117.5 369.0M114.5 369.0L113.0 372.0M114.5 369.0L116.0 372.0M117.5 369.0L120.5 369.0M117.5 369.0L116.0 372.0M117.5 369.0L119.0 372.0M120.5 369.0L123.5 369.0M120.5 369.0L119.0 372.0M120.5 369.0L122.0 372.0M123.5 369.0L126.5 369.0M123.5 369.0L122.0 372.0M123.5 369.0L125.0 372.0M126.5 369.0L129.5 369.0M126.5 369.0L125.0 372.0M126.5 369.0L128.0 372.0M129.5 369.0L132.5 369.0M129.5 369.0L128.0 372.0M129.5 369.0L131.0 372.0M132.5 369.0L135.5 369.0M132.5 369.0L131.0 372.0M132.5 369.0L134.0 372.0M135.5 369.0L138.5 369.0M135.5 369.0L134.0 372.0M135.5 369.0L137.0 372.0M138.5 369.0L141.5 369.0M138.5 369.0L137.0 372.0M138.5 369.0L140.0 372.0M141.5 369.0L144.5 369.0M141.5 369.0L140.0 372.0M141.5 369.0L143.0 372.0M144.5 369.0L147.5 369.0M144.5 369.0L143.0 372.0M144.5 369.0L146.0 372.0M147.5 369.0L150.5 369.0M147.5 369.0L146.0 372.0M147.5 369.0L149.0 372.0M150.5 369.0L153.5 369.0M150.5 369.0L149.0 372.0M150.5 369.0L152.0 372.0M153.5 369.0L156.5 369.0M153.5 369.0L152.0 372.0M153.5 369.0L155.0 372.0M156.5 369.0L159.5 369.0M156.5 369.0L155.0 372.0M156.5 369.0L158.0 372.0M159.5 369.0L162.5 369.0M159.5 369.0L158.0 372.0M159.5 369.0L161.0 372.0M162.5 369.0L165.5 369.0M162.5 369.0L161.0 372.0M162.5 369.0L164.0 372.0M165.5 369.0L168.5 369.0M165.5 369.0L164.0 372.0M165.5 369.0L167.0 372.0M168.5 369.0L171.5 369.0M168.5 369.0L167.0 372.0M168.5 369.0L170.0 372.0M171.5 369.0L174.5 369.0M171.5 369.0L170.0 372.0M171.5 369.0L173.0 372.0M174.5 369.0L177.5 369.0M174.5 369.0L173.0 372.0M174.5 369.0L176.0 372.0M177.5 369.0L180.5 369.0M177.5 369.0L176.0 372.0M177.5 369.0L179.0 372.0M180.5 369.0L179.0 372.0M180.5 369.0L182.0 372.0M83.0 372.0L86.0 372.0M83.0 372.0L81.5 375.0M83.0 372.0L84.5 375.0M86.0 372.0L89.0 372.0M86.0 372.0L84.5 375.0M86.0 372.0L87.5 375.0M89.0 372.0L92.0 372.0M89.0 372.0L87.5 375.0M89.0 372.0L90.5 375.0M92.0 372.0L95.0 372.0M92.0 372.0L90.5 375.0M92.0 372.0L93.5 375.0M95.0 372.0L98.0 372.0M95.0 372.0L93.5 375.0M95.0 372.0L96.5 375.0M98.0 372.0L101.0 372.0M98.0 372.0L96.5 375.0M98.0 372.0L99.5 375.0M101.0 372.0L104.0 372.0M101.0 372.0L99.5 375.0M101.0 372.0L102.5 375.0M104.0 372.0L107.0 372.0M104.0 372.0L102.5 375.0M104.0 372.0L105.5 375.0M107.0 372.0L110.0 372.0M107.0 372.0L105.5 375.0M107.0 372.0L108.5 375.0M110.0 372.0L113.0 372.0M110.0 372.0L108.5 375.0M110.0 372.0L111.5 375.0M113.0 372.0L116.0 372.0M113.0 372.0L111.5 375.0M113.0 372.0L114.5 375.0M116.0 372.0L119.0 372.0M116.0 372.0L114.5 375.0M116.0 372.0L117.5 375.0M119.0 372.0L122.0 372.0M119.0 372.0L117.5 375.0M119.0 372.0L120.5 375.0M122.0 372.0L125.0 372.0M122.0 372.0L120.5 375.0M122.0 372.0L123.5 375.0M125.0 372.0L128.0 372.0M125.0 372.0L123.5 375.0M125.0 372.0L126.5 375.0M128.0 372.0L131.0 372.0M128.0 372.0L126.5 375.0M128.0 372.0L129.5 375.0M131.0 372.0L134.0 372.0M131.0 372.0L129.5 375.0M131.0 372.0L132.5 375.0M134.0 372.0L137.0 372.0M134.0 372.0L132.5 375.0M134.0 372.0L135.5 375.0M137.0 372.0L140.0 372.0M137.0 372.0L135.5 375.0M137.0 372.0L138.5 375.0M140.0 372.0L143.0 372.0M140.0 372.0L138.5 375.0M140.0 372.0L141.5 375.0M143.0 372.0L146.0 372.0M143.0 372.0L141.5 375.0M143.0 372.0L144.5 375.0M146.0 372.0L149.0 372.0M146.0 372.0L144.5 375.0M146.0 372.0L147.5 375.0M149.0 372.0L152.0 372.0M149.0 372.0L147.5 375.0M149.0 372.0L150.5 375.0M152.0 372.0L155.0 372.0M152.0 372.0L150.5 375.0M152.0 372.0L153.5 375.0M155.0 372.0L158.0 372.0M155.0 372.0L153.5 375.0M155.0 372.0L156.5 375.0M158.0 372.0L161.0 372.0M158.0 372.0L156.5 375.0M158.0 372.0L159.5 375.0M161.0 372.0L164.0 372.0M161.0 372.0L159.5 375.0M161.0 372.0L162.5 375.0M164.0 372.0L167.0 372.0M164.0 372.0L162.5 375.0M164.0 372.0L165.5 375.0M167.0 372.0L170.0 372.0M167.0 372.0L165.5 375.0M167.0 372.0L168.5 375.0M170.0 372.0L173.0 372.0M170.0 372.0L168.5 375.0M170.0 372.0L171.5 375.0M173.0 372.0L176.0 372.0M173.0 372.0L171.5 375.0M173.0 372.0L174.5 375.0M176.0 372.0L179.0 372.0M176.0 372.0L174.5 375.0M176.0 372.0L177.5 375.0M179.0 372.0L182.0 372.0M179.0 372.0L177.5 375.0M179.0 372.0L180.5 375.0M182.0 372.0L185.0 372.0M182.0 372.0L180.5 375.0M182.0 372.0L183.5 375.0M185.0 372.0L188.0 372.0M185.0 372.0L183.5 375.0M185.0 372.0L186.5 375.0M188.0 372.0L191.0 372.0M188.0 372.0L186.5 375.0M188.0 372.0L189.5 375.0M191.0 372.0L194.0 372.0M191.0 372.0L189.5 375.0M191.0 372.0L192.5 375.0M194.0 372.0L197.0 372.0M194.0 372.0L192.5 375.0M194.0 372.0L195.5 375.0M197.0 372.0L200.0 372.0M197.0 372.0L195.5 375.0M197.0 372.0L198.5 375.0M200.0 372.0L203.0 372.0M200.0 372.0L198.5 375.0M200.0 372.0L201.5 375.0M203.0 372.0L206.0 372.0M203.0 372.0L201.5 375.0M203.0 372.0L204.5 375.0M206.0 372.0L209.0 372.0M206.0 372.0L204.5 375.0M206.0 372.0L207.5 375.0M209.0 372.0L212.0 372.0M209.0 372.0L207.5 375.0M209.0 372.0L210.5 375.0M212.0 372.0L210.5 375.0M212.0 372.0L213.5 375.0M51.5 375.0L54.5 375.0M51.5 375.0L50.0 378.0M51.5 375.0L53.0 378.0M54.5 375.0L57.5 375.0M54.5 375.0L53.0 378.0M54.5 375.0L56.0 378.0M57.5 375.0L60.5 375.0M57.5 375.0L56.0 378.0M57.5 375.0L59.0 378.0M60.5 375.0L63.5 375.0M60.5 375.0L59.0 378.0M60.5 375.0L62.0 378.0M63.5 375.0L66.5 375.0M63.5 375.0L62.0 378.0M63.5 375.0L65.0 378.0M66.5 375.0L69.5 375.0M66.5 375.0L65.0 378.0M66.5 375.0L68.0 378.0M69.5 375.0L72.5 375.0M69.5 375.0L68.0 378.0M69.5 375.0L71.0 378.0M72.5 375.0L75.5 375.0M72.5 375.0L71.0 378.0M72.5 375.0L74.0 378.0M75.5 375.0L78.5 375.0M75.5 375.0L74.0 378.0M75.5 375.0L77.0 378.0M78.5 375.0L81.5 375.0M78.5 375.0L77.0 378.0M78.5 375.0L80.0 378.0M81.5 375.0L84.5 375.0M81.5 375.0L80.0 378.0M81.5 375.0L83.0 378.0M84.5 375.0L87.5 375.0M84.5 375.0L83.0 378.0M84.5 375.0L86.0 378.0M87.5 375.0L90.5 375.0M87.5 375.0L86.0 378.0M87.5 375.0L89.0 378.0M90.5 375.0L93.5 375.0M90.5 375.0L89.0 378.0M90.5 375.0L92.0 378.0M93.5 375.0L96.5 375.0M93.5 375.0L92.0 378.0M93.5 375.0L95.0 378.0M96.5 375.0L99.5 375.0M96.5 375.0L95.0 378.0M96.5 375.0L98.0 378.0M99.5 375.0L102.5 375.0M99.5 375.0L98.0 378.0M99.5 375.0L101.0 378.0M102.5 375.0L105.5 375.0M102.5 375.0L101.0 378.0M102.5 375.0L104.0 378.0M105.5 375.0L108.5 375.0M105.5 375.0L104.0 378.0M105.5 375.0L107.0 378.0M108.5 375.0L111.5 375.0M108.5 375.0L107.0 378.0M108.5 375.0L110.0 378.0M111.5 375.0L114.5 375.0M111.5 375.0L110.0 378.0M111.5 375.0L113.0 378.0M114.5 375.0L117.5 375.0M114.5 375.0L113.0 378.0M114.5 375.0L116.0 378.0M117.5 375.0L120.5 375.0M117.5 375.0L116.0 378.0M117.5 375.0L119.0 378.0M120.5 375.0L123.5 375.0M120.5 375.0L119.0 378.0M120.5 375.0L122.0 378.0M123.5 375.0L126.5 375.0M123.5 375.0L122.0 378.0M123.5 375.0L125.0 378.0M126.5 375.0L129.5 375.0M126.5 375.0L125.0 378.0M126.5 375.0L128.0 378.0M129.5 375.0L132.5 375.0M129.5 375.0L128.0 378.0M129.5 375.0L131.0 378.0M132.5 375.0L135.5 375.0M132.5 375.0L131.0 378.0M132.5 375.0L134.0 378.0M135.5 375.0L138.5 375.0M135.5 375.0L134.0 378.0M135.5 375.0L137.0 378.0M138.5 375.0L141.5 375.0M138.5 375.0L137.0 378.0M138.5 375.0L140.0 378.0M141.5 375.0L144.5 375.0M141.5 375.0L140.0 378.0M141.5 375.0L143.0 378.0M144.5 375.0L147.5 375.0M144.5 375.0L143.0 378.0M144.5 375.0L146.0 378.0M147.5 375.0L150.5 375.0M147.5 375.0L146.0 378.0M147.5 375.0L149.0 378.0M150.5 375.0L153.5 375.0M150.5 375.0L149.0 378.0M150.5 375.0L152.0 378.0M153.5 375.0L156.5 375.0M153.5 375.0L152.0 378.0M153.5 375.0L155.0 378.0M156.5 375.0L159.5 375.0M156.5 375.0L155.0 378.0M156.5 375.0L158.0 378.0M159.5 375.0L162.5 375.0M159.5 375.0L158.0 378.0M159.5 375.0L161.0 378.0M162.5 375.0L165.5 375.0M162.5 375.0L161.0 378.0M162.5 375.0L164.0 378.0M165.5 375.0L168.5 375.0M165.5 375.0L164.0 378.0M165.5 375.0L167.0 378.0M168.5 375.0L171.5 375.0M168.5 375.0L167.0 378.0M168.5 375.0L170.0 378.0M171.5 375.0L174.5 375.0M171.5 375.0L170.0 378.0M171.5 375.0L173.0 378.0M174.5 375.0L177.5 375.0M174.5 375.0L173.0 378.0M174.5 375.0L176.0 378.0M177.5 375.0L180.5 375.0M177.5 375.0L176.0 378.0M177.5 375.0L179.0 378.0M180.5 375.0L183.5 375.0M180.5 375.0L179.0 378.0M180.5 375.0L182.0 378.0M183.5 375.0L186.5 375.0M183.5 375.0L182.0 378.0M183.5 375.0L185.0 378.0M186.5 375.0L189.5 375.0M186.5 375.0L185.0 378.0M186.5 375.0L188.0 378.0M189.5 375.0L192.5 375.0M189.5 375.0L188.0 378.0M189.5 375.0L191.0 378.0M192.5 375.0L195.5 375.0M192.5 375.0L191.0 378.0M192.5 375.0L194.0 378.0M195.5 375.0L198.5 375.0M195.5 375.0L194.0 378.0M195.5 375.0L197.0 378.0M198.5 375.0L201.5 375.0M198.5 375.0L197.0 378.0M198.5 375.0L200.0 378.0M201.5 375.0L204.5 375.0M201.5 375.0L200.0 378.0M201.5 375.0L203.0 378.0M204.5 375.0L207.5 375.0M204.5 375.0L203.0 378.0M204.5 375.0L206.0 378.0M207.5 375.0L210.5 375.0M207.5 375.0L206.0 378.0M207.5 375.0L209.0 378.0M210.5 375.0L213.5 375.0M210.5 375.0L209.0 378.0M210.5 375.0L212.0 378.0M213.5 375.0L216.5 375.0M213.5 375.0L212.0 378.0M213.5 375.0L215.0 378.0M216.5 375.0L219.5 375.0M216.5 375.0L215.0 378.0M216.5 375.0L218.0 378.0M219.5 375.0L222.5 375.0M219.5 375.0L218.0 378.0M219.5 375.0L221.0 378.0M222.5 375.0L225.5 375.0M222.5 375.0L221.0 378.0M222.5 375.0L224.0 378.0M225.5 375.0L228.5 375.0M225.5 375.0L224.0 378.0M225.5 375.0L227.0 378.0M228.5 375.0L231.5 375.0M228.5 375.0L227.0 378.0M228.5 375.0L230.0 378.0M231.5 375.0L234.5 375.0M231.5 375.0L230.0 378.0M231.5 375.0L233.0 378.0M234.5 375.0L237.5 375.0M234.5 375.0L233.0 378.0M234.5 375.0L236.0 378.0M237.5 375.0L240.5 375.0M237.5 375.0L236.0 378.0M237.5 375.0L239.0 378.0M240.5 375.0L243.5 375.0M240.5 375.0L239.0 378.0M240.5 375.0L242.0 378.0M243.5 375.0L242.0 378.0M243.5 375.0L245.0 378.0M29.0 378.0L32.0 378.0M29.0 378.0L30.5 381.0M32.0 378.0L35.0 378.0M32.0 378.0L30.5 381.0M32.0 378.0L33.5 381.0M35.0 378.0L38.0 378.0M35.0 378.0L33.5 381.0M35.0 378.0L36.5 381.0M38.0 378.0L41.0 378.0M38.0 378.0L36.5 381.0M38.0 378.0L39.5 381.0M41.0 378.0L44.0 378.0M41.0 378.0L39.5 381.0M41.0 378.0L42.5 381.0M44.0 378.0L47.0 378.0M44.0 378.0L42.5 381.0M44.0 378.0L45.5 381.0M47.0 378.0L50.0 378.0M47.0 378.0L45.5 381.0M47.0 378.0L48.5 381.0M50.0 378.0L53.0 378.0M50.0 378.0L48.5 381.0M50.0 378.0L51.5 381.0M53.0 378.0L56.0 378.0M53.0 378.0L51.5 381.0M53.0 378.0L54.5 381.0M56.0 378.0L59.0 378.0M56.0 378.0L54.5 381.0M56.0 378.0L57.5 381.0M59.0 378.0L62.0 378.0M59.0 378.0L57.5 381.0M59.0 378.0L60.5 381.0M62.0 378.0L65.0 378.0M62.0 378.0L60.5 381.0M62.0 378.0L63.5 381.0M65.0 378.0L68.0 378.0M65.0 378.0L63.5 381.0M65.0 378.0L66.5 381.0M68.0 378.0L71.0 378.0M68.0 378.0L66.5 381.0M68.0 378.0L69.5 381.0M71.0 378.0L74.0 378.0M71.0 378.0L69.5 381.0M71.0 378.0L72.5 381.0M74.0 378.0L77.0 378.0M74.0 378.0L72.5 381.0M74.0 378.0L75.5 381.0M77.0 378.0L80.0 378.0M77.0 378.0L75.5 381.0M77.0 378.0L78.5 381.0M80.0 378.0L83.0 378.0M80.0 378.0L78.5 381.0M80.0 378.0L81.5 381.0M83.0 378.0L86.0 378.0M83.0 378.0L81.5 381.0M83.0 378.0L84.5 381.0M86.0 378.0L89.0 378.0M86.0 378.0L84.5 381.0M86.0 378.0L87.5 381.0M89.0 378.0L92.0 378.0M89.0 378.0L87.5 381.0M89.0 378.0L90.5 381.0M92.0 378.0L95.0 378.0M92.0 378.0L90.5 381.0M92.0 378.0L93.5 381.0M95.0 378.0L98.0 378.0M95.0 378.0L93.5 381.0M95.0 378.0L96.5 381.0M98.0 378.0L101.0 378.0M98.0 378.0L96.5 381.0M98.0 378.0L99.5 381.0M101.0 378.0L104.0 378.0M101.0 378.0L99.5 381.0M101.0 378.0L102.5 381.0M104.0 378.0L107.0 378.0M104.0 378.0L102.5 381.0M104.0 378.0L105.5 381.0M107.0 378.0L110.0 378.0M107.0 378.0L105.5 381.0M107.0 378.0L108.5 381.0M110.0 378.0L113.0 378.0M110.0 378.0L108.5 381.0M110.0 378.0L111.5 381.0M113.0 378.0L116.0 378.0M113.0 378.0L111.5 381.0M113.0 378.0L114.5 381.0M116.0 378.0L119.0 378.0M116.0 378.0L114.5 381.0M116.0 378.0L117.5 381.0M119.0 378.0L122.0 378.0M119.0 378.0L117.5 381.0M119.0 378.0L120.5 381.0M122.0 378.0L125.0 378.0M122.0 378.0L120.5 381.0M122.0 378.0L123.5 381.0M125.0 378.0L128.0 378.0M125.0 378.0L123.5 381.0M125.0 378.0L126.5 381.0M128.0 378.0L131.0 378.0M128.0 378.0L126.5 381.0M128.0 378.0L129.5 381.0M131.0 378.0L134.0 378.0M131.0 378.0L129.5 381.0M131.0 378.0L132.5 381.0M134.0 378.0L137.0 378.0M134.0 378.0L132.5 381.0M134.0 378.0L135.5 381.0M137.0 378.0L140.0 378.0M137.0 378.0L135.5 381.0M137.0 378.0L138.5 381.0M140.0 378.0L143.0 378.0M140.0 378.0L138.5 381.0M140.0 378.0L141.5 381.0M143.0 378.0L146.0 378.0M143.0 378.0L141.5 381.0M143.0 378.0L144.5 381.0M146.0 378.0L149.0 378.0M146.0 378.0L144.5 381.0M146.0 378.0L147.5 381.0M149.0 378.0L152.0 378.0M149.0 378.0L147.5 381.0M149.0 378.0L150.5 381.0M152.0 378.0L155.0 378.0M152.0 378.0L150.5 381.0M152.0 378.0L153.5 381.0M155.0 378.0L158.0 378.0M155.0 378.0L153.5 381.0M155.0 378.0L156.5 381.0M158.0 378.0L161.0 378.0M158.0 378.0L156.5 381.0M158.0 378.0L159.5 381.0M161.0 378.0L164.0 378.0M161.0 378.0L159.5 381.0M161.0 378.0L162.5 381.0M164.0 378.0L167.0 378.0M164.0 378.0L162.5 381.0M164.0 378.0L165.5 381.0M167.0 378.0L170.0 378.0M167.0 378.0L165.5 381.0M167.0 378.0L168.5 381.0M170.0 378.0L173.0 378.0M170.0 378.0L168.5 381.0M170.0 378.0L171.5 381.0M173.0 378.0L176.0 378.0M173.0 378.0L171.5 381.0M173.0 378.0L174.5 381.0M176.0 378.0L179.0 378.0M176.0 378.0L174.5 381.0M176.0 378.0L177.5 381.0M179.0 378.0L182.0 378.0M179.0 378.0L177.5 381.0M179.0 378.0L180.5 381.0M182.0 378.0L185.0 378.0M182.0 378.0L180.5 381.0M182.0 378.0L183.5 381.0M185.0 378.0L188.0 378.0M185.0 378.0L183.5 381.0M185.0 378.0L186.5 381.0M188.0 378.0L191.0 378.0M188.0 378.0L186.5 381.0M188.0 378.0L189.5 381.0M191.0 378.0L194.0 378.0M191.0 378.0L189.5 381.0M191.0 378.0L192.5 381.0M194.0 378.0L197.0 378.0M194.0 378.0L192.5 381.0M194.0 378.0L195.5 381.0M197.0 378.0L200.0 378.0M197.0 378.0L195.5 381.0M197.0 378.0L198.5 381.0M200.0 378.0L203.0 378.0M200.0 378.0L198.5 381.0M200.0 378.0L201.5 381.0M203.0 378.0L206.0 378.0M203.0 378.0L201.5 381.0M203.0 378.0L204.5 381.0M206.0 378.0L209.0 378.0M206.0 378.0L204.5 381.0M206.0 378.0L207.5 381.0M209.0 378.0L212.0 378.0M209.0 378.0L207.5 381.0M209.0 378.0L210.5 381.0M212.0 378.0L215.0 378.0M212.0 378.0L210.5 381.0M212.0 378.0L213.5 381.0M215.0 378.0L218.0 378.0M215.0 378.0L213.5 381.0M215.0 378.0L216.5 381.0M218.0 378.0L221.0 378.0M218.0 378.0L216.5 381.0M218.0 378.0L219.5 381.0M221.0 378.0L224.0 378.0M221.0 378.0L219.5 381.0M221.0 378.0L222.5 381.0M224.0 378.0L227.0 378.0M224.0 378.0L222.5 381.0M224.0 378.0L225.5 381.0M227.0 378.0L230.0 378.0M227.0 378.0L225.5 381.0M227.0 378.0L228.5 381.0M230.0 378.0L233.0 378.0M230.0 378.0L228.5 381.0M230.0 378.0L231.5 381.0M233.0 378.0L236.0 378.0M233.0 378.0L231.5 381.0M233.0 378.0L234.5 381.0M236.0 378.0L239.0 378.0M236.0 378.0L234.5 381.0M236.0 378.0L237.5 381.0M239.0 378.0L242.0 378.0M239.0 378.0L237.5 381.0M239.0 378.0L240.5 381.0M242.0 378.0L245.0 378.0M242.0 378.0L240.5 381.0M242.0 378.0L243.5 381.0M245.0 378.0L248.0 378.0M245.0 378.0L243.5 381.0M245.0 378.0L246.5 381.0M248.0 378.0L251.0 378.0M248.0 378.0L246.5 381.0M248.0 378.0L249.5 381.0M251.0 378.0L254.0 378.0M251.0 378.0L249.5 381.0M251.0 378.0L252.5 381.0M254.0 378.0L257.0 378.0M254.0 378.0L252.5 381.0M254.0 378.0L255.5 381.0M257.0 378.0L260.0 378.0M257.0 378.0L255.5 381.0M257.0 378.0L258.5 381.0M260.0 378.0L263.0 378.0M260.0 378.0L258.5 381.0M260.0 378.0L261.5 381.0M263.0 378.0L266.0 378.0M263.0 378.0L261.5 381.0M263.0 378.0L264.5 381.0M266.0 378.0L264.5 381.0M30.5 381.0L33.5 381.0M30.5 381.0L29.0 384.0M30.5 381.0L32.0 384.0M33.5 381.0L36.5 381.0M33.5 381.0L32.0 384.0M33.5 381.0L35.0 384.0M36.5 381.0L39.5 381.0M36.5 381.0L35.0 384.0M36.5 381.0L38.0 384.0M39.5 381.0L42.5 381.0M39.5 381.0L38.0 384.0M39.5 381.0L41.0 384.0M42.5 381.0L45.5 381.0M42.5 381.0L41.0 384.0M42.5 381.0L44.0 384.0M45.5 381.0L48.5 381.0M45.5 381.0L44.0 384.0M45.5 381.0L47.0 384.0M48.5 381.0L51.5 381.0M48.5 381.0L47.0 384.0M48.5 381.0L50.0 384.0M51.5 381.0L54.5 381.0M51.5 381.0L50.0 384.0M51.5 381.0L53.0 384.0M54.5 381.0L57.5 381.0M54.5 381.0L53.0 384.0M54.5 381.0L56.0 384.0M57.5 381.0L60.5 381.0M57.5 381.0L56.0 384.0M57.5 381.0L59.0 384.0M60.5 381.0L63.5 381.0M60.5 381.0L59.0 384.0M60.5 381.0L62.0 384.0M63.5 381.0L66.5 381.0M63.5 381.0L62.0 384.0M63.5 381.0L65.0 384.0M66.5 381.0L69.5 381.0M66.5 381.0L65.0 384.0M66.5 381.0L68.0 384.0M69.5 381.0L72.5 381.0M69.5 381.0L68.0 384.0M69.5 381.0L71.0 384.0M72.5 381.0L75.5 381.0M72.5 381.0L71.0 384.0M72.5 381.0L74.0 384.0M75.5 381.0L78.5 381.0M75.5 381.0L74.0 384.0M75.5 381.0L77.0 384.0M78.5 381.0L81.5 381.0M78.5 381.0L77.0 384.0M78.5 381.0L80.0 384.0M81.5 381.0L84.5 381.0M81.5 381.0L80.0 384.0M81.5 381.0L83.0 384.0M84.5 381.0L87.5 381.0M84.5 381.0L83.0 384.0M84.5 381.0L86.0 384.0M87.5 381.0L90.5 381.0M87.5 381.0L86.0 384.0M87.5 381.0L89.0 384.0M90.5 381.0L93.5 381.0M90.5 381.0L89.0 384.0M90.5 381.0L92.0 384.0M93.5 381.0L96.5 381.0M93.5 381.0L92.0 384.0M93.5 381.0L95.0 384.0M96.5 381.0L99.5 381.0M96.5 381.0L95.0 384.0M96.5 381.0L98.0 384.0M99.5 381.0L102.5 381.0M99.5 381.0L98.0 384.0M99.5 381.0L101.0 384.0M102.5 381.0L105.5 381.0M102.5 381.0L101.0 384.0M102.5 381.0L104.0 384.0M105.5 381.0L108.5 381.0M105.5 381.0L104.0 384.0M105.5 381.0L107.0 384.0M108.5 381.0L111.5 381.0M108.5 381.0L107.0 384.0M108.5 381.0L110.0 384.0M111.5 381.0L114.5 381.0M111.5 381.0L110.0 384.0M111.5 381.0L113.0 384.0M114.5 381.0L117.5 381.0M114.5 381.0L113.0 384.0M114.5 381.0L116.0 384.0M117.5 381.0L120.5 381.0M117.5 381.0L116.0 384.0M117.5 381.0L119.0 384.0M120.5 381.0L123.5 381.0M120.5 381.0L119.0 384.0M120.5 381.0L122.0 384.0M123.5 381.0L126.5 381.0M123.5 381.0L122.0 384.0M123.5 381.0L125.0 384.0M126.5 381.0L129.5 381.0M126.5 381.0L125.0 384.0M126.5 381.0L128.0 384.0M129.5 381.0L132.5 381.0M129.5 381.0L128.0 384.0M129.5 381.0L131.0 384.0M132.5 381.0L135.5 381.0M132.5 381.0L131.0 384.0M132.5 381.0L134.0 384.0M135.5 381.0L138.5 381.0M135.5 381.0L134.0 384.0M135.5 381.0L137.0 384.0M138.5 381.0L141.5 381.0M138.5 381.0L137.0 384.0M138.5 381.0L140.0 384.0M141.5 381.0L144.5 381.0M141.5 381.0L140.0 384.0M141.5 381.0L143.0 384.0M144.5 381.0L147.5 381.0M144.5 381.0L143.0 384.0M144.5 381.0L146.0 384.0M147.5 381.0L150.5 381.0M147.5 381.0L146.0 384.0M147.5 381.0L149.0 384.0M150.5 381.0L153.5 381.0M150.5 381.0L149.0 384.0M150.5 381.0L152.0 384.0M153.5 381.0L156.5 381.0M153.5 381.0L152.0 384.0M153.5 381.0L155.0 384.0M156.5 381.0L159.5 381.0M156.5 381.0L155.0 384.0M156.5 381.0L158.0 384.0M159.5 381.0L162.5 381.0M159.5 381.0L158.0 384.0M159.5 381.0L161.0 384.0M162.5 381.0L165.5 381.0M162.5 381.0L161.0 384.0M162.5 381.0L164.0 384.0M165.5 381.0L168.5 381.0M165.5 381.0L164.0 384.0M165.5 381.0L167.0 384.0M168.5 381.0L171.5 381.0M168.5 381.0L167.0 384.0M168.5 381.0L170.0 384.0M171.5 381.0L174.5 381.0M171.5 381.0L170.0 384.0M171.5 381.0L173.0 384.0M174.5 381.0L177.5 381.0M174.5 381.0L173.0 384.0M174.5 381.0L176.0 384.0M177.5 381.0L180.5 381.0M177.5 381.0L176.0 384.0M177.5 381.0L179.0 384.0M180.5 381.0L183.5 381.0M180.5 381.0L179.0 384.0M180.5 381.0L182.0 384.0M183.5 381.0L186.5 381.0M183.5 381.0L182.0 384.0M183.5 381.0L185.0 384.0M186.5 381.0L189.5 381.0M186.5 381.0L185.0 384.0M186.5 381.0L188.0 384.0M189.5 381.0L192.5 381.0M189.5 381.0L188.0 384.0M189.5 381.0L191.0 384.0M192.5 381.0L195.5 381.0M192.5 381.0L191.0 384.0M192.5 381.0L194.0 384.0M195.5 381.0L198.5 381.0M195.5 381.0L194.0 384.0M195.5 381.0L197.0 384.0M198.5 381.0L201.5 381.0M198.5 381.0L197.0 384.0M198.5 381.0L200.0 384.0M201.5 381.0L204.5 381.0M201.5 381.0L200.0 384.0M201.5 381.0L203.0 384.0M204.5 381.0L207.5 381.0M204.5 381.0L203.0 384.0M204.5 381.0L206.0 384.0M207.5 381.0L210.5 381.0M207.5 381.0L206.0 384.0M207.5 381.0L209.0 384.0M210.5 381.0L213.5 381.0M210.5 381.0L209.0 384.0M210.5 381.0L212.0 384.0M213.5 381.0L216.5 381.0M213.5 381.0L212.0 384.0M213.5 381.0L215.0 384.0M216.5 381.0L219.5 381.0M216.5 381.0L215.0 384.0M216.5 381.0L218.0 384.0M219.5 381.0L222.5 381.0M219.5 381.0L218.0 384.0M219.5 381.0L221.0 384.0M222.5 381.0L225.5 381.0M222.5 381.0L221.0 384.0M222.5 381.0L224.0 384.0M225.5 381.0L228.5 381.0M225.5 381.0L224.0 384.0M225.5 381.0L227.0 384.0M228.5 381.0L231.5 381.0M228.5 381.0L227.0 384.0M228.5 381.0L230.0 384.0M231.5 381.0L234.5 381.0M231.5 381.0L230.0 384.0M231.5 381.0L233.0 384.0M234.5 381.0L237.5 381.0M234.5 381.0L233.0 384.0M234.5 381.0L236.0 384.0M237.5 381.0L240.5 381.0M237.5 381.0L236.0 384.0M237.5 381.0L239.0 384.0M240.5 381.0L243.5 381.0M240.5 381.0L239.0 384.0M240.5 381.0L242.0 384.0M243.5 381.0L246.5 381.0M243.5 381.0L242.0 384.0M243.5 381.0L245.0 384.0M246.5 381.0L249.5 381.0M246.5 381.0L245.0 384.0M246.5 381.0L248.0 384.0M249.5 381.0L252.5 381.0M249.5 381.0L248.0 384.0M249.5 381.0L251.0 384.0M252.5 381.0L255.5 381.0M252.5 381.0L251.0 384.0M252.5 381.0L254.0 384.0M255.5 381.0L258.5 381.0M255.5 381.0L254.0 384.0M255.5 381.0L257.0 384.0M258.5 381.0L261.5 381.0M258.5 381.0L257.0 384.0M258.5 381.0L260.0 384.0M261.5 381.0L264.5 381.0M261.5 381.0L260.0 384.0M261.5 381.0L263.0 384.0M264.5 381.0L263.0 384.0M264.5 381.0L266.0 384.0M29.0 384.0L32.0 384.0M29.0 384.0L30.5 387.0M32.0 384.0L35.0 384.0M32.0 384.0L30.5 387.0M32.0 384.0L33.5 387.0M35.0 384.0L38.0 384.0M35.0 384.0L33.5 387.0M35.0 384.0L36.5 387.0M38.0 384.0L41.0 384.0M38.0 384.0L36.5 387.0M38.0 384.0L39.5 387.0M41.0 384.0L44.0 384.0M41.0 384.0L39.5 387.0M41.0 384.0L42.5 387.0M44.0 384.0L47.0 384.0M44.0 384.0L42.5 387.0M44.0 384.0L45.5 387.0M47.0 384.0L50.0 384.0M47.0 384.0L45.5 387.0M47.0 384.0L48.5 387.0M50.0 384.0L53.0 384.0M50.0 384.0L48.5 387.0M50.0 384.0L51.5 387.0M53.0 384.0L56.0 384.0M53.0 384.0L51.5 387.0M56.0 384.0L59.0 384.0M59.0 384.0L62.0 384.0M62.0 384.0L65.0 384.0M65.0 384.0L68.0 384.0M68.0 384.0L71.0 384.0M71.0 384.0L74.0 384.0M74.0 384.0L77.0 384.0M77.0 384.0L80.0 384.0M80.0 384.0L83.0 384.0M83.0 384.0L86.0 384.0M86.0 384.0L89.0 384.0M89.0 384.0L92.0 384.0M92.0 384.0L95.0 384.0M95.0 384.0L98.0 384.0M98.0 384.0L101.0 384.0M101.0 384.0L104.0 384.0M104.0 384.0L107.0 384.0M107.0 384.0L110.0 384.0M110.0 384.0L113.0 384.0M113.0 384.0L116.0 384.0M116.0 384.0L119.0 384.0M119.0 384.0L122.0 384.0M119.0 384.0L120.5 387.0M122.0 384.0L125.0 384.0M122.0 384.0L120.5 387.0M122.0 384.0L123.5 387.0M125.0 384.0L128.0 384.0M125.0 384.0L123.5 387.0M125.0 384.0L126.5 387.0M128.0 384.0L131.0 384.0M128.0 384.0L126.5 387.0M128.0 384.0L129.5 387.0M131.0 384.0L134.0 384.0M131.0 384.0L129.5 387.0M131.0 384.0L132.5 387.0M134.0 384.0L137.0 384.0M134.0 384.0L132.5 387.0M134.0 384.0L135.5 387.0M137.0 384.0L140.0 384.0M137.0 384.0L135.5 387.0M137.0 384.0L138.5 387.0M140.0 384.0L143.0 384.0M140.0 384.0L138.5 387.0M140.0 384.0L141.5 387.0M143.0 384.0L146.0 384.0M143.0 384.0L141.5 387.0M143.0 384.0L144.5 387.0M146.0 384.0L149.0 384.0M146.0 384.0L144.5 387.0M146.0 384.0L147.5 387.0M149.0 384.0L152.0 384.0M149.0 384.0L147.5 387.0M149.0 384.0L150.5 387.0M152.0 384.0L155.0 384.0M152.0 384.0L150.5 387.0M152.0 384.0L153.5 387.0M155.0 384.0L158.0 384.0M155.0 384.0L153.5 387.0M155.0 384.0L156.5 387.0M158.0 384.0L161.0 384.0M158.0 384.0L156.5 387.0M158.0 384.0L159.5 387.0M161.0 384.0L164.0 384.0M161.0 384.0L159.5 387.0M161.0 384.0L162.5 387.0M164.0 384.0L167.0 384.0M164.0 384.0L162.5 387.0M164.0 384.0L165.5 387.0M167.0 384.0L170.0 384.0M167.0 384.0L165.5 387.0M167.0 384.0L168.5 387.0M170.0 384.0L173.0 384.0M170.0 384.0L168.5 387.0M170.0 384.0L171.5 387.0M173.0 384.0L176.0 384.0M173.0 384.0L171.5 387.0M173.0 384.0L174.5 387.0M176.0 384.0L179.0 384.0M176.0 384.0L174.5 387.0M176.0 384.0L177.5 387.0M179.0 384.0L182.0 384.0M179.0 384.0L177.5 387.0M182.0 384.0L185.0 384.0M185.0 384.0L188.0 384.0M188.0 384.0L191.0 384.0M191.0 384.0L194.0 384.0M194.0 384.0L197.0 384.0M197.0 384.0L200.0 384.0M200.0 384.0L203.0 384.0M203.0 384.0L206.0 384.0M206.0 384.0L209.0 384.0M209.0 384.0L212.0 384.0M212.0 384.0L215.0 384.0M215.0 384.0L218.0 384.0M218.0 384.0L221.0 384.0M221.0 384.0L224.0 384.0M224.0 384.0L227.0 384.0M227.0 384.0L230.0 384.0M230.0 384.0L233.0 384.0M233.0 384.0L236.0 384.0M236.0 384.0L239.0 384.0M239.0 384.0L242.0 384.0M242.0 384.0L245.0 384.0M242.0 384.0L243.5 387.0M245.0 384.0L248.0 384.0M245.0 384.0L243.5 387.0M245.0 384.0L246.5 387.0M248.0 384.0L251.0 384.0M248.0 384.0L246.5 387.0M248.0 384.0L249.5 387.0M251.0 384.0L254.0 384.0M251.0 384.0L249.5 387.0M251.0 384.0L252.5 387.0M254.0 384.0L257.0 384.0M254.0 384.0L252.5 387.0M254.0 384.0L255.5 387.0M257.0 384.0L260.0 384.0M257.0 384.0L255.5 387.0M257.0 384.0L258.5 387.0M260.0 384.0L263.0 384.0M260.0 384.0L258.5 387.0M260.0 384.0L261.5 387.0M263.0 384.0L266.0 384.0M263.0 384.0L261.5 387.0M263.0 384.0L264.5 387.0M266.0 384.0L264.5 387.0M30.5 387.0L33.5 387.0M30.5 387.0L29.0 390.0M30.5 387.0L32.0 390.0M33.5 387.0L36.5 387.0M33.5 387.0L32.0 390.0M33.5 387.0L35.0 390.0M36.5 387.0L39.5 387.0M36.5 387.0L35.0 390.0M36.5 387.0L38.0 390.0M39.5 387.0L42.5 387.0M39.5 387.0L38.0 390.0M39.5 387.0L41.0 390.0M42.5 387.0L45.5 387.0M42.5 387.0L41.0 390.0M42.5 387.0L44.0 390.0M45.5 387.0L48.5 387.0M45.5 387.0L44.0 390.0M45.5 387.0L47.0 390.0M48.5 387.0L51.5 387.0M48.5 387.0L47.0 390.0M48.5 387.0L50.0 390.0M51.5 387.0L50.0 390.0M120.5 387.0L123.5 387.0M120.5 387.0L119.0 390.0M120.5 387.0L122.0 390.0M123.5 387.0L126.5 387.0M123.5 387.0L122.0 390.0M123.5 387.0L125.0 390.0M126.5 387.0L129.5 387.0M126.5 387.0L125.0 390.0M126.5 387.0L128.0 390.0M129.5 387.0L132.5 387.0M129.5 387.0L128.0 390.0M129.5 387.0L131.0 390.0M132.5 387.0L135.5 387.0M132.5 387.0L131.0 390.0M132.5 387.0L134.0 390.0M135.5 387.0L138.5 387.0M135.5 387.0L134.0 390.0M135.5 387.0L137.0 390.0M138.5 387.0L141.5 387.0M138.5 387.0L137.0 390.0M138.5 387.0L140.0 390.0M141.5 387.0L144.5 387.0M141.5 387.0L140.0 390.0M141.5 387.0L143.0 390.0M144.5 387.0L147.5 387.0M144.5 387.0L143.0 390.0M144.5 387.0L146.0 390.0M147.5 387.0L150.5 387.0M147.5 387.0L146.0 390.0M147.5 387.0L149.0 390.0M150.5 387.0L153.5 387.0M150.5 387.0L149.0 390.0M150.5 387.0L152.0 390.0M153.5 387.0L156.5 387.0M153.5 387.0L152.0 390.0M153.5 387.0L155.0 390.0M156.5 387.0L159.5 387.0M156.5 387.0L155.0 390.0M156.5 387.0L158.0 390.0M159.5 387.0L162.5 387.0M159.5 387.0L158.0 390.0M159.5 387.0L161.0 390.0M162.5 387.0L165.5 387.0M162.5 387.0L161.0 390.0M162.5 387.0L164.0 390.0M165.5 387.0L168.5 387.0M165.5 387.0L164.0 390.0M165.5 387.0L167.0 390.0M168.5 387.0L171.5 387.0M168.5 387.0L167.0 390.0M168.5 387.0L170.0 390.0M171.5 387.0L174.5 387.0M171.5 387.0L170.0 390.0M171.5 387.0L173.0 390.0M174.5 387.0L177.5 387.0M174.5 387.0L173.0 390.0M174.5 387.0L176.0 390.0M177.5 387.0L176.0 390.0M243.5 387.0L246.5 387.0M243.5 387.0L245.0 390.0M246.5 387.0L249.5 387.0M246.5 387.0L245.0 390.0M246.5 387.0L248.0 390.0M249.5 387.0L252.5 387.0M249.5 387.0L248.0 390.0M249.5 387.0L251.0 390.0M252.5 387.0L255.5 387.0M252.5 387.0L251.0 390.0M252.5 387.0L254.0 390.0M255.5 387.0L258.5 387.0M255.5 387.0L254.0 390.0M255.5 387.0L257.0 390.0M258.5 387.0L261.5 387.0M258.5 387.0L257.0 390.0M258.5 387.0L260.0 390.0M261.5 387.0L264.5 387.0M261.5 387.0L260.0 390.0M261.5 387.0L263.0 390.0M264.5 387.0L263.0 390.0M264.5 387.0L266.0 390.0M29.0 390.0L32.0 390.0M32.0 390.0L35.0 390.0M35.0 390.0L38.0 390.0M38.0 390.0L41.0 390.0M41.0 390.0L44.0 390.0M44.0 390.0L47.0 390.0M44.0 390.0L45.5 393.0M47.0 390.0L50.0 390.0M47.0 390.0L45.5 393.0M47.0 390.0L48.5 393.0M50.0 390.0L48.5 393.0M119.0 390.0L122.0 390.0M119.0 390.0L120.5 393.0M122.0 390.0L125.0 390.0M122.0 390.0L120.5 393.0M122.0 390.0L123.5 393.0M125.0 390.0L128.0 390.0M125.0 390.0L123.5 393.0M125.0 390.0L126.5 393.0M128.0 390.0L131.0 390.0M128.0 390.0L126.5 393.0M128.0 390.0L129.5 393.0M131.0 390.0L134.0 390.0M131.0 390.0L129.5 393.0M131.0 390.0L132.5 393.0M134.0 390.0L137.0 390.0M134.0 390.0L132.5 393.0M134.0 390.0L135.5 393.0M137.0 390.0L140.0 390.0M137.0 390.0L135.5 393.0M137.0 390.0L138.5 393.0M140.0 390.0L143.0 390.0M140.0 390.0L138.5 393.0M140.0 390.0L141.5 393.0M143.0 390.0L146.0 390.0M143.0 390.0L141.5 393.0M143.0 390.0L144.5 393.0M146.0 390.0L149.0 390.0M146.0 390.0L144.5 393.0M146.0 390.0L147.5 393.0M149.0 390.0L152.0 390.0M149.0 390.0L147.5 393.0M149.0 390.0L150.5 393.0M152.0 390.0L155.0 390.0M152.0 390.0L150.5 393.0M152.0 390.0L153.5 393.0M155.0 390.0L158.0 390.0M155.0 390.0L153.5 393.0M155.0 390.0L156.5 393.0M158.0 390.0L161.0 390.0M158.0 390.0L156.5 393.0M158.0 390.0L159.5 393.0M161.0 390.0L164.0 390.0M161.0 390.0L159.5 393.0M161.0 390.0L162.5 393.0M164.0 390.0L167.0 390.0M164.0 390.0L162.5 393.0M164.0 390.0L165.5 393.0M167.0 390.0L170.0 390.0M167.0 390.0L165.5 393.0M167.0 390.0L168.5 393.0M170.0 390.0L173.0 390.0M170.0 390.0L168.5 393.0M170.0 390.0L171.5 393.0M173.0 390.0L176.0 390.0M173.0 390.0L171.5 393.0M173.0 390.0L174.5 393.0M176.0 390.0L174.5 393.0M176.0 390.0L177.5 393.0M245.0 390.0L248.0 390.0M245.0 390.0L246.5 393.0M248.0 390.0L251.0 390.0M248.0 390.0L246.5 393.0M248.0 390.0L249.5 393.0M251.0 390.0L254.0 390.0M251.0 390.0L249.5 393.0M254.0 390.0L257.0 390.0M257.0 390.0L260.0 390.0M260.0 390.0L263.0 390.0M263.0 390.0L266.0 390.0M45.5 393.0L48.5 393.0M45.5 393.0L44.0 396.0M45.5 393.0L47.0 396.0M48.5 393.0L47.0 396.0M48.5 393.0L50.0 396.0M120.5 393.0L123.5 393.0M120.5 393.0L122.0 396.0M123.5 393.0L126.5 393.0M123.5 393.0L122.0 396.0M123.5 393.0L125.0 396.0M126.5 393.0L129.5 393.0M126.5 393.0L125.0 396.0M126.5 393.0L128.0 396.0M129.5 393.0L132.5 393.0M129.5 393.0L128.0 396.0M129.5 393.0L131.0 396.0M132.5 393.0L135.5 393.0M132.5 393.0L131.0 396.0M132.5 393.0L134.0 396.0M135.5 393.0L138.5 393.0M135.5 393.0L134.0 396.0M135.5 393.0L137.0 396.0M138.5 393.0L141.5 393.0M138.5 393.0L137.0 396.0M138.5 393.0L140.0 396.0M141.5 393.0L144.5 393.0M141.5 393.0L140.0 396.0M141.5 393.0L143.0 396.0M144.5 393.0L147.5 393.0M144.5 393.0L143.0 396.0M144.5 393.0L146.0 396.0M147.5 393.0L150.5 393.0M147.5 393.0L146.0 396.0M147.5 393.0L149.0 396.0M150.5 393.0L153.5 393.0M150.5 393.0L149.0 396.0M150.5 393.0L152.0 396.0M153.5 393.0L156.5 393.0M153.5 393.0L152.0 396.0M153.5 393.0L155.0 396.0M156.5 393.0L159.5 393.0M156.5 393.0L155.0 396.0M156.5 393.0L158.0 396.0M159.5 393.0L162.5 393.0M159.5 393.0L158.0 396.0M159.5 393.0L161.0 396.0M162.5 393.0L165.5 393.0M162.5 393.0L161.0 396.0M162.5 393.0L164.0 396.0M165.5 393.0L168.5 393.0M165.5 393.0L164.0 396.0M165.5 393.0L167.0 396.0M168.5 393.0L171.5 393.0M168.5 393.0L167.0 396.0M168.5 393.0L170.0 396.0M171.5 393.0L174.5 393.0M171.5 393.0L170.0 396.0M171.5 393.0L173.0 396.0M174.5 393.0L177.5 393.0M174.5 393.0L173.0 396.0M246.5 393.0L249.5 393.0M246.5 393.0L245.0 396.0M246.5 393.0L248.0 396.0M249.5 393.0L248.0 396.0M249.5 393.0L251.0 396.0M44.0 396.0L47.0 396.0M47.0 396.0L50.0 396.0M122.0 396.0L125.0 396.0M122.0 396.0L123.5 399.0M125.0 396.0L128.0 396.0M125.0 396.0L123.5 399.0M125.0 396.0L126.5 399.0M128.0 396.0L131.0 396.0M128.0 396.0L126.5 399.0M128.0 396.0L129.5 399.0M131.0 396.0L134.0 396.0M131.0 396.0L129.5 399.0M131.0 396.0L132.5 399.0M134.0 396.0L137.0 396.0M134.0 396.0L132.5 399.0M134.0 396.0L135.5 399.0M137.0 396.0L140.0 396.0M137.0 396.0L135.5 399.0M137.0 396.0L138.5 399.0M140.0 396.0L143.0 396.0M140.0 396.0L138.5 399.0M140.0 396.0L141.5 399.0M143.0 396.0L146.0 396.0M143.0 396.0L141.5 399.0M143.0 396.0L144.5 399.0M146.0 396.0L149.0 396.0M146.0 396.0L144.5 399.0M146.0 396.0L147.5 399.0M149.0 396.0L152.0 396.0M149.0 396.0L147.5 399.0M149.0 396.0L150.5 399.0M152.0 396.0L155.0 396.0M152.0 396.0L150.5 399.0M152.0 396.0L153.5 399.0M155.0 396.0L158.0 396.0M155.0 396.0L153.5 399.0M155.0 396.0L156.5 399.0M158.0 396.0L161.0 396.0M158.0 396.0L156.5 399.0M158.0 396.0L159.5 399.0M161.0 396.0L164.0 396.0M161.0 396.0L159.5 399.0M161.0 396.0L162.5 399.0M164.0 396.0L167.0 396.0M164.0 396.0L162.5 399.0M164.0 396.0L165.5 399.0M167.0 396.0L170.0 396.0M167.0 396.0L165.5 399.0M167.0 396.0L168.5 399.0M170.0 396.0L173.0 396.0M170.0 396.0L168.5 399.0M170.0 396.0L171.5 399.0M173.0 396.0L171.5 399.0M245.0 396.0L248.0 396.0M248.0 396.0L251.0 396.0M123.5 399.0L126.5 399.0M126.5 399.0L129.5 399.0M126.5 399.0L128.0 402.0M129.5 399.0L132.5 399.0M129.5 399.0L128.0 402.0M129.5 399.0L131.0 402.0M132.5 399.0L135.5 399.0M132.5 399.0L131.0 402.0M132.5 399.0L134.0 402.0M135.5 399.0L138.5 399.0M135.5 399.0L134.0 402.0M135.5 399.0L137.0 402.0M138.5 399.0L141.5 399.0M138.5 399.0L137.0 402.0M138.5 399.0L140.0 402.0M141.5 399.0L144.5 399.0M141.5 399.0L140.0 402.0M141.5 399.0L143.0 402.0M144.5 399.0L147.5 399.0M144.5 399.0L143.0 402.0M144.5 399.0L146.0 402.0M147.5 399.0L150.5 399.0M147.5 399.0L146.0 402.0M147.5 399.0L149.0 402.0M150.5 399.0L153.5 399.0M150.5 399.0L149.0 402.0M150.5 399.0L152.0 402.0M153.5 399.0L156.5 399.0M153.5 399.0L152.0 402.0M153.5 399.0L155.0 402.0M156.5 399.0L159.5 399.0M156.5 399.0L155.0 402.0M156.5 399.0L158.0 402.0M159.5 399.0L162.5 399.0M159.5 399.0L158.0 402.0M159.5 399.0L161.0 402.0M162.5 399.0L165.5 399.0M162.5 399.0L161.0 402.0M162.5 399.0L164.0 402.0M165.5 399.0L168.5 399.0M165.5 399.0L164.0 402.0M165.5 399.0L167.0 402.0M168.5 399.0L171.5 399.0M168.5 399.0L167.0 402.0M168.5 399.0L170.0 402.0M171.5 399.0L170.0 402.0M128.0 402.0L131.0 402.0M131.0 402.0L134.0 402.0M131.0 402.0L132.5 405.0M134.0 402.0L137.0 402.0M134.0 402.0L132.5 405.0M134.0 402.0L135.5 405.0M137.0 402.0L140.0 402.0M137.0 402.0L135.5 405.0M137.0 402.0L138.5 405.0M140.0 402.0L143.0 402.0M140.0 402.0L138.5 405.0M140.0 402.0L141.5 405.0M143.0 402.0L146.0 402.0M143.0 402.0L141.5 405.0M143.0 402.0L144.5 405.0M146.0 402.0L149.0 402.0M146.0 402.0L144.5 405.0M146.0 402.0L147.5 405.0M149.0 402.0L152.0 402.0M149.0 402.0L147.5 405.0M149.0 402.0L150.5 405.0M152.0 402.0L155.0 402.0M152.0 402.0L150.5 405.0M152.0 402.0L153.5 405.0M155.0 402.0L158.0 402.0M155.0 402.0L153.5 405.0M155.0 402.0L156.5 405.0M158.0 402.0L161.0 402.0M158.0 402.0L156.5 405.0M158.0 402.0L159.5 405.0M161.0 402.0L164.0 402.0M161.0 402.0L159.5 405.0M161.0 402.0L162.5 405.0M164.0 402.0L167.0 402.0M164.0 402.0L162.5 405.0M164.0 402.0L165.5 405.0M167.0 402.0L170.0 402.0M167.0 402.0L165.5 405.0M132.5 405.0L135.5 405.0M135.5 405.0L138.5 405.0M138.5 405.0L141.5 405.0M138.5 405.0L140.0 408.0M141.5 405.0L144.5 405.0M141.5 405.0L140.0 408.0M141.5 405.0L143.0 408.0M144.5 405.0L147.5 405.0M144.5 405.0L143.0 408.0M144.5 405.0L146.0 408.0M147.5 405.0L150.5 405.0M147.5 405.0L146.0 408.0M147.5 405.0L149.0 408.0M150.5 405.0L153.5 405.0M150.5 405.0L149.0 408.0M150.5 405.0L152.0 408.0M153.5 405.0L156.5 405.0M153.5 405.0L152.0 408.0M153.5 405.0L155.0 408.0M156.5 405.0L159.5 405.0M156.5 405.0L155.0 408.0M156.5 405.0L158.0 408.0M159.5 405.0L162.5 405.0M159.5 405.0L158.0 408.0M162.5 405.0L165.5 405.0M140.0 408.0L143.0 408.0M143.0 408.0L146.0 408.0M146.0 408.0L149.0 408.0M149.0 408.0L152.0 408.0M152.0 408.0L155.0 408.0M155.0 408.0L158.0 408.0" stroke="#fff" stroke-width="0.80" stroke-opacity="0.90" fill="none"/><path d="M126.5 363.0h0M129.5 363.0h0M132.5 363.0h0M135.5 363.0h0M138.5 363.0h0M141.5 363.0h0M144.5 363.0h0M147.5 363.0h0M150.5 363.0h0M153.5 363.0h0M156.5 363.0h0M159.5 363.0h0M162.5 363.0h0M165.5 363.0h0M168.5 363.0h0M122.0 366.0h0M125.0 366.0h0M128.0 366.0h0M131.0 366.0h0M134.0 366.0h0M137.0 366.0h0M140.0 366.0h0M143.0 366.0h0M146.0 366.0h0M149.0 366.0h0M152.0 366.0h0M155.0 366.0h0M158.0 366.0h0M161.0 366.0h0M164.0 366.0h0M167.0 366.0h0M170.0 366.0h0M173.0 366.0h0M114.5 369.0h0M117.5 369.0h0M120.5 369.0h0M123.5 369.0h0M126.5 369.0h0M129.5 369.0h0M132.5 369.0h0M135.5 369.0h0M138.5 369.0h0M141.5 369.0h0M144.5 369.0h0M147.5 369.0h0M150.5 369.0h0M153.5 369.0h0M156.5 369.0h0M159.5 369.0h0M162.5 369.0h0M165.5 369.0h0M168.5 369.0h0M171.5 369.0h0M174.5 369.0h0M177.5 369.0h0M180.5 369.0h0M83.0 372.0h0M86.0 372.0h0M89.0 372.0h0M92.0 372.0h0M95.0 372.0h0M98.0 372.0h0M101.0 372.0h0M104.0 372.0h0M107.0 372.0h0M110.0 372.0h0M113.0 372.0h0M116.0 372.0h0M119.0 372.0h0M122.0 372.0h0M125.0 372.0h0M128.0 372.0h0M131.0 372.0h0M134.0 372.0h0M137.0 372.0h0M140.0 372.0h0M143.0 372.0h0M146.0 372.0h0M149.0 372.0h0M152.0 372.0h0M155.0 372.0h0M158.0 372.0h0M161.0 372.0h0M164.0 372.0h0M167.0 372.0h0M170.0 372.0h0M173.0 372.0h0M176.0 372.0h0M179.0 372.0h0M182.0 372.0h0M185.0 372.0h0M188.0 372.0h0M191.0 372.0h0M194.0 372.0h0M197.0 372.0h0M200.0 372.0h0M203.0 372.0h0M206.0 372.0h0M209.0 372.0h0M212.0 372.0h0M51.5 375.0h0M54.5 375.0h0M57.5 375.0h0M60.5 375.0h0M63.5 375.0h0M66.5 375.0h0M69.5 375.0h0M72.5 375.0h0M75.5 375.0h0M78.5 375.0h0M81.5 375.0h0M84.5 375.0h0M87.5 375.0h0M90.5 375.0h0M93.5 375.0h0M96.5 375.0h0M99.5 375.0h0M102.5 375.0h0M105.5 375.0h0M108.5 375.0h0M111.5 375.0h0M114.5 375.0h0M117.5 375.0h0M120.5 375.0h0M123.5 375.0h0M126.5 375.0h0M129.5 375.0h0M132.5 375.0h0M135.5 375.0h0M138.5 375.0h0M141.5 375.0h0M144.5 375.0h0M147.5 375.0h0M150.5 375.0h0M153.5 375.0h0M156.5 375.0h0M159.5 375.0h0M162.5 375.0h0M165.5 375.0h0M168.5 375.0h0M171.5 375.0h0M174.5 375.0h0M177.5 375.0h0M180.5 375.0h0M183.5 375.0h0M186.5 375.0h0M189.5 375.0h0M192.5 375.0h0M195.5 375.0h0M198.5 375.0h0M201.5 375.0h0M204.5 375.0h0M207.5 375.0h0M210.5 375.0h0M213.5 375.0h0M216.5 375.0h0M219.5 375.0h0M222.5 375.0h0M225.5 375.0h0M228.5 375.0h0M231.5 375.0h0M234.5 375.0h0M237.5 375.0h0M240.5 375.0h0M243.5 375.0h0M29.0 378.0h0M32.0 378.0h0M35.0 378.0h0M38.0 378.0h0M41.0 378.0h0M44.0 378.0h0M47.0 378.0h0M50.0 378.0h0M53.0 378.0h0M56.0 378.0h0M59.0 378.0h0M62.0 378.0h0M65.0 378.0h0M68.0 378.0h0M71.0 378.0h0M74.0 378.0h0M77.0 378.0h0M80.0 378.0h0M83.0 378.0h0M86.0 378.0h0M89.0 378.0h0M92.0 378.0h0M95.0 378.0h0M98.0 378.0h0M101.0 378.0h0M104.0 378.0h0M107.0 378.0h0M110.0 378.0h0M113.0 378.0h0M116.0 378.0h0M119.0 378.0h0M122.0 378.0h0M125.0 378.0h0M128.0 378.0h0M131.0 378.0h0M134.0 378.0h0M137.0 378.0h0M140.0 378.0h0M143.0 378.0h0M146.0 378.0h0M149.0 378.0h0M152.0 378.0h0M155.0 378.0h0M158.0 378.0h0M161.0 378.0h0M164.0 378.0h0M167.0 378.0h0M170.0 378.0h0M173.0 378.0h0M176.0 378.0h0M179.0 378.0h0M182.0 378.0h0M185.0 378.0h0M188.0 378.0h0M191.0 378.0h0M194.0 378.0h0M197.0 378.0h0M200.0 378.0h0M203.0 378.0h0M206.0 378.0h0M209.0 378.0h0M212.0 378.0h0M215.0 378.0h0M218.0 378.0h0M221.0 378.0h0M224.0 378.0h0M227.0 378.0h0M230.0 378.0h0M233.0 378.0h0M236.0 378.0h0M239.0 378.0h0M242.0 378.0h0M245.0 378.0h0M248.0 378.0h0M251.0 378.0h0M254.0 378.0h0M257.0 378.0h0M260.0 378.0h0M263.0 378.0h0M266.0 378.0h0M30.5 381.0h0M33.5 381.0h0M36.5 381.0h0M39.5 381.0h0M42.5 381.0h0M45.5 381.0h0M48.5 381.0h0M51.5 381.0h0M54.5 381.0h0M57.5 381.0h0M60.5 381.0h0M63.5 381.0h0M66.5 381.0h0M69.5 381.0h0M72.5 381.0h0M75.5 381.0h0M78.5 381.0h0M81.5 381.0h0M84.5 381.0h0M87.5 381.0h0M90.5 381.0h0M93.5 381.0h0M96.5 381.0h0M99.5 381.0h0M102.5 381.0h0M105.5 381.0h0M108.5 381.0h0M111.5 381.0h0M114.5 381.0h0M117.5 381.0h0M120.5 381.0h0M123.5 381.0h0M126.5 381.0h0M129.5 381.0h0M132.5 381.0h0M135.5 381.0h0M138.5 381.0h0M141.5 381.0h0M144.5 381.0h0M147.5 381.0h0M150.5 381.0h0M153.5 381.0h0M156.5 381.0h0M159.5 381.0h0M162.5 381.0h0M165.5 381.0h0M168.5 381.0h0M171.5 381.0h0M174.5 381.0h0M177.5 381.0h0M180.5 381.0h0M183.5 381.0h0M186.5 381.0h0M189.5 381.0h0M192.5 381.0h0M195.5 381.0h0M198.5 381.0h0M201.5 381.0h0M204.5 381.0h0M207.5 381.0h0M210.5 381.0h0M213.5 381.0h0M216.5 381.0h0M219.5 381.0h0M222.5 381.0h0M225.5 381.0h0M228.5 381.0h0M231.5 381.0h0M234.5 381.0h0M237.5 381.0h0M240.5 381.0h0M243.5 381.0h0M246.5 381.0h0M249.5 381.0h0M252.5 381.0h0M255.5 381.0h0M258.5 381.0h0M261.5 381.0h0M264.5 381.0h0M29.0 384.0h0M32.0 384.0h0M35.0 384.0h0M38.0 384.0h0M41.0 384.0h0M44.0 384.0h0M47.0 384.0h0M50.0 384.0h0M53.0 384.0h0M56.0 384.0h0M59.0 384.0h0M62.0 384.0h0M65.0 384.0h0M68.0 384.0h0M71.0 384.0h0M74.0 384.0h0M77.0 384.0h0M80.0 384.0h0M83.0 384.0h0M86.0 384.0h0M89.0 384.0h0M92.0 384.0h0M95.0 384.0h0M98.0 384.0h0M101.0 384.0h0M104.0 384.0h0M107.0 384.0h0M110.0 384.0h0M113.0 384.0h0M116.0 384.0h0M119.0 384.0h0M122.0 384.0h0M125.0 384.0h0M128.0 384.0h0M131.0 384.0h0M134.0 384.0h0M137.0 384.0h0M140.0 384.0h0M143.0 384.0h0M146.0 384.0h0M149.0 384.0h0M152.0 384.0h0M155.0 384.0h0M158.0 384.0h0M161.0 384.0h0M164.0 384.0h0M167.0 384.0h0M170.0 384.0h0M173.0 384.0h0M176.0 384.0h0M179.0 384.0h0M182.0 384.0h0M185.0 384.0h0M188.0 384.0h0M191.0 384.0h0M194.0 384.0h0M197.0 384.0h0M200.0 384.0h0M203.0 384.0h0M206.0 384.0h0M209.0 384.0h0M212.0 384.0h0M215.0 384.0h0M218.0 384.0h0M221.0 384.0h0M224.0 384.0h0M227.0 384.0h0M230.0 384.0h0M233.0 384.0h0M236.0 384.0h0M239.0 384.0h0M242.0 384.0h0M245.0 384.0h0M248.0 384.0h0M251.0 384.0h0M254.0 384.0h0M257.0 384.0h0M260.0 384.0h0M263.0 384.0h0M266.0 384.0h0M30.5 387.0h0M33.5 387.0h0M36.5 387.0h0M39.5 387.0h0M42.5 387.0h0M45.5 387.0h0M48.5 387.0h0M51.5 387.0h0M120.5 387.0h0M123.5 387.0h0M126.5 387.0h0M129.5 387.0h0M132.5 387.0h0M135.5 387.0h0M138.5 387.0h0M141.5 387.0h0M144.5 387.0h0M147.5 387.0h0M150.5 387.0h0M153.5 387.0h0M156.5 387.0h0M159.5 387.0h0M162.5 387.0h0M165.5 387.0h0M168.5 387.0h0M171.5 387.0h0M174.5 387.0h0M177.5 387.0h0M243.5 387.0h0M246.5 387.0h0M249.5 387.0h0M252.5 387.0h0M255.5 387.0h0M258.5 387.0h0M261.5 387.0h0M264.5 387.0h0M29.0 390.0h0M32.0 390.0h0M35.0 390.0h0M38.0 390.0h0M41.0 390.0h0M44.0 390.0h0M47.0 390.0h0M50.0 390.0h0M119.0 390.0h0M122.0 390.0h0M125.0 390.0h0M128.0 390.0h0M131.0 390.0h0M134.0 390.0h0M137.0 390.0h0M140.0 390.0h0M143.0 390.0h0M146.0 390.0h0M149.0 390.0h0M152.0 390.0h0M155.0 390.0h0M158.0 390.0h0M161.0 390.0h0M164.0 390.0h0M167.0 390.0h0M170.0 390.0h0M173.0 390.0h0M176.0 390.0h0M245.0 390.0h0M248.0 390.0h0M251.0 390.0h0M254.0 390.0h0M257.0 390.0h0M260.0 390.0h0M263.0 390.0h0M266.0 390.0h0M45.5 393.0h0M48.5 393.0h0M120.5 393.0h0M123.5 393.0h0M126.5 393.0h0M129.5 393.0h0M132.5 393.0h0M135.5 393.0h0M138.5 393.0h0M141.5 393.0h0M144.5 393.0h0M147.5 393.0h0M150.5 393.0h0M153.5 393.0h0M156.5 393.0h0M159.5 393.0h0M162.5 393.0h0M165.5 393.0h0M168.5 393.0h0M171.5 393.0h0M174.5 393.0h0M177.5 393.0h0M246.5 393.0h0M249.5 393.0h0M44.0 396.0h0M47.0 396.0h0M50.0 396.0h0M122.0 396.0h0M125.0 396.0h0M128.0 396.0h0M131.0 396.0h0M134.0 396.0h0M137.0 396.0h0M140.0 396.0h0M143.0 396.0h0M146.0 396.0h0M149.0 396.0h0M152.0 396.0h0M155.0 396.0h0M158.0 396.0h0M161.0 396.0h0M164.0 396.0h0M167.0 396.0h0M170.0 396.0h0M173.0 396.0h0M245.0 396.0h0M248.0 396.0h0M251.0 396.0h0M123.5 399.0h0M126.5 399.0h0M129.5 399.0h0M132.5 399.0h0M135.5 399.0h0M138.5 399.0h0M141.5 399.0h0M144.5 399.0h0M147.5 399.0h0M150.5 399.0h0M153.5 399.0h0M156.5 399.0h0M159.5 399.0h0M162.5 399.0h0M165.5 399.0h0M168.5 399.0h0M171.5 399.0h0M128.0 402.0h0M131.0 402.0h0M134.0 402.0h0M137.0 402.0h0M140.0 402.0h0M143.0 402.0h0M146.0 402.0h0M149.0 402.0h0M152.0 402.0h0M155.0 402.0h0M158.0 402.0h0M161.0 402.0h0M164.0 402.0h0M167.0 402.0h0M170.0 402.0h0M132.5 405.0h0M135.5 405.0h0M138.5 405.0h0M141.5 405.0h0M144.5 405.0h0M147.5 405.0h0M150.5 405.0h0M153.5 405.0h0M156.5 405.0h0M159.5 405.0h0M162.5 405.0h0M165.5 405.0h0M140.0 408.0h0M143.0 408.0h0M146.0 408.0h0M149.0 408.0h0M152.0 408.0h0M155.0 408.0h0M158.0 408.0h0" stroke="#fff" stroke-width="2.20" stroke-linecap="round" fill="none"/>
  <g stroke="#a4a4a4" stroke-width="1.2" stroke-dasharray="3 1.5" fill="none"><path d="M50,380 L90,378 L118,377"/><path d="M245,380 L205,378 L177,377"/><path d="M60,383 L110,382"/><path d="M235,383 L185,382"/></g>
  <path d="M29,375.8 L45,375.5 L46,390.7 L29,390.7 Z M250,375.5 L266,375.8 L266,390.5 L249,390.5 Z" fill="#fff"/>
  <g fill="#9c9c9c" opacity="0.7"><ellipse cx="133" cy="379" rx="2.2" ry="2.6"/><ellipse cx="162" cy="379" rx="2.2" ry="2.6"/><ellipse cx="140" cy="384" rx="1.5" ry="1.5"/><ellipse cx="155" cy="384" rx="1.5" ry="1.5"/></g>
  <line x1="180" y1="384.5" x2="294" y2="384.5" stroke="#c8c832" stroke-width="1" stroke-opacity="0.8"/>
</g>
<!-- BR -->
<g clip-path="url(#cbr)">
  <rect x="296" y="268" width="293" height="236" fill="#337cb1"/>
  <g stroke="#6c7886" stroke-width="1" opacity="0.8"><line x1="447.3" y1="510.0" x2="595.0" y2="463.2"/><line x1="290.0" y1="476.7" x2="441.9" y2="447.4"/><line x1="290.0" y1="440.7" x2="595.0" y2="398.3"/><line x1="290.0" y1="420.6" x2="595.0" y2="387.3"/><line x1="290.0" y1="407.7" x2="595.0" y2="380.3"/><line x1="290.0" y1="398.8" x2="590.7" y2="375.8"/><line x1="290.0" y1="392.3" x2="571.1" y2="373.5"/><line x1="290.0" y1="387.3" x2="554.6" y2="371.6"/><line x1="290.0" y1="383.3" x2="540.6" y2="369.9"/><line x1="290.0" y1="380.1" x2="528.5" y2="368.5"/><line x1="290.0" y1="377.5" x2="517.9" y2="367.3"/><line x1="290.0" y1="378.8" x2="293.7" y2="377.3"/><line x1="290.0" y1="392.9" x2="318.8" y2="376.2"/><line x1="290.0" y1="433.7" x2="342.0" y2="375.2"/><line x1="356.3" y1="510.0" x2="363.5" y2="374.2"/><line x1="441.9" y1="447.4" x2="383.7" y2="373.3"/><line x1="595.0" y1="490.6" x2="402.5" y2="372.4"/><line x1="595.0" y1="442.3" x2="420.1" y2="371.7"/><line x1="595.0" y1="418.5" x2="436.6" y2="370.9"/><line x1="595.0" y1="404.3" x2="452.2" y2="370.2"/><line x1="595.0" y1="394.9" x2="466.9" y2="369.6"/><line x1="595.0" y1="388.3" x2="480.7" y2="368.9"/><line x1="595.0" y1="383.3" x2="493.8" y2="368.4"/><line x1="595.0" y1="379.4" x2="506.2" y2="367.8"/><line x1="595.0" y1="376.3" x2="517.9" y2="367.3"/></g>
  <line x1="442.7" y1="268" x2="442.7" y2="447.6" stroke="#30b4e0" stroke-width="1.5"/>
  <line x1="442.6" y1="447.6" x2="589.0" y2="419.1" stroke="#8cc080" stroke-width="1.1" />
  <line x1="442.6" y1="447.6" x2="486.7" y2="504.5" stroke="#7050d0" stroke-width="1.8" />
  <path d="M438.6,319.3 L445.8,319.3 L446.6,323.5 L449.5,326.3 L454.3,327.9 L457.2,330.5 L459.5,335 L463.8,342.4 L469,347.6 L474,352.7 L479,357.8 L484.3,363 L488,367.5 L491.2,371.6 L490.6,373.6 L488.5,373.2 L484.3,369.9 L479,364.7 L474,359.6 L468,354.4 L462,349.3 L457,343.5 L453.6,339.5 L453.5,341.5 L452.8,347 L451.8,354.5 L452.2,360 L452.6,364.7 L455.2,373.3 L456,383.6 L455.2,390 L453.7,400 L451.7,411.6 L451,425.4 L450.3,433.7 L449.5,436.2 L447.2,435.8 L446.5,431.5 L446.2,418.6 L445.5,405 L444.8,390 L442.7,380 L440.6,390 L440,405 L439.5,418.6 L438.5,430 L437.5,436.2 L434.8,436.8 L434,433 L433,425.4 L431.8,418 L431.6,411.6 L430.8,400 L430.2,388 L429.5,383.6 L430.3,373.3 L432,364.7 L432.6,359 L432.9,354.5 L432,347 L431.2,340.7 L429.5,336.4 L424.5,339.8 L419.2,343.3 L410.6,351 L402,358.7 L397.7,363.5 L393.4,368.2 L386.6,375.9 L383.6,378.8 L382.2,377.8 L383.1,376.7 L386.5,371.6 L390,366.5 L395,360.5 L400.3,354.5 L406.3,348.4 L412.3,342.4 L420,334.5 L424,330.5 L427.7,327.9 L434.5,326.3 L437.6,323.5 Z" fill="url(#skin)" filter="url(#ish)"/>
  <circle cx="437.8" cy="340.5" r="4.6" fill="url(#breast)"/><circle cx="448.5" cy="340.5" r="3.8" fill="url(#breast)" opacity="0.6"/><path d="M446.2,333.5 L448,335.5" stroke="#303034" stroke-width="1" fill="none"/><path d="M436,372 Q442.5,380 449,372" stroke="#a8a8ae" stroke-width="1.2" fill="none" opacity="0.3"/>
</g>
<rect x="294" y="28" width="2" height="477" fill="#f8f8f8"/>
<rect x="0" y="265" width="589" height="2.5" fill="#f8f8f8"/>
</svg>

<!-- right panel -->
<div class="a" style="left:589px;top:28px;width:111px;height:477px;background:#ecebf0"></div>
<div class="a" style="left:589px;top:28px;width:2px;height:477px;background:#fbfbfc"></div>
<!-- tabs -->
<div class="a tab" style="left:593px;top:28.5px;width:20px;height:11px">Model</div>
<div class="a tab" style="left:641px;top:28.5px;width:28px;height:11px">Materials</div>
<div class="a tab" style="left:670px;top:28.5px;width:21.5px;height:11px">Joints</div>
<div class="a" style="left:592px;top:38.5px;width:106.5px;height:466px;border:1px solid #a9b0b8;border-left-color:#fff;background:#eceaf0"></div>
<div class="a tab act" style="left:614px;top:27px;width:26px;height:13px">Groups</div>
<!-- listbox -->
<div class="a" style="left:593px;top:40px;width:104px;height:81.5px;background:#fff;border:1px solid #c4ccd8"></div>
<div class="a" style="left:594.5px;top:42.2px;width:100.5px;height:6.6px;background:#3a62b0"></div>
<div class="a tx" style="left:596px;top:42px;color:#fff">Cilinder001 &lt;No Material&gt;</div>
<div class="a tx" style="left:596px;top:49px">Torus001 &lt;No Material&gt;</div>
<div class="a tx" style="left:596px;top:56px">Sphere001 &lt;No Material&gt;</div>
<div class="a tx" style="left:596px;top:63px">group_base &lt;No Material&gt;</div>
<!-- Group box -->
<div class="a gb" style="left:594px;top:131px;width:100px;height:51px"></div>
<div class="a tx lbl" style="left:597px;top:125px">Group</div>
<div class="btn" style="left:599px;top:137px;width:43px;height:8.5px">Select</div>
<div class="btn" style="left:645px;top:137px;width:43px;height:8.5px">Hide</div>
<div class="btn" style="left:599px;top:148px;width:43px;height:8.5px">Delete</div>
<div class="btn" style="left:645px;top:148px;width:43px;height:8.5px">Regroup</div>
<div class="btn" style="left:599px;top:159px;width:43px;height:8.5px">Rename</div>
<div class="a tx" style="left:645px;top:158.5px;width:43px;height:9px;background:#fff;border:1px solid #c4ccd8;padding-left:1px;line-height:8px">Torus001</div>
<div class="btn" style="left:599px;top:170px;width:43px;height:8.5px">Comment</div>
<div class="btn" style="left:645px;top:170px;width:20px;height:8.5px">Up</div>
<div class="btn" style="left:668.5px;top:170px;width:19.5px;height:8.5px">Down</div>
<!-- Smoothing box -->
<div class="a gb" style="left:593.5px;top:191px;width:100px;height:89px"></div>
<div class="a tx lbl" style="left:597px;top:185px">Smoothing Groups</div>
<div class="btn dflt" style="left:600px;top:197px;width:42px;height:9px">Select</div>
<div class="btn dflt" style="left:644px;top:197px;width:42px;height:9px">Assign</div>
<div class="nb" style="left:600.3px;top:208.0px">1</div><div class="nb" style="left:611.2px;top:208.0px">2</div><div class="nb" style="left:622.2px;top:208.0px">3</div><div class="nb" style="left:633.1px;top:208.0px">4</div><div class="nb" style="left:644.1px;top:208.0px">5</div><div class="nb" style="left:655.0px;top:208.0px">6</div><div class="nb" style="left:665.9px;top:208.0px">7</div><div class="nb" style="left:676.9px;top:208.0px">8</div><div class="nb" style="left:600.3px;top:219.2px">9</div><div class="nb" style="left:611.2px;top:219.2px">10</div><div class="nb" style="left:622.2px;top:219.2px">11</div><div class="nb" style="left:633.1px;top:219.2px">12</div><div class="nb" style="left:644.1px;top:219.2px">13</div><div class="nb" style="left:655.0px;top:219.2px">14</div><div class="nb" style="left:665.9px;top:219.2px">15</div><div class="nb" style="left:676.9px;top:219.2px">16</div><div class="nb" style="left:600.3px;top:230.4px">17</div><div class="nb" style="left:611.2px;top:230.4px">18</div><div class="nb" style="left:622.2px;top:230.4px">19</div><div class="nb" style="left:633.1px;top:230.4px">20</div><div class="nb" style="left:644.1px;top:230.4px">21</div><div class="nb" style="left:655.0px;top:230.4px">22</div><div class="nb" style="left:665.9px;top:230.4px">23</div><div class="nb" style="left:676.9px;top:230.4px">24</div><div class="nb" style="left:600.3px;top:241.4px">25</div><div class="nb" style="left:611.2px;top:241.4px">26</div><div class="nb" style="left:622.2px;top:241.4px">27</div><div class="nb" style="left:633.1px;top:241.4px">28</div><div class="nb" style="left:644.1px;top:241.4px">29</div><div class="nb" style="left:655.0px;top:241.4px">30</div><div class="nb" style="left:665.9px;top:241.4px">31</div><div class="nb" style="left:676.9px;top:241.4px">32</div>
<div class="btn" style="left:600px;top:254.5px;width:86.5px;height:9px">Clear All</div>
<div class="a" style="left:600px;top:266px;width:7px;height:7.5px;border:1px solid #3a5a88;background:#f6f6f6"></div>
<div class="a tx" style="left:608px;top:265.5px">Auto Smooth</div>

<!-- bottom -->
<div class="a" style="left:0;top:505px;width:589px;height:36px;background:#ecebf0"></div>
<div class="a" style="left:0;top:504.5px;width:589px;height:1.5px;background:#fafafa"></div>
<div class="a" style="left:8px;top:512px;width:576px;height:2px;background:#c9c9c2;border-bottom:1px solid #fafafa"></div>
<div class="a" style="left:5px;top:509px;width:7px;height:9px;background:#fbfbe8;border:1px solid #d8d8c0;border-radius:2px 2px 4px 4px"></div>
<div class="a" style="left:8.2px;top:520.5px;width:1.6px;height:3.5px;background:#bcbcc4"></div><div class="a" style="left:27.9px;top:520.5px;width:1.6px;height:3.5px;background:#bcbcc4"></div><div class="a" style="left:47.6px;top:520.5px;width:1.6px;height:3.5px;background:#bcbcc4"></div><div class="a" style="left:67.4px;top:520.5px;width:1.6px;height:3.5px;background:#bcbcc4"></div><div class="a" style="left:87.1px;top:520.5px;width:1.6px;height:3.5px;background:#bcbcc4"></div><div class="a" style="left:106.8px;top:520.5px;width:1.6px;height:3.5px;background:#bcbcc4"></div><div class="a" style="left:126.5px;top:520.5px;width:1.6px;height:3.5px;background:#bcbcc4"></div><div class="a" style="left:146.2px;top:520.5px;width:1.6px;height:3.5px;background:#bcbcc4"></div><div class="a" style="left:166.0px;top:520.5px;width:1.6px;height:3.5px;background:#bcbcc4"></div><div class="a" style="left:185.7px;top:520.5px;width:1.6px;height:3.5px;background:#bcbcc4"></div><div class="a" style="left:205.4px;top:520.5px;width:1.6px;height:3.5px;background:#bcbcc4"></div><div class="a" style="left:225.1px;top:520.5px;width:1.6px;height:3.5px;background:#bcbcc4"></div><div class="a" style="left:244.8px;top:520.5px;width:1.6px;height:3.5px;background:#bcbcc4"></div><div class="a" style="left:264.6px;top:520.5px;width:1.6px;height:3.5px;background:#bcbcc4"></div><div class="a" style="left:284.3px;top:520.5px;width:1.6px;height:3.5px;background:#bcbcc4"></div><div class="a" style="left:304.0px;top:520.5px;width:1.6px;height:3.5px;background:#bcbcc4"></div><div class="a" style="left:323.7px;top:520.5px;width:1.6px;height:3.5px;background:#bcbcc4"></div><div class="a" style="left:343.4px;top:520.5px;width:1.6px;height:3.5px;background:#bcbcc4"></div><div class="a" style="left:363.2px;top:520.5px;width:1.6px;height:3.5px;background:#bcbcc4"></div><div class="a" style="left:382.9px;top:520.5px;width:1.6px;height:3.5px;background:#bcbcc4"></div><div class="a" style="left:402.6px;top:520.5px;width:1.6px;height:3.5px;background:#bcbcc4"></div><div class="a" style="left:422.3px;top:520.5px;width:1.6px;height:3.5px;background:#bcbcc4"></div><div class="a" style="left:442.0px;top:520.5px;width:1.6px;height:3.5px;background:#bcbcc4"></div><div class="a" style="left:461.8px;top:520.5px;width:1.6px;height:3.5px;background:#bcbcc4"></div><div class="a" style="left:481.5px;top:520.5px;width:1.6px;height:3.5px;background:#bcbcc4"></div><div class="a" style="left:501.2px;top:520.5px;width:1.6px;height:3.5px;background:#bcbcc4"></div><div class="a" style="left:520.9px;top:520.5px;width:1.6px;height:3.5px;background:#bcbcc4"></div><div class="a" style="left:540.6px;top:520.5px;width:1.6px;height:3.5px;background:#bcbcc4"></div><div class="a" style="left:560.4px;top:520.5px;width:1.6px;height:3.5px;background:#bcbcc4"></div><div class="a" style="left:580.1px;top:520.5px;width:1.6px;height:3.5px;background:#bcbcc4"></div>
<div class="a tx" style="left:0px;top:528px;color:#111">x 0.000 y 0.180 z 0.847</div>
<!-- anim controls -->
<div class="ab" style="left:591.5px;top:508px">|&lt;</div><div class="ab" style="left:602.0px;top:508px">|&lt;</div><div class="ab" style="left:612.5px;top:508px">&lt;&lt;</div><div class="ab" style="left:623.0px;top:508px">&lt;</div><div class="ab" style="left:633.5px;top:508px">&gt;</div><div class="ab" style="left:644.0px;top:508px">&gt;&gt;</div><div class="ab" style="left:654.5px;top:508px">&gt;|</div><div class="ab" style="left:665.0px;top:508px">&gt;|</div>
<div class="a fld" style="left:591.5px;top:518px;width:18.5px;height:10px">0</div>
<div class="a fld" style="left:612px;top:518px;width:20.5px;height:10px"></div>
<div class="a fld" style="left:634px;top:518px;width:20px;height:10px">30</div>
<div class="a fld" style="left:656px;top:518px;width:20px;height:10px">30</div>
<div class="a" style="left:678px;top:507.5px;width:20px;height:19.5px;border:1.5px solid #3b6cc4;border-radius:2px;background:linear-gradient(#fdfdff,#e4e8f4 60%,#cfd8ec);font-size:7px;letter-spacing:-0.5px;text-align:center;line-height:18px;color:#111">Anim</div>
<div class="a" style="left:594px;top:532px;width:47px;height:2px;background:#d4d4cc;border-bottom:1px solid #fff"></div>
<div class="a" style="left:616.5px;top:529px;width:4.5px;height:8px;background:#e8f0e8;border:1px solid #5a9a70;border-radius:2px"></div>
<div class="a" style="left:645.5px;top:529.5px;width:53px;height:10px;background:#fff;border:1px solid #a0a8b8"></div>
<div class="a" style="left:0;top:539px;width:700px;height:2px;background:#3c4450"></div>
</div></body></html>
